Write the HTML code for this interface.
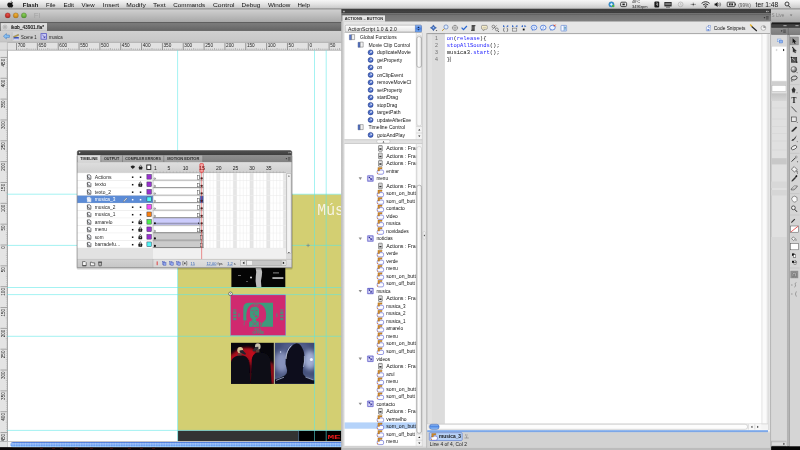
<!DOCTYPE html>
<html><head><meta charset="utf-8"><title>Flash - ikob_43901.fla</title>
<style>html,body{margin:0;padding:0;background:#000;overflow:hidden}svg{display:block;will-change:transform}text{white-space:pre}</style>
</head><body>
<svg width="800" height="450" viewBox="0 0 800 450">
<defs>
<linearGradient id="g1" x1="0" y1="0" x2="0" y2="1"><stop offset="0" stop-color="#d2d2d2"/><stop offset="0.5" stop-color="#bdbdbd"/><stop offset="1" stop-color="#a6a6a6"/></linearGradient>
<radialGradient id="g2" cx="0.5" cy="0.35" r="0.65"><stop offset="0" stop-color="#e8504a"/><stop offset="1" stop-color="#a8221c"/></radialGradient>
<radialGradient id="g3" cx="0.5" cy="0.35" r="0.65"><stop offset="0" stop-color="#f0b03a"/><stop offset="1" stop-color="#b97a12"/></radialGradient>
<radialGradient id="g4" cx="0.5" cy="0.35" r="0.65"><stop offset="0" stop-color="#8ccf5a"/><stop offset="1" stop-color="#4c9428"/></radialGradient>
<linearGradient id="g5" x1="0" y1="0" x2="0" y2="1"><stop offset="0" stop-color="#7e7e7e"/><stop offset="1" stop-color="#646464"/></linearGradient>
<linearGradient id="g6" x1="0" y1="0" x2="0" y2="1"><stop offset="0" stop-color="#e2e2e2"/><stop offset="1" stop-color="#cecece"/></linearGradient>
<linearGradient id="g7" x1="0" y1="0" x2="0" y2="1"><stop offset="0" stop-color="#d0d0d0"/><stop offset="1" stop-color="#c6c6c6"/></linearGradient>
<filter id="b0" x="-5%" y="-5%" width="110%" height="110%"><feGaussianBlur stdDeviation="0.35"/></filter>
<filter id="b1" x="-20%" y="-20%" width="140%" height="140%"><feGaussianBlur stdDeviation="0.7"/></filter>
<filter id="b2" x="-20%" y="-20%" width="140%" height="140%"><feGaussianBlur stdDeviation="1.4"/></filter>
<filter id="b3" x="-30%" y="-30%" width="160%" height="160%"><feGaussianBlur stdDeviation="2.6"/></filter>
<clipPath id="cA"><rect x="231.4" y="262" width="53.9" height="25.1"/></clipPath>
<clipPath id="cB"><rect x="231" y="342.8" width="42.9" height="41"/></clipPath>
<clipPath id="cC"><rect x="274.7" y="342.8" width="40" height="41"/></clipPath>
<linearGradient id="g8" x1="0" y1="0" x2="0" y2="1"><stop offset="0" stop-color="#2c4cb0"/><stop offset="0.12" stop-color="#5584e2"/><stop offset="0.38" stop-color="#a6ccfc"/><stop offset="0.58" stop-color="#5c92ee"/><stop offset="0.85" stop-color="#8cc2fc"/><stop offset="1" stop-color="#a8d6ff"/></linearGradient>
<linearGradient id="g9" x1="0" y1="0" x2="0" y2="1"><stop offset="0" stop-color="#505050"/><stop offset="1" stop-color="#3a3a3a"/></linearGradient>
<linearGradient id="g10" x1="0" y1="0" x2="0" y2="1"><stop offset="0" stop-color="#8e8e8e"/><stop offset="1" stop-color="#808080"/></linearGradient>
<linearGradient id="g11" x1="0" y1="0" x2="0" y2="1"><stop offset="0" stop-color="#e2e2e2"/><stop offset="1" stop-color="#d4d4d4"/></linearGradient>
<linearGradient id="g12" x1="0" y1="0" x2="0" y2="1"><stop offset="0" stop-color="#b2b2b2"/><stop offset="1" stop-color="#9e9e9e"/></linearGradient>
<linearGradient id="g13" x1="0" y1="0" x2="0" y2="1"><stop offset="0" stop-color="#b2b2b2"/><stop offset="1" stop-color="#9e9e9e"/></linearGradient>
<linearGradient id="g14" x1="0" y1="0" x2="0" y2="1"><stop offset="0" stop-color="#b2b2b2"/><stop offset="1" stop-color="#9e9e9e"/></linearGradient>
<linearGradient id="g15" x1="0" y1="0" x2="0" y2="1"><stop offset="0" stop-color="#dedede"/><stop offset="1" stop-color="#d0d0d0"/></linearGradient>
<linearGradient id="g16" x1="0" y1="0" x2="0" y2="1"><stop offset="0" stop-color="#d2d2d2"/><stop offset="1" stop-color="#c6c6c6"/></linearGradient>
<linearGradient id="g17" x1="0" y1="0" x2="0" y2="1"><stop offset="0" stop-color="#e0e0e0"/><stop offset="1" stop-color="#d4d4d4"/></linearGradient>
<linearGradient id="g18" x1="0" y1="0" x2="0" y2="1"><stop offset="0" stop-color="#2c2c2c"/><stop offset="0.5" stop-color="#424242"/><stop offset="1" stop-color="#3a3a3a"/></linearGradient>
<linearGradient id="g19" x1="0" y1="0" x2="0" y2="1"><stop offset="0" stop-color="#505050"/><stop offset="0.25" stop-color="#747474"/><stop offset="1" stop-color="#808080"/></linearGradient>
<linearGradient id="g20" x1="0" y1="0" x2="0" y2="1"><stop offset="0" stop-color="#e8e8e8"/><stop offset="1" stop-color="#dedede"/></linearGradient>
<linearGradient id="g21" x1="0" y1="0" x2="0" y2="1"><stop offset="0" stop-color="#ffffff"/><stop offset="0.5" stop-color="#f2f2f2"/><stop offset="1" stop-color="#e4e4e4"/></linearGradient>
<linearGradient id="g22" x1="0" y1="0" x2="0" y2="1"><stop offset="0" stop-color="#8db8f4"/><stop offset="0.5" stop-color="#4a82e0"/><stop offset="1" stop-color="#78b0f6"/></linearGradient>
<linearGradient id="g23" x1="0" y1="0" x2="1" y2="0"><stop offset="0" stop-color="#e2e2e2"/><stop offset="0.4" stop-color="#ffffff"/><stop offset="1" stop-color="#dadada"/></linearGradient>
<linearGradient id="g24" x1="0" y1="0" x2="1" y2="0"><stop offset="0" stop-color="#e6e6e6"/><stop offset="0.4" stop-color="#ffffff"/><stop offset="1" stop-color="#dedede"/></linearGradient>
<linearGradient id="g25" x1="0" y1="0" x2="1" y2="0"><stop offset="0" stop-color="#9c9c9c"/><stop offset="0.35" stop-color="#c8c8c8"/><stop offset="1" stop-color="#e2e2e2"/></linearGradient>
<linearGradient id="g26" x1="0" y1="0" x2="0" y2="1"><stop offset="0" stop-color="#9cc4f8"/><stop offset="0.45" stop-color="#4f88e4"/><stop offset="1" stop-color="#9ccafc"/></linearGradient>
<linearGradient id="g27" x1="0" y1="0" x2="0" y2="1"><stop offset="0" stop-color="#9cc0f2"/><stop offset="1" stop-color="#6a98e0"/></linearGradient>
<linearGradient id="g28" x1="0" y1="0" x2="1" y2="0"><stop offset="0" stop-color="#dcdcdc"/><stop offset="0.5" stop-color="#a2a2a2"/><stop offset="1" stop-color="#cfcfcf"/></linearGradient>
<linearGradient id="g29" x1="0" y1="0" x2="0" y2="1"><stop offset="0" stop-color="#2e2e2e"/><stop offset="0.5" stop-color="#444"/><stop offset="1" stop-color="#3a3a3a"/></linearGradient>
<linearGradient id="g30" x1="0" y1="0" x2="0" y2="1"><stop offset="0" stop-color="#8e8e8e"/><stop offset="1" stop-color="#7c7c7c"/></linearGradient>
<linearGradient id="g31" x1="0" y1="0" x2="0" y2="1"><stop offset="0" stop-color="#c2c2c2"/><stop offset="1" stop-color="#d6d6d6"/></linearGradient>
<linearGradient id="g32" x1="0" y1="0" x2="1" y2="0"><stop offset="0" stop-color="#d4d4d4"/><stop offset="0.45" stop-color="#a8a8a8"/><stop offset="1" stop-color="#c4c4c4"/></linearGradient>
<radialGradient id="g33" cx="0.35" cy="0.3" r="0.8"><stop offset="0" stop-color="#f4f4f4"/><stop offset="1" stop-color="#444"/></radialGradient>
<linearGradient id="g34" x1="0" y1="0" x2="0" y2="1"><stop offset="0" stop-color="#f6f6f6"/><stop offset="0.45" stop-color="#e4e4e4"/><stop offset="1" stop-color="#c6c6c6"/></linearGradient>
</defs>
<rect x="0" y="8.5" width="800" height="14" fill="url(#g1)" />
<line x1="0" y1="8.8" x2="800" y2="8.8" stroke="#8a8a8a" stroke-width="0.6" />
<circle cx="7.7" cy="15.4" r="2.65" fill="url(#g2)" stroke="#6a6a6a" stroke-opacity="0.5" stroke-width="0.4"/>
<circle cx="15.8" cy="15.4" r="2.65" fill="url(#g3)" stroke="#6a6a6a" stroke-opacity="0.5" stroke-width="0.4"/>
<circle cx="23.9" cy="15.4" r="2.65" fill="url(#g4)" stroke="#6a6a6a" stroke-opacity="0.5" stroke-width="0.4"/>
<text x="33.8" y="18.4" font-size="7.8" fill="#a4a4a4" font-family='"Liberation Sans","DejaVu Sans",sans-serif' >Fl</text>
<text x="771.6" y="17.3" font-size="5.4" fill="#828282" font-family='"Liberation Sans","DejaVu Sans",sans-serif' textLength="12.6" lengthAdjust="spacingAndGlyphs" >S Live</text>
<path d="M789.8 14.4 l2.6 0 l-1.3 1.9z" fill="#777"/>
<rect x="0" y="22.5" width="342" height="8.3" fill="url(#g5)" />
<line x1="0" y1="22.6" x2="342" y2="22.6" stroke="#555" stroke-width="0.5" />
<rect x="0.8" y="23.1" width="46.2" height="7.8" fill="url(#g6)" />
<circle cx="5" cy="27" r="1.9" fill="#e9e9e9" stroke="#8a8a8a" stroke-width="0.5"/>
<path d="M4.1 26.1l1.8 1.8M5.9 26.1l-1.8 1.8" stroke="#777" stroke-width="0.5"/>
<text x="11" y="28.9" font-size="4.6" fill="#111" font-family='"Liberation Sans","DejaVu Sans",sans-serif' textLength="33" lengthAdjust="spacingAndGlyphs" stroke="#111" stroke-width="0.12">ikob_43901.fla*</text>
<rect x="0" y="30.8" width="342" height="11.4" fill="url(#g7)" />
<line x1="0" y1="42.3" x2="342" y2="42.3" stroke="#9a9a9a" stroke-width="0.5" />
<path d="M3.4 36.2 l3-2.6 v1.5 h3 v2.3 h-3 v1.5z" fill="#86c0f4" stroke="#3a72b8" stroke-width="0.5"/>
<rect x="12.2" y="32.2" width="7.7" height="8.8" fill="#d6d6d6" />
<line x1="12.2" y1="32.2" x2="12.2" y2="41" stroke="#a8a8a8" stroke-width="0.4" />
<path d="M13.6 37 h5.2 v2.8 h-5.2z" fill="#3a50b8"/><path d="M13.4 36.4 l5-2.2 l0.5 1.1 l-5 2.2z" fill="#c8a63a" stroke="#554" stroke-width="0.3"/><rect x="13.6" y="38.6" width="5.2" height="1.2" fill="#e8e8ff"/>
<text x="21" y="38.6" font-size="4.6" fill="#222" font-family='"Liberation Sans","DejaVu Sans",sans-serif' textLength="15.5" lengthAdjust="spacingAndGlyphs" >Scene 1</text>
<rect x="40.6" y="33.2" width="6.2" height="6.4" fill="#5a5ac8" />
<rect x="41.4" y="34" width="4.6" height="4.8" fill="#c8c8f4" />
<path d="M42.4 35 l2.6 2.6 M45 37.6 v-1.4 M45 37.6 h-1.4" stroke="#2a2a90" stroke-width="0.6" fill="none"/>
<text x="49" y="38.6" font-size="4.6" fill="#222" font-family='"Liberation Sans","DejaVu Sans",sans-serif' textLength="13.6" lengthAdjust="spacingAndGlyphs" >musica</text>
<rect x="0" y="42.3" width="342" height="7.9" fill="#e2e2e2" />
<rect x="0" y="49" width="7.4" height="392.5" fill="#e4e4e4" />
<line x1="0" y1="50.1" x2="342" y2="50.1" stroke="#a8a8a8" stroke-width="0.4" />
<line x1="7.4" y1="49" x2="7.4" y2="441.5" stroke="#9a9a9a" stroke-width="0.4" />
<line x1="16.54" y1="43" x2="16.54" y2="50" stroke="#444" stroke-width="0.5" />
<text x="17.64" y="47.4" font-size="4.7" fill="#222" font-family='"Liberation Sans","DejaVu Sans",sans-serif' >700</text>
<line x1="18.62" y1="48.6" x2="18.62" y2="49.8" stroke="#555" stroke-width="0.35" />
<line x1="20.71" y1="48.6" x2="20.71" y2="49.8" stroke="#555" stroke-width="0.35" />
<line x1="22.79" y1="48.6" x2="22.79" y2="49.8" stroke="#555" stroke-width="0.35" />
<line x1="24.88" y1="48.6" x2="24.88" y2="49.8" stroke="#555" stroke-width="0.35" />
<line x1="26.96" y1="48" x2="26.96" y2="49.8" stroke="#555" stroke-width="0.35" />
<line x1="29.04" y1="48.6" x2="29.04" y2="49.8" stroke="#555" stroke-width="0.35" />
<line x1="31.13" y1="48.6" x2="31.13" y2="49.8" stroke="#555" stroke-width="0.35" />
<line x1="33.21" y1="48.6" x2="33.21" y2="49.8" stroke="#555" stroke-width="0.35" />
<line x1="35.3" y1="48.6" x2="35.3" y2="49.8" stroke="#555" stroke-width="0.35" />
<line x1="37.38" y1="43" x2="37.38" y2="50" stroke="#444" stroke-width="0.5" />
<text x="38.48" y="47.4" font-size="4.7" fill="#222" font-family='"Liberation Sans","DejaVu Sans",sans-serif' >650</text>
<line x1="39.46" y1="48.6" x2="39.46" y2="49.8" stroke="#555" stroke-width="0.35" />
<line x1="41.55" y1="48.6" x2="41.55" y2="49.8" stroke="#555" stroke-width="0.35" />
<line x1="43.63" y1="48.6" x2="43.63" y2="49.8" stroke="#555" stroke-width="0.35" />
<line x1="45.72" y1="48.6" x2="45.72" y2="49.8" stroke="#555" stroke-width="0.35" />
<line x1="47.8" y1="48" x2="47.8" y2="49.8" stroke="#555" stroke-width="0.35" />
<line x1="49.88" y1="48.6" x2="49.88" y2="49.8" stroke="#555" stroke-width="0.35" />
<line x1="51.97" y1="48.6" x2="51.97" y2="49.8" stroke="#555" stroke-width="0.35" />
<line x1="54.05" y1="48.6" x2="54.05" y2="49.8" stroke="#555" stroke-width="0.35" />
<line x1="56.14" y1="48.6" x2="56.14" y2="49.8" stroke="#555" stroke-width="0.35" />
<line x1="58.22" y1="43" x2="58.22" y2="50" stroke="#444" stroke-width="0.5" />
<text x="59.32" y="47.4" font-size="4.7" fill="#222" font-family='"Liberation Sans","DejaVu Sans",sans-serif' >600</text>
<line x1="60.3" y1="48.6" x2="60.3" y2="49.8" stroke="#555" stroke-width="0.35" />
<line x1="62.39" y1="48.6" x2="62.39" y2="49.8" stroke="#555" stroke-width="0.35" />
<line x1="64.47" y1="48.6" x2="64.47" y2="49.8" stroke="#555" stroke-width="0.35" />
<line x1="66.56" y1="48.6" x2="66.56" y2="49.8" stroke="#555" stroke-width="0.35" />
<line x1="68.64" y1="48" x2="68.64" y2="49.8" stroke="#555" stroke-width="0.35" />
<line x1="70.72" y1="48.6" x2="70.72" y2="49.8" stroke="#555" stroke-width="0.35" />
<line x1="72.81" y1="48.6" x2="72.81" y2="49.8" stroke="#555" stroke-width="0.35" />
<line x1="74.89" y1="48.6" x2="74.89" y2="49.8" stroke="#555" stroke-width="0.35" />
<line x1="76.98" y1="48.6" x2="76.98" y2="49.8" stroke="#555" stroke-width="0.35" />
<line x1="79.06" y1="43" x2="79.06" y2="50" stroke="#444" stroke-width="0.5" />
<text x="80.16" y="47.4" font-size="4.7" fill="#222" font-family='"Liberation Sans","DejaVu Sans",sans-serif' >550</text>
<line x1="81.14" y1="48.6" x2="81.14" y2="49.8" stroke="#555" stroke-width="0.35" />
<line x1="83.23" y1="48.6" x2="83.23" y2="49.8" stroke="#555" stroke-width="0.35" />
<line x1="85.31" y1="48.6" x2="85.31" y2="49.8" stroke="#555" stroke-width="0.35" />
<line x1="87.4" y1="48.6" x2="87.4" y2="49.8" stroke="#555" stroke-width="0.35" />
<line x1="89.48" y1="48" x2="89.48" y2="49.8" stroke="#555" stroke-width="0.35" />
<line x1="91.56" y1="48.6" x2="91.56" y2="49.8" stroke="#555" stroke-width="0.35" />
<line x1="93.65" y1="48.6" x2="93.65" y2="49.8" stroke="#555" stroke-width="0.35" />
<line x1="95.73" y1="48.6" x2="95.73" y2="49.8" stroke="#555" stroke-width="0.35" />
<line x1="97.82" y1="48.6" x2="97.82" y2="49.8" stroke="#555" stroke-width="0.35" />
<line x1="99.9" y1="43" x2="99.9" y2="50" stroke="#444" stroke-width="0.5" />
<text x="101" y="47.4" font-size="4.7" fill="#222" font-family='"Liberation Sans","DejaVu Sans",sans-serif' >500</text>
<line x1="101.98" y1="48.6" x2="101.98" y2="49.8" stroke="#555" stroke-width="0.35" />
<line x1="104.07" y1="48.6" x2="104.07" y2="49.8" stroke="#555" stroke-width="0.35" />
<line x1="106.15" y1="48.6" x2="106.15" y2="49.8" stroke="#555" stroke-width="0.35" />
<line x1="108.24" y1="48.6" x2="108.24" y2="49.8" stroke="#555" stroke-width="0.35" />
<line x1="110.32" y1="48" x2="110.32" y2="49.8" stroke="#555" stroke-width="0.35" />
<line x1="112.4" y1="48.6" x2="112.4" y2="49.8" stroke="#555" stroke-width="0.35" />
<line x1="114.49" y1="48.6" x2="114.49" y2="49.8" stroke="#555" stroke-width="0.35" />
<line x1="116.57" y1="48.6" x2="116.57" y2="49.8" stroke="#555" stroke-width="0.35" />
<line x1="118.66" y1="48.6" x2="118.66" y2="49.8" stroke="#555" stroke-width="0.35" />
<line x1="120.74" y1="43" x2="120.74" y2="50" stroke="#444" stroke-width="0.5" />
<text x="121.84" y="47.4" font-size="4.7" fill="#222" font-family='"Liberation Sans","DejaVu Sans",sans-serif' >450</text>
<line x1="122.82" y1="48.6" x2="122.82" y2="49.8" stroke="#555" stroke-width="0.35" />
<line x1="124.91" y1="48.6" x2="124.91" y2="49.8" stroke="#555" stroke-width="0.35" />
<line x1="126.99" y1="48.6" x2="126.99" y2="49.8" stroke="#555" stroke-width="0.35" />
<line x1="129.08" y1="48.6" x2="129.08" y2="49.8" stroke="#555" stroke-width="0.35" />
<line x1="131.16" y1="48" x2="131.16" y2="49.8" stroke="#555" stroke-width="0.35" />
<line x1="133.24" y1="48.6" x2="133.24" y2="49.8" stroke="#555" stroke-width="0.35" />
<line x1="135.33" y1="48.6" x2="135.33" y2="49.8" stroke="#555" stroke-width="0.35" />
<line x1="137.41" y1="48.6" x2="137.41" y2="49.8" stroke="#555" stroke-width="0.35" />
<line x1="139.5" y1="48.6" x2="139.5" y2="49.8" stroke="#555" stroke-width="0.35" />
<line x1="141.58" y1="43" x2="141.58" y2="50" stroke="#444" stroke-width="0.5" />
<text x="142.68" y="47.4" font-size="4.7" fill="#222" font-family='"Liberation Sans","DejaVu Sans",sans-serif' >400</text>
<line x1="143.66" y1="48.6" x2="143.66" y2="49.8" stroke="#555" stroke-width="0.35" />
<line x1="145.75" y1="48.6" x2="145.75" y2="49.8" stroke="#555" stroke-width="0.35" />
<line x1="147.83" y1="48.6" x2="147.83" y2="49.8" stroke="#555" stroke-width="0.35" />
<line x1="149.92" y1="48.6" x2="149.92" y2="49.8" stroke="#555" stroke-width="0.35" />
<line x1="152" y1="48" x2="152" y2="49.8" stroke="#555" stroke-width="0.35" />
<line x1="154.08" y1="48.6" x2="154.08" y2="49.8" stroke="#555" stroke-width="0.35" />
<line x1="156.17" y1="48.6" x2="156.17" y2="49.8" stroke="#555" stroke-width="0.35" />
<line x1="158.25" y1="48.6" x2="158.25" y2="49.8" stroke="#555" stroke-width="0.35" />
<line x1="160.34" y1="48.6" x2="160.34" y2="49.8" stroke="#555" stroke-width="0.35" />
<line x1="162.42" y1="43" x2="162.42" y2="50" stroke="#444" stroke-width="0.5" />
<text x="163.52" y="47.4" font-size="4.7" fill="#222" font-family='"Liberation Sans","DejaVu Sans",sans-serif' >350</text>
<line x1="164.5" y1="48.6" x2="164.5" y2="49.8" stroke="#555" stroke-width="0.35" />
<line x1="166.59" y1="48.6" x2="166.59" y2="49.8" stroke="#555" stroke-width="0.35" />
<line x1="168.67" y1="48.6" x2="168.67" y2="49.8" stroke="#555" stroke-width="0.35" />
<line x1="170.76" y1="48.6" x2="170.76" y2="49.8" stroke="#555" stroke-width="0.35" />
<line x1="172.84" y1="48" x2="172.84" y2="49.8" stroke="#555" stroke-width="0.35" />
<line x1="174.92" y1="48.6" x2="174.92" y2="49.8" stroke="#555" stroke-width="0.35" />
<line x1="177.01" y1="48.6" x2="177.01" y2="49.8" stroke="#555" stroke-width="0.35" />
<line x1="179.09" y1="48.6" x2="179.09" y2="49.8" stroke="#555" stroke-width="0.35" />
<line x1="181.18" y1="48.6" x2="181.18" y2="49.8" stroke="#555" stroke-width="0.35" />
<line x1="183.26" y1="43" x2="183.26" y2="50" stroke="#444" stroke-width="0.5" />
<text x="184.36" y="47.4" font-size="4.7" fill="#222" font-family='"Liberation Sans","DejaVu Sans",sans-serif' >300</text>
<line x1="185.34" y1="48.6" x2="185.34" y2="49.8" stroke="#555" stroke-width="0.35" />
<line x1="187.43" y1="48.6" x2="187.43" y2="49.8" stroke="#555" stroke-width="0.35" />
<line x1="189.51" y1="48.6" x2="189.51" y2="49.8" stroke="#555" stroke-width="0.35" />
<line x1="191.6" y1="48.6" x2="191.6" y2="49.8" stroke="#555" stroke-width="0.35" />
<line x1="193.68" y1="48" x2="193.68" y2="49.8" stroke="#555" stroke-width="0.35" />
<line x1="195.76" y1="48.6" x2="195.76" y2="49.8" stroke="#555" stroke-width="0.35" />
<line x1="197.85" y1="48.6" x2="197.85" y2="49.8" stroke="#555" stroke-width="0.35" />
<line x1="199.93" y1="48.6" x2="199.93" y2="49.8" stroke="#555" stroke-width="0.35" />
<line x1="202.02" y1="48.6" x2="202.02" y2="49.8" stroke="#555" stroke-width="0.35" />
<line x1="204.1" y1="43" x2="204.1" y2="50" stroke="#444" stroke-width="0.5" />
<text x="205.2" y="47.4" font-size="4.7" fill="#222" font-family='"Liberation Sans","DejaVu Sans",sans-serif' >250</text>
<line x1="206.18" y1="48.6" x2="206.18" y2="49.8" stroke="#555" stroke-width="0.35" />
<line x1="208.27" y1="48.6" x2="208.27" y2="49.8" stroke="#555" stroke-width="0.35" />
<line x1="210.35" y1="48.6" x2="210.35" y2="49.8" stroke="#555" stroke-width="0.35" />
<line x1="212.44" y1="48.6" x2="212.44" y2="49.8" stroke="#555" stroke-width="0.35" />
<line x1="214.52" y1="48" x2="214.52" y2="49.8" stroke="#555" stroke-width="0.35" />
<line x1="216.6" y1="48.6" x2="216.6" y2="49.8" stroke="#555" stroke-width="0.35" />
<line x1="218.69" y1="48.6" x2="218.69" y2="49.8" stroke="#555" stroke-width="0.35" />
<line x1="220.77" y1="48.6" x2="220.77" y2="49.8" stroke="#555" stroke-width="0.35" />
<line x1="222.86" y1="48.6" x2="222.86" y2="49.8" stroke="#555" stroke-width="0.35" />
<line x1="224.94" y1="43" x2="224.94" y2="50" stroke="#444" stroke-width="0.5" />
<text x="226.04" y="47.4" font-size="4.7" fill="#222" font-family='"Liberation Sans","DejaVu Sans",sans-serif' >200</text>
<line x1="227.02" y1="48.6" x2="227.02" y2="49.8" stroke="#555" stroke-width="0.35" />
<line x1="229.11" y1="48.6" x2="229.11" y2="49.8" stroke="#555" stroke-width="0.35" />
<line x1="231.19" y1="48.6" x2="231.19" y2="49.8" stroke="#555" stroke-width="0.35" />
<line x1="233.28" y1="48.6" x2="233.28" y2="49.8" stroke="#555" stroke-width="0.35" />
<line x1="235.36" y1="48" x2="235.36" y2="49.8" stroke="#555" stroke-width="0.35" />
<line x1="237.44" y1="48.6" x2="237.44" y2="49.8" stroke="#555" stroke-width="0.35" />
<line x1="239.53" y1="48.6" x2="239.53" y2="49.8" stroke="#555" stroke-width="0.35" />
<line x1="241.61" y1="48.6" x2="241.61" y2="49.8" stroke="#555" stroke-width="0.35" />
<line x1="243.7" y1="48.6" x2="243.7" y2="49.8" stroke="#555" stroke-width="0.35" />
<line x1="245.78" y1="43" x2="245.78" y2="50" stroke="#444" stroke-width="0.5" />
<text x="246.88" y="47.4" font-size="4.7" fill="#222" font-family='"Liberation Sans","DejaVu Sans",sans-serif' >150</text>
<line x1="247.86" y1="48.6" x2="247.86" y2="49.8" stroke="#555" stroke-width="0.35" />
<line x1="249.95" y1="48.6" x2="249.95" y2="49.8" stroke="#555" stroke-width="0.35" />
<line x1="252.03" y1="48.6" x2="252.03" y2="49.8" stroke="#555" stroke-width="0.35" />
<line x1="254.12" y1="48.6" x2="254.12" y2="49.8" stroke="#555" stroke-width="0.35" />
<line x1="256.2" y1="48" x2="256.2" y2="49.8" stroke="#555" stroke-width="0.35" />
<line x1="258.28" y1="48.6" x2="258.28" y2="49.8" stroke="#555" stroke-width="0.35" />
<line x1="260.37" y1="48.6" x2="260.37" y2="49.8" stroke="#555" stroke-width="0.35" />
<line x1="262.45" y1="48.6" x2="262.45" y2="49.8" stroke="#555" stroke-width="0.35" />
<line x1="264.54" y1="48.6" x2="264.54" y2="49.8" stroke="#555" stroke-width="0.35" />
<line x1="266.62" y1="43" x2="266.62" y2="50" stroke="#444" stroke-width="0.5" />
<text x="267.72" y="47.4" font-size="4.7" fill="#222" font-family='"Liberation Sans","DejaVu Sans",sans-serif' >100</text>
<line x1="268.7" y1="48.6" x2="268.7" y2="49.8" stroke="#555" stroke-width="0.35" />
<line x1="270.79" y1="48.6" x2="270.79" y2="49.8" stroke="#555" stroke-width="0.35" />
<line x1="272.87" y1="48.6" x2="272.87" y2="49.8" stroke="#555" stroke-width="0.35" />
<line x1="274.96" y1="48.6" x2="274.96" y2="49.8" stroke="#555" stroke-width="0.35" />
<line x1="277.04" y1="48" x2="277.04" y2="49.8" stroke="#555" stroke-width="0.35" />
<line x1="279.12" y1="48.6" x2="279.12" y2="49.8" stroke="#555" stroke-width="0.35" />
<line x1="281.21" y1="48.6" x2="281.21" y2="49.8" stroke="#555" stroke-width="0.35" />
<line x1="283.29" y1="48.6" x2="283.29" y2="49.8" stroke="#555" stroke-width="0.35" />
<line x1="285.38" y1="48.6" x2="285.38" y2="49.8" stroke="#555" stroke-width="0.35" />
<line x1="287.46" y1="43" x2="287.46" y2="50" stroke="#444" stroke-width="0.5" />
<text x="288.56" y="47.4" font-size="4.7" fill="#222" font-family='"Liberation Sans","DejaVu Sans",sans-serif' >50</text>
<line x1="289.54" y1="48.6" x2="289.54" y2="49.8" stroke="#555" stroke-width="0.35" />
<line x1="291.63" y1="48.6" x2="291.63" y2="49.8" stroke="#555" stroke-width="0.35" />
<line x1="293.71" y1="48.6" x2="293.71" y2="49.8" stroke="#555" stroke-width="0.35" />
<line x1="295.8" y1="48.6" x2="295.8" y2="49.8" stroke="#555" stroke-width="0.35" />
<line x1="297.88" y1="48" x2="297.88" y2="49.8" stroke="#555" stroke-width="0.35" />
<line x1="299.96" y1="48.6" x2="299.96" y2="49.8" stroke="#555" stroke-width="0.35" />
<line x1="302.05" y1="48.6" x2="302.05" y2="49.8" stroke="#555" stroke-width="0.35" />
<line x1="304.13" y1="48.6" x2="304.13" y2="49.8" stroke="#555" stroke-width="0.35" />
<line x1="306.22" y1="48.6" x2="306.22" y2="49.8" stroke="#555" stroke-width="0.35" />
<line x1="308.3" y1="43" x2="308.3" y2="50" stroke="#444" stroke-width="0.5" />
<text x="309.4" y="47.4" font-size="4.7" fill="#222" font-family='"Liberation Sans","DejaVu Sans",sans-serif' >0</text>
<line x1="310.38" y1="48.6" x2="310.38" y2="49.8" stroke="#555" stroke-width="0.35" />
<line x1="312.47" y1="48.6" x2="312.47" y2="49.8" stroke="#555" stroke-width="0.35" />
<line x1="314.55" y1="48.6" x2="314.55" y2="49.8" stroke="#555" stroke-width="0.35" />
<line x1="316.64" y1="48.6" x2="316.64" y2="49.8" stroke="#555" stroke-width="0.35" />
<line x1="318.72" y1="48" x2="318.72" y2="49.8" stroke="#555" stroke-width="0.35" />
<line x1="320.8" y1="48.6" x2="320.8" y2="49.8" stroke="#555" stroke-width="0.35" />
<line x1="322.89" y1="48.6" x2="322.89" y2="49.8" stroke="#555" stroke-width="0.35" />
<line x1="324.97" y1="48.6" x2="324.97" y2="49.8" stroke="#555" stroke-width="0.35" />
<line x1="327.06" y1="48.6" x2="327.06" y2="49.8" stroke="#555" stroke-width="0.35" />
<line x1="329.14" y1="43" x2="329.14" y2="50" stroke="#444" stroke-width="0.5" />
<text x="330.24" y="47.4" font-size="4.7" fill="#222" font-family='"Liberation Sans","DejaVu Sans",sans-serif' >50</text>
<line x1="331.22" y1="48.6" x2="331.22" y2="49.8" stroke="#555" stroke-width="0.35" />
<line x1="333.31" y1="48.6" x2="333.31" y2="49.8" stroke="#555" stroke-width="0.35" />
<line x1="335.39" y1="48.6" x2="335.39" y2="49.8" stroke="#555" stroke-width="0.35" />
<line x1="337.48" y1="48.6" x2="337.48" y2="49.8" stroke="#555" stroke-width="0.35" />
<line x1="339.56" y1="48" x2="339.56" y2="49.8" stroke="#555" stroke-width="0.35" />
<line x1="0.5" y1="57.44" x2="7.4" y2="57.44" stroke="#555" stroke-width="0.45" />
<text transform="translate(4.9 66.44) rotate(-90)" font-size="4.6" fill="#222" font-family='"Liberation Sans","DejaVu Sans",sans-serif'>450</text>
<line x1="6.4" y1="59.52" x2="7.4" y2="59.52" stroke="#666" stroke-width="0.3" />
<line x1="6.4" y1="61.61" x2="7.4" y2="61.61" stroke="#666" stroke-width="0.3" />
<line x1="6.4" y1="63.69" x2="7.4" y2="63.69" stroke="#666" stroke-width="0.3" />
<line x1="6.4" y1="65.78" x2="7.4" y2="65.78" stroke="#666" stroke-width="0.3" />
<line x1="5.8" y1="67.86" x2="7.4" y2="67.86" stroke="#666" stroke-width="0.3" />
<line x1="6.4" y1="69.94" x2="7.4" y2="69.94" stroke="#666" stroke-width="0.3" />
<line x1="6.4" y1="72.03" x2="7.4" y2="72.03" stroke="#666" stroke-width="0.3" />
<line x1="6.4" y1="74.11" x2="7.4" y2="74.11" stroke="#666" stroke-width="0.3" />
<line x1="6.4" y1="76.2" x2="7.4" y2="76.2" stroke="#666" stroke-width="0.3" />
<line x1="0.5" y1="78.28" x2="7.4" y2="78.28" stroke="#555" stroke-width="0.45" />
<text transform="translate(4.9 87.28) rotate(-90)" font-size="4.6" fill="#222" font-family='"Liberation Sans","DejaVu Sans",sans-serif'>400</text>
<line x1="6.4" y1="80.36" x2="7.4" y2="80.36" stroke="#666" stroke-width="0.3" />
<line x1="6.4" y1="82.45" x2="7.4" y2="82.45" stroke="#666" stroke-width="0.3" />
<line x1="6.4" y1="84.53" x2="7.4" y2="84.53" stroke="#666" stroke-width="0.3" />
<line x1="6.4" y1="86.62" x2="7.4" y2="86.62" stroke="#666" stroke-width="0.3" />
<line x1="5.8" y1="88.7" x2="7.4" y2="88.7" stroke="#666" stroke-width="0.3" />
<line x1="6.4" y1="90.78" x2="7.4" y2="90.78" stroke="#666" stroke-width="0.3" />
<line x1="6.4" y1="92.87" x2="7.4" y2="92.87" stroke="#666" stroke-width="0.3" />
<line x1="6.4" y1="94.95" x2="7.4" y2="94.95" stroke="#666" stroke-width="0.3" />
<line x1="6.4" y1="97.04" x2="7.4" y2="97.04" stroke="#666" stroke-width="0.3" />
<line x1="0.5" y1="99.12" x2="7.4" y2="99.12" stroke="#555" stroke-width="0.45" />
<text transform="translate(4.9 108.12) rotate(-90)" font-size="4.6" fill="#222" font-family='"Liberation Sans","DejaVu Sans",sans-serif'>350</text>
<line x1="6.4" y1="101.2" x2="7.4" y2="101.2" stroke="#666" stroke-width="0.3" />
<line x1="6.4" y1="103.29" x2="7.4" y2="103.29" stroke="#666" stroke-width="0.3" />
<line x1="6.4" y1="105.37" x2="7.4" y2="105.37" stroke="#666" stroke-width="0.3" />
<line x1="6.4" y1="107.46" x2="7.4" y2="107.46" stroke="#666" stroke-width="0.3" />
<line x1="5.8" y1="109.54" x2="7.4" y2="109.54" stroke="#666" stroke-width="0.3" />
<line x1="6.4" y1="111.62" x2="7.4" y2="111.62" stroke="#666" stroke-width="0.3" />
<line x1="6.4" y1="113.71" x2="7.4" y2="113.71" stroke="#666" stroke-width="0.3" />
<line x1="6.4" y1="115.79" x2="7.4" y2="115.79" stroke="#666" stroke-width="0.3" />
<line x1="6.4" y1="117.88" x2="7.4" y2="117.88" stroke="#666" stroke-width="0.3" />
<line x1="0.5" y1="119.96" x2="7.4" y2="119.96" stroke="#555" stroke-width="0.45" />
<text transform="translate(4.9 128.96) rotate(-90)" font-size="4.6" fill="#222" font-family='"Liberation Sans","DejaVu Sans",sans-serif'>300</text>
<line x1="6.4" y1="122.04" x2="7.4" y2="122.04" stroke="#666" stroke-width="0.3" />
<line x1="6.4" y1="124.13" x2="7.4" y2="124.13" stroke="#666" stroke-width="0.3" />
<line x1="6.4" y1="126.21" x2="7.4" y2="126.21" stroke="#666" stroke-width="0.3" />
<line x1="6.4" y1="128.3" x2="7.4" y2="128.3" stroke="#666" stroke-width="0.3" />
<line x1="5.8" y1="130.38" x2="7.4" y2="130.38" stroke="#666" stroke-width="0.3" />
<line x1="6.4" y1="132.46" x2="7.4" y2="132.46" stroke="#666" stroke-width="0.3" />
<line x1="6.4" y1="134.55" x2="7.4" y2="134.55" stroke="#666" stroke-width="0.3" />
<line x1="6.4" y1="136.63" x2="7.4" y2="136.63" stroke="#666" stroke-width="0.3" />
<line x1="6.4" y1="138.72" x2="7.4" y2="138.72" stroke="#666" stroke-width="0.3" />
<line x1="0.5" y1="140.8" x2="7.4" y2="140.8" stroke="#555" stroke-width="0.45" />
<text transform="translate(4.9 149.8) rotate(-90)" font-size="4.6" fill="#222" font-family='"Liberation Sans","DejaVu Sans",sans-serif'>250</text>
<line x1="6.4" y1="142.88" x2="7.4" y2="142.88" stroke="#666" stroke-width="0.3" />
<line x1="6.4" y1="144.97" x2="7.4" y2="144.97" stroke="#666" stroke-width="0.3" />
<line x1="6.4" y1="147.05" x2="7.4" y2="147.05" stroke="#666" stroke-width="0.3" />
<line x1="6.4" y1="149.14" x2="7.4" y2="149.14" stroke="#666" stroke-width="0.3" />
<line x1="5.8" y1="151.22" x2="7.4" y2="151.22" stroke="#666" stroke-width="0.3" />
<line x1="6.4" y1="153.3" x2="7.4" y2="153.3" stroke="#666" stroke-width="0.3" />
<line x1="6.4" y1="155.39" x2="7.4" y2="155.39" stroke="#666" stroke-width="0.3" />
<line x1="6.4" y1="157.47" x2="7.4" y2="157.47" stroke="#666" stroke-width="0.3" />
<line x1="6.4" y1="159.56" x2="7.4" y2="159.56" stroke="#666" stroke-width="0.3" />
<line x1="0.5" y1="161.64" x2="7.4" y2="161.64" stroke="#555" stroke-width="0.45" />
<text transform="translate(4.9 170.64) rotate(-90)" font-size="4.6" fill="#222" font-family='"Liberation Sans","DejaVu Sans",sans-serif'>200</text>
<line x1="6.4" y1="163.72" x2="7.4" y2="163.72" stroke="#666" stroke-width="0.3" />
<line x1="6.4" y1="165.81" x2="7.4" y2="165.81" stroke="#666" stroke-width="0.3" />
<line x1="6.4" y1="167.89" x2="7.4" y2="167.89" stroke="#666" stroke-width="0.3" />
<line x1="6.4" y1="169.98" x2="7.4" y2="169.98" stroke="#666" stroke-width="0.3" />
<line x1="5.8" y1="172.06" x2="7.4" y2="172.06" stroke="#666" stroke-width="0.3" />
<line x1="6.4" y1="174.14" x2="7.4" y2="174.14" stroke="#666" stroke-width="0.3" />
<line x1="6.4" y1="176.23" x2="7.4" y2="176.23" stroke="#666" stroke-width="0.3" />
<line x1="6.4" y1="178.31" x2="7.4" y2="178.31" stroke="#666" stroke-width="0.3" />
<line x1="6.4" y1="180.4" x2="7.4" y2="180.4" stroke="#666" stroke-width="0.3" />
<line x1="0.5" y1="182.48" x2="7.4" y2="182.48" stroke="#555" stroke-width="0.45" />
<text transform="translate(4.9 191.48) rotate(-90)" font-size="4.6" fill="#222" font-family='"Liberation Sans","DejaVu Sans",sans-serif'>150</text>
<line x1="6.4" y1="184.56" x2="7.4" y2="184.56" stroke="#666" stroke-width="0.3" />
<line x1="6.4" y1="186.65" x2="7.4" y2="186.65" stroke="#666" stroke-width="0.3" />
<line x1="6.4" y1="188.73" x2="7.4" y2="188.73" stroke="#666" stroke-width="0.3" />
<line x1="6.4" y1="190.82" x2="7.4" y2="190.82" stroke="#666" stroke-width="0.3" />
<line x1="5.8" y1="192.9" x2="7.4" y2="192.9" stroke="#666" stroke-width="0.3" />
<line x1="6.4" y1="194.98" x2="7.4" y2="194.98" stroke="#666" stroke-width="0.3" />
<line x1="6.4" y1="197.07" x2="7.4" y2="197.07" stroke="#666" stroke-width="0.3" />
<line x1="6.4" y1="199.15" x2="7.4" y2="199.15" stroke="#666" stroke-width="0.3" />
<line x1="6.4" y1="201.24" x2="7.4" y2="201.24" stroke="#666" stroke-width="0.3" />
<line x1="0.5" y1="203.32" x2="7.4" y2="203.32" stroke="#555" stroke-width="0.45" />
<text transform="translate(4.9 212.32) rotate(-90)" font-size="4.6" fill="#222" font-family='"Liberation Sans","DejaVu Sans",sans-serif'>100</text>
<line x1="6.4" y1="205.4" x2="7.4" y2="205.4" stroke="#666" stroke-width="0.3" />
<line x1="6.4" y1="207.49" x2="7.4" y2="207.49" stroke="#666" stroke-width="0.3" />
<line x1="6.4" y1="209.57" x2="7.4" y2="209.57" stroke="#666" stroke-width="0.3" />
<line x1="6.4" y1="211.66" x2="7.4" y2="211.66" stroke="#666" stroke-width="0.3" />
<line x1="5.8" y1="213.74" x2="7.4" y2="213.74" stroke="#666" stroke-width="0.3" />
<line x1="6.4" y1="215.82" x2="7.4" y2="215.82" stroke="#666" stroke-width="0.3" />
<line x1="6.4" y1="217.91" x2="7.4" y2="217.91" stroke="#666" stroke-width="0.3" />
<line x1="6.4" y1="219.99" x2="7.4" y2="219.99" stroke="#666" stroke-width="0.3" />
<line x1="6.4" y1="222.08" x2="7.4" y2="222.08" stroke="#666" stroke-width="0.3" />
<line x1="0.5" y1="224.16" x2="7.4" y2="224.16" stroke="#555" stroke-width="0.45" />
<text transform="translate(4.9 230.56) rotate(-90)" font-size="4.6" fill="#222" font-family='"Liberation Sans","DejaVu Sans",sans-serif'>50</text>
<line x1="6.4" y1="226.24" x2="7.4" y2="226.24" stroke="#666" stroke-width="0.3" />
<line x1="6.4" y1="228.33" x2="7.4" y2="228.33" stroke="#666" stroke-width="0.3" />
<line x1="6.4" y1="230.41" x2="7.4" y2="230.41" stroke="#666" stroke-width="0.3" />
<line x1="6.4" y1="232.5" x2="7.4" y2="232.5" stroke="#666" stroke-width="0.3" />
<line x1="5.8" y1="234.58" x2="7.4" y2="234.58" stroke="#666" stroke-width="0.3" />
<line x1="6.4" y1="236.66" x2="7.4" y2="236.66" stroke="#666" stroke-width="0.3" />
<line x1="6.4" y1="238.75" x2="7.4" y2="238.75" stroke="#666" stroke-width="0.3" />
<line x1="6.4" y1="240.83" x2="7.4" y2="240.83" stroke="#666" stroke-width="0.3" />
<line x1="6.4" y1="242.92" x2="7.4" y2="242.92" stroke="#666" stroke-width="0.3" />
<line x1="0.5" y1="245" x2="7.4" y2="245" stroke="#555" stroke-width="0.45" />
<text transform="translate(4.9 248.8) rotate(-90)" font-size="4.6" fill="#222" font-family='"Liberation Sans","DejaVu Sans",sans-serif'>0</text>
<line x1="6.4" y1="247.08" x2="7.4" y2="247.08" stroke="#666" stroke-width="0.3" />
<line x1="6.4" y1="249.17" x2="7.4" y2="249.17" stroke="#666" stroke-width="0.3" />
<line x1="6.4" y1="251.25" x2="7.4" y2="251.25" stroke="#666" stroke-width="0.3" />
<line x1="6.4" y1="253.34" x2="7.4" y2="253.34" stroke="#666" stroke-width="0.3" />
<line x1="5.8" y1="255.42" x2="7.4" y2="255.42" stroke="#666" stroke-width="0.3" />
<line x1="6.4" y1="257.5" x2="7.4" y2="257.5" stroke="#666" stroke-width="0.3" />
<line x1="6.4" y1="259.59" x2="7.4" y2="259.59" stroke="#666" stroke-width="0.3" />
<line x1="6.4" y1="261.67" x2="7.4" y2="261.67" stroke="#666" stroke-width="0.3" />
<line x1="6.4" y1="263.76" x2="7.4" y2="263.76" stroke="#666" stroke-width="0.3" />
<line x1="0.5" y1="265.84" x2="7.4" y2="265.84" stroke="#555" stroke-width="0.45" />
<text transform="translate(4.9 272.24) rotate(-90)" font-size="4.6" fill="#222" font-family='"Liberation Sans","DejaVu Sans",sans-serif'>50</text>
<line x1="6.4" y1="267.92" x2="7.4" y2="267.92" stroke="#666" stroke-width="0.3" />
<line x1="6.4" y1="270.01" x2="7.4" y2="270.01" stroke="#666" stroke-width="0.3" />
<line x1="6.4" y1="272.09" x2="7.4" y2="272.09" stroke="#666" stroke-width="0.3" />
<line x1="6.4" y1="274.18" x2="7.4" y2="274.18" stroke="#666" stroke-width="0.3" />
<line x1="5.8" y1="276.26" x2="7.4" y2="276.26" stroke="#666" stroke-width="0.3" />
<line x1="6.4" y1="278.34" x2="7.4" y2="278.34" stroke="#666" stroke-width="0.3" />
<line x1="6.4" y1="280.43" x2="7.4" y2="280.43" stroke="#666" stroke-width="0.3" />
<line x1="6.4" y1="282.51" x2="7.4" y2="282.51" stroke="#666" stroke-width="0.3" />
<line x1="6.4" y1="284.6" x2="7.4" y2="284.6" stroke="#666" stroke-width="0.3" />
<line x1="0.5" y1="286.68" x2="7.4" y2="286.68" stroke="#555" stroke-width="0.45" />
<text transform="translate(4.9 295.68) rotate(-90)" font-size="4.6" fill="#222" font-family='"Liberation Sans","DejaVu Sans",sans-serif'>100</text>
<line x1="6.4" y1="288.76" x2="7.4" y2="288.76" stroke="#666" stroke-width="0.3" />
<line x1="6.4" y1="290.85" x2="7.4" y2="290.85" stroke="#666" stroke-width="0.3" />
<line x1="6.4" y1="292.93" x2="7.4" y2="292.93" stroke="#666" stroke-width="0.3" />
<line x1="6.4" y1="295.02" x2="7.4" y2="295.02" stroke="#666" stroke-width="0.3" />
<line x1="5.8" y1="297.1" x2="7.4" y2="297.1" stroke="#666" stroke-width="0.3" />
<line x1="6.4" y1="299.18" x2="7.4" y2="299.18" stroke="#666" stroke-width="0.3" />
<line x1="6.4" y1="301.27" x2="7.4" y2="301.27" stroke="#666" stroke-width="0.3" />
<line x1="6.4" y1="303.35" x2="7.4" y2="303.35" stroke="#666" stroke-width="0.3" />
<line x1="6.4" y1="305.44" x2="7.4" y2="305.44" stroke="#666" stroke-width="0.3" />
<line x1="0.5" y1="307.52" x2="7.4" y2="307.52" stroke="#555" stroke-width="0.45" />
<text transform="translate(4.9 316.52) rotate(-90)" font-size="4.6" fill="#222" font-family='"Liberation Sans","DejaVu Sans",sans-serif'>150</text>
<line x1="6.4" y1="309.6" x2="7.4" y2="309.6" stroke="#666" stroke-width="0.3" />
<line x1="6.4" y1="311.69" x2="7.4" y2="311.69" stroke="#666" stroke-width="0.3" />
<line x1="6.4" y1="313.77" x2="7.4" y2="313.77" stroke="#666" stroke-width="0.3" />
<line x1="6.4" y1="315.86" x2="7.4" y2="315.86" stroke="#666" stroke-width="0.3" />
<line x1="5.8" y1="317.94" x2="7.4" y2="317.94" stroke="#666" stroke-width="0.3" />
<line x1="6.4" y1="320.02" x2="7.4" y2="320.02" stroke="#666" stroke-width="0.3" />
<line x1="6.4" y1="322.11" x2="7.4" y2="322.11" stroke="#666" stroke-width="0.3" />
<line x1="6.4" y1="324.19" x2="7.4" y2="324.19" stroke="#666" stroke-width="0.3" />
<line x1="6.4" y1="326.28" x2="7.4" y2="326.28" stroke="#666" stroke-width="0.3" />
<line x1="0.5" y1="328.36" x2="7.4" y2="328.36" stroke="#555" stroke-width="0.45" />
<text transform="translate(4.9 337.36) rotate(-90)" font-size="4.6" fill="#222" font-family='"Liberation Sans","DejaVu Sans",sans-serif'>200</text>
<line x1="6.4" y1="330.44" x2="7.4" y2="330.44" stroke="#666" stroke-width="0.3" />
<line x1="6.4" y1="332.53" x2="7.4" y2="332.53" stroke="#666" stroke-width="0.3" />
<line x1="6.4" y1="334.61" x2="7.4" y2="334.61" stroke="#666" stroke-width="0.3" />
<line x1="6.4" y1="336.7" x2="7.4" y2="336.7" stroke="#666" stroke-width="0.3" />
<line x1="5.8" y1="338.78" x2="7.4" y2="338.78" stroke="#666" stroke-width="0.3" />
<line x1="6.4" y1="340.86" x2="7.4" y2="340.86" stroke="#666" stroke-width="0.3" />
<line x1="6.4" y1="342.95" x2="7.4" y2="342.95" stroke="#666" stroke-width="0.3" />
<line x1="6.4" y1="345.03" x2="7.4" y2="345.03" stroke="#666" stroke-width="0.3" />
<line x1="6.4" y1="347.12" x2="7.4" y2="347.12" stroke="#666" stroke-width="0.3" />
<line x1="0.5" y1="349.2" x2="7.4" y2="349.2" stroke="#555" stroke-width="0.45" />
<text transform="translate(4.9 358.2) rotate(-90)" font-size="4.6" fill="#222" font-family='"Liberation Sans","DejaVu Sans",sans-serif'>250</text>
<line x1="6.4" y1="351.28" x2="7.4" y2="351.28" stroke="#666" stroke-width="0.3" />
<line x1="6.4" y1="353.37" x2="7.4" y2="353.37" stroke="#666" stroke-width="0.3" />
<line x1="6.4" y1="355.45" x2="7.4" y2="355.45" stroke="#666" stroke-width="0.3" />
<line x1="6.4" y1="357.54" x2="7.4" y2="357.54" stroke="#666" stroke-width="0.3" />
<line x1="5.8" y1="359.62" x2="7.4" y2="359.62" stroke="#666" stroke-width="0.3" />
<line x1="6.4" y1="361.7" x2="7.4" y2="361.7" stroke="#666" stroke-width="0.3" />
<line x1="6.4" y1="363.79" x2="7.4" y2="363.79" stroke="#666" stroke-width="0.3" />
<line x1="6.4" y1="365.87" x2="7.4" y2="365.87" stroke="#666" stroke-width="0.3" />
<line x1="6.4" y1="367.96" x2="7.4" y2="367.96" stroke="#666" stroke-width="0.3" />
<line x1="0.5" y1="370.04" x2="7.4" y2="370.04" stroke="#555" stroke-width="0.45" />
<text transform="translate(4.9 379.04) rotate(-90)" font-size="4.6" fill="#222" font-family='"Liberation Sans","DejaVu Sans",sans-serif'>300</text>
<line x1="6.4" y1="372.12" x2="7.4" y2="372.12" stroke="#666" stroke-width="0.3" />
<line x1="6.4" y1="374.21" x2="7.4" y2="374.21" stroke="#666" stroke-width="0.3" />
<line x1="6.4" y1="376.29" x2="7.4" y2="376.29" stroke="#666" stroke-width="0.3" />
<line x1="6.4" y1="378.38" x2="7.4" y2="378.38" stroke="#666" stroke-width="0.3" />
<line x1="5.8" y1="380.46" x2="7.4" y2="380.46" stroke="#666" stroke-width="0.3" />
<line x1="6.4" y1="382.54" x2="7.4" y2="382.54" stroke="#666" stroke-width="0.3" />
<line x1="6.4" y1="384.63" x2="7.4" y2="384.63" stroke="#666" stroke-width="0.3" />
<line x1="6.4" y1="386.71" x2="7.4" y2="386.71" stroke="#666" stroke-width="0.3" />
<line x1="6.4" y1="388.8" x2="7.4" y2="388.8" stroke="#666" stroke-width="0.3" />
<line x1="0.5" y1="390.88" x2="7.4" y2="390.88" stroke="#555" stroke-width="0.45" />
<text transform="translate(4.9 399.88) rotate(-90)" font-size="4.6" fill="#222" font-family='"Liberation Sans","DejaVu Sans",sans-serif'>350</text>
<line x1="6.4" y1="392.96" x2="7.4" y2="392.96" stroke="#666" stroke-width="0.3" />
<line x1="6.4" y1="395.05" x2="7.4" y2="395.05" stroke="#666" stroke-width="0.3" />
<line x1="6.4" y1="397.13" x2="7.4" y2="397.13" stroke="#666" stroke-width="0.3" />
<line x1="6.4" y1="399.22" x2="7.4" y2="399.22" stroke="#666" stroke-width="0.3" />
<line x1="5.8" y1="401.3" x2="7.4" y2="401.3" stroke="#666" stroke-width="0.3" />
<line x1="6.4" y1="403.38" x2="7.4" y2="403.38" stroke="#666" stroke-width="0.3" />
<line x1="6.4" y1="405.47" x2="7.4" y2="405.47" stroke="#666" stroke-width="0.3" />
<line x1="6.4" y1="407.55" x2="7.4" y2="407.55" stroke="#666" stroke-width="0.3" />
<line x1="6.4" y1="409.64" x2="7.4" y2="409.64" stroke="#666" stroke-width="0.3" />
<line x1="0.5" y1="411.72" x2="7.4" y2="411.72" stroke="#555" stroke-width="0.45" />
<text transform="translate(4.9 420.72) rotate(-90)" font-size="4.6" fill="#222" font-family='"Liberation Sans","DejaVu Sans",sans-serif'>400</text>
<line x1="6.4" y1="413.8" x2="7.4" y2="413.8" stroke="#666" stroke-width="0.3" />
<line x1="6.4" y1="415.89" x2="7.4" y2="415.89" stroke="#666" stroke-width="0.3" />
<line x1="6.4" y1="417.97" x2="7.4" y2="417.97" stroke="#666" stroke-width="0.3" />
<line x1="6.4" y1="420.06" x2="7.4" y2="420.06" stroke="#666" stroke-width="0.3" />
<line x1="5.8" y1="422.14" x2="7.4" y2="422.14" stroke="#666" stroke-width="0.3" />
<line x1="6.4" y1="424.22" x2="7.4" y2="424.22" stroke="#666" stroke-width="0.3" />
<line x1="6.4" y1="426.31" x2="7.4" y2="426.31" stroke="#666" stroke-width="0.3" />
<line x1="6.4" y1="428.39" x2="7.4" y2="428.39" stroke="#666" stroke-width="0.3" />
<line x1="6.4" y1="430.48" x2="7.4" y2="430.48" stroke="#666" stroke-width="0.3" />
<line x1="0.5" y1="432.56" x2="7.4" y2="432.56" stroke="#555" stroke-width="0.45" />
<text transform="translate(4.9 441.56) rotate(-90)" font-size="4.6" fill="#222" font-family='"Liberation Sans","DejaVu Sans",sans-serif'>450</text>
<line x1="6.4" y1="434.64" x2="7.4" y2="434.64" stroke="#666" stroke-width="0.3" />
<line x1="6.4" y1="436.73" x2="7.4" y2="436.73" stroke="#666" stroke-width="0.3" />
<line x1="6.4" y1="438.81" x2="7.4" y2="438.81" stroke="#666" stroke-width="0.3" />
<line x1="6.4" y1="440.9" x2="7.4" y2="440.9" stroke="#666" stroke-width="0.3" />
<rect x="0" y="42.3" width="7.4" height="7.9" fill="#dcdcdc" />
<line x1="0" y1="50.1" x2="7.4" y2="50.1" stroke="#a8a8a8" stroke-width="0.4" />
<line x1="7.4" y1="42.5" x2="7.4" y2="50.2" stroke="#9a9a9a" stroke-width="0.4" />
<rect x="7.6" y="50.3" width="334.4" height="391.2" fill="#ffffff" />
<rect x="177.8" y="194.4" width="163.7" height="235.9" fill="#d3cf72" />
<rect x="177.8" y="430.6" width="120.7" height="10.9" fill="#333333" />
<rect x="298.5" y="430.6" width="43" height="10.9" fill="#000000" />
<text x="327.4" y="438.6" font-size="5.6" fill="#e01818" font-family='"Liberation Mono","DejaVu Sans Mono",monospace' font-weight="bold" textLength="13.4" lengthAdjust="spacingAndGlyphs" >ME</text>
<line x1="298.6" y1="430.6" x2="298.6" y2="441.5" stroke="#2a6fb0" stroke-width="0.4" />
<text x="317.3" y="214.5" font-size="15.6" fill="#f6f3e4" font-family='"Liberation Mono","DejaVu Sans Mono",monospace' textLength="26.6" lengthAdjust="spacingAndGlyphs" >Mús</text>
<rect x="231.4" y="262" width="53.9" height="25.1" fill="#050505" />
<g clip-path="url(#cA)" filter="url(#b1)"><path d="M255.6 268 q1.2 4 0.2 8 q-0.8 5 0.6 11 h5 q-1.2-6 0.4-11 q1-4 -0.6-8z" fill="#bdbdbd"/><rect x="272.4" y="277.3" width="11" height="1.5" fill="#d8d8d8"/><rect x="273" y="272.4" width="6" height="1" fill="#8a8a8a"/><circle cx="251" cy="277.4" r="1" fill="#e0e0e0"/><rect x="238" y="275" width="3" height="0.9" fill="#777"/><rect x="246" y="281" width="2" height="0.8" fill="#666"/></g>
<rect x="230.7" y="294.8" width="55" height="40.5" fill="#d0296f" />
<g filter="url(#b0)"><path d="M243.3 320.400 V308.200 q0-5.400 6-5.400 H273 V326.700 H249.600 V320.400z" fill="#3d9a7c"/><path d="M246.800 322.600 q-1.200-8.400 0.600-13.400 q2.400-5.800 8.600-5.800 q7 0 9.200 5.800 q1.600 5 0.400 10.200 l-2.800 3.200 h-2.600 v4.200 h-9.600 v-4.200z" fill="#d0296f"/><path d="M250.200 309.400 q0.400-2.400 3.200-2.400 h2.800 q2.600 0 2.800 2.600 v5.800 q-0.400 3-3 3.600 v1.800 l2.800 1 v5 h-9.600 v-4.800 l2.600-1.200 v-2 q-1.800-0.800-1.800-3.400z" fill="#3d9a7c"/><ellipse cx="255.800" cy="305.300" rx="2.800" ry="0.900" fill="none" stroke="#3d9a7c" stroke-width="0.600"/><path d="M251.400 310.600h2.200M255.400 310.600h2.400M254.400 311.600l-0.800 3h1.600M252 321.600l5.600 4.600M257.600 321.600l-5.600 4.600M251.600 318.600l1.400 1" stroke="#d0296f" stroke-width="0.550" fill="none"/><ellipse cx="256.200" cy="316.400" rx="1.300" ry="0.800" fill="#d0296f"/><path d="M262.800 320.200l-2 6.200" stroke="#d0296f" stroke-width="0.800"/><path d="M244.600 321.400l-0.600 4" stroke="#3d9a7c" stroke-width="0.600"/></g>
<text x="258.2" y="330.9" font-size="2.6" fill="#3d9a7c" font-family='"Liberation Sans","DejaVu Sans",sans-serif' font-weight="bold" textLength="7.4" lengthAdjust="spacingAndGlyphs" text-anchor="middle" >FULL</text>
<text x="258.2" y="334.1" font-size="2.6" fill="#3d9a7c" font-family='"Liberation Sans","DejaVu Sans",sans-serif' font-weight="bold" textLength="11.6" lengthAdjust="spacingAndGlyphs" text-anchor="middle" >OF FIRE</text>
<g fill="#3d9a7c" fill-opacity="0.800"><rect x="233.2" y="309.4" width="3.200" height="1.200"/><rect x="233.2" y="311.400" width="3.200" height="2.600"/><rect x="233.2" y="314.800" width="3.200" height="2.400"/><rect x="233.2" y="318" width="3.200" height="2.200"/><rect x="238.400" y="313.400" width="1.200" height="3.600"/><rect x="280.200" y="309.400" width="3.200" height="1.200"/><rect x="280.200" y="311.400" width="3.200" height="2.600"/><rect x="280.200" y="314.800" width="3.200" height="2.400"/><rect x="280.200" y="318" width="3.200" height="2.200"/><rect x="276.200" y="313.400" width="1.200" height="3.600"/></g>
<rect x="230.7" y="294.8" width="55" height="40.5" fill="none" stroke="#6a92dc" stroke-width="0.5"/>
<rect x="231" y="342.8" width="42.9" height="41" fill="#07060c" />
<g clip-path="url(#cB)"><g filter="url(#b2)"><path d="M229 364 q4-18 22-16 q10 2 8 30 l-8 4 q2-22-6-24 q-8-1-16 6z" fill="#c20f1e"/><path d="M229 356 q10-8 20-6 l2 8 l-22 6z" fill="#b00d1a"/><path d="M266 362 q6-2 10 6 v16 h-8z" fill="#8a0a16"/></g><g filter="url(#b1)"><path d="M231 384 v-22 q1-4.6 5.6-6 l3-0.8 l4.4 0.6 q4.6 1.8 5 7 l1.4 21.2z" fill="#0a0a16"/><path d="M250.8 384 l1-25 q1-5 5-6.2 l2.8-0.8 l4.2 0.8 q5.6 1.8 6.4 7.4 l1.4 23.8z" fill="#090914"/><ellipse cx="240.2" cy="350.2" rx="2.9" ry="3.1" fill="#d8c494"/><path d="M239.6 350.6 l3.2-0.6 l3.4 4 l-1.2 0.8 l-5.2-2.4z" fill="#24242e"/><ellipse cx="257.8" cy="346.4" rx="2.8" ry="3.2" fill="#c8c0ae"/><path d="M258.4 346.8 l-3.2 0.2 l-2.6 3.8 l1 0.8 l4.8-2.6z" fill="#30303a"/><path d="M237.6 355.6h4v-2h-4z M255.8 352.4h3.6v-2.4h-3.6z" fill="#5a4038"/></g></g>
<rect x="274.7" y="342.8" width="40" height="41" fill="#3e4a76" />
<g clip-path="url(#cC)"><g filter="url(#b3)"><ellipse cx="282" cy="362" rx="8" ry="11" fill="#8792bc"/><ellipse cx="310" cy="360" rx="7" ry="10" fill="#a3afd4"/><ellipse cx="295" cy="346" rx="14" ry="4" fill="#56628e"/><ellipse cx="295" cy="380" rx="22" ry="5" fill="#5c688e"/></g><g filter="url(#b1)"><circle cx="311.4" cy="359.6" r="1.5" fill="#f0f4ff"/><circle cx="280.6" cy="352" r="0.7" fill="#dfe6ff"/><path d="M274.7 384 v-4.4 q6-1.8 10.4-4.4 q2.4-1.6 2-5 q-2.4-5.6-1.4-11.6 q1-7.4 5-11.4 q2.6-3.4 6-4 q3.6 0.4 5.4 4.6 q3 5.4 2.2 12 q-0.8 6.6-1.4 9.800 q-0.4 4 0.800 5.4 q3 2.8 11 5.4 v4.600z" fill="#0e111c"/><path d="M286 359 q0.400-8.600 5.400-13.400" stroke="#e8ecff" stroke-width="0.7" fill="none"/><path d="M304.400 356 q0.600 6-1 11" stroke="#c8d0f0" stroke-width="0.6" fill="none"/><path d="M276 380.400 l8-3.200 M305.400 377 l8 3" stroke="#a4b0d4" stroke-width="0.8" fill="none"/></g></g>
<line x1="274.3" y1="342.8" x2="274.3" y2="383.8" stroke="#c8c8c8" stroke-width="0.5" />
<line x1="177.6" y1="50.3" x2="177.6" y2="441.5" stroke="#58e8e8" stroke-width="0.55" />
<line x1="314.5" y1="50.3" x2="314.5" y2="441.5" stroke="#58e8e8" stroke-width="0.55" />
<line x1="326.2" y1="50.3" x2="326.2" y2="441.5" stroke="#58e8e8" stroke-width="0.55" />
<line x1="7.2" y1="194.2" x2="341.5" y2="194.2" stroke="#58e8e8" stroke-width="0.55" />
<line x1="7.2" y1="245.4" x2="341.5" y2="245.4" stroke="#58e8e8" stroke-width="0.55" />
<line x1="7.2" y1="287.5" x2="341.5" y2="287.5" stroke="#58e8e8" stroke-width="0.55" />
<line x1="7.2" y1="294.6" x2="341.5" y2="294.6" stroke="#58e8e8" stroke-width="0.55" />
<line x1="7.2" y1="336.3" x2="341.5" y2="336.3" stroke="#58e8e8" stroke-width="0.55" />
<line x1="7.2" y1="430.4" x2="341.5" y2="430.4" stroke="#58e8e8" stroke-width="0.55" />
<path d="M306.400 245.400h3.400M308.100 243.700v3.400" stroke="#6a7a8a" stroke-width="0.600"/>
<circle cx="230.5" cy="293.8" r="1.8" fill="#fff" stroke="#222" stroke-width="0.55"/><circle cx="230.5" cy="293.8" r="0.5" fill="#444"/>
<rect x="7.2" y="441.4" width="334.8" height="6" fill="#f4f4f4" />
<line x1="7.2" y1="441.5" x2="342" y2="441.5" stroke="#c4c4c4" stroke-width="0.4" />
<rect x="10.4" y="441.9" width="336" height="5.4" rx="2.7" fill="url(#g8)"/>
<line x1="13" y1="442.8" x2="13" y2="446.9" stroke="#e4f0ff" stroke-width="0.9" stroke-opacity="0.28"/>
<line x1="15.5" y1="442.8" x2="15.5" y2="446.9" stroke="#e4f0ff" stroke-width="0.9" stroke-opacity="0.28"/>
<line x1="18" y1="442.8" x2="18" y2="446.9" stroke="#e4f0ff" stroke-width="0.9" stroke-opacity="0.28"/>
<line x1="20.5" y1="442.8" x2="20.5" y2="446.9" stroke="#e4f0ff" stroke-width="0.9" stroke-opacity="0.28"/>
<line x1="23" y1="442.8" x2="23" y2="446.9" stroke="#e4f0ff" stroke-width="0.9" stroke-opacity="0.28"/>
<line x1="25.5" y1="442.8" x2="25.5" y2="446.9" stroke="#e4f0ff" stroke-width="0.9" stroke-opacity="0.28"/>
<line x1="28" y1="442.8" x2="28" y2="446.9" stroke="#e4f0ff" stroke-width="0.9" stroke-opacity="0.28"/>
<line x1="30.5" y1="442.8" x2="30.5" y2="446.9" stroke="#e4f0ff" stroke-width="0.9" stroke-opacity="0.28"/>
<line x1="33" y1="442.8" x2="33" y2="446.9" stroke="#e4f0ff" stroke-width="0.9" stroke-opacity="0.28"/>
<line x1="35.5" y1="442.8" x2="35.5" y2="446.9" stroke="#e4f0ff" stroke-width="0.9" stroke-opacity="0.28"/>
<line x1="38" y1="442.8" x2="38" y2="446.9" stroke="#e4f0ff" stroke-width="0.9" stroke-opacity="0.28"/>
<line x1="40.5" y1="442.8" x2="40.5" y2="446.9" stroke="#e4f0ff" stroke-width="0.9" stroke-opacity="0.28"/>
<line x1="43" y1="442.8" x2="43" y2="446.9" stroke="#e4f0ff" stroke-width="0.9" stroke-opacity="0.28"/>
<line x1="45.5" y1="442.8" x2="45.5" y2="446.9" stroke="#e4f0ff" stroke-width="0.9" stroke-opacity="0.28"/>
<line x1="48" y1="442.8" x2="48" y2="446.9" stroke="#e4f0ff" stroke-width="0.9" stroke-opacity="0.28"/>
<line x1="50.5" y1="442.8" x2="50.5" y2="446.9" stroke="#e4f0ff" stroke-width="0.9" stroke-opacity="0.28"/>
<line x1="53" y1="442.8" x2="53" y2="446.9" stroke="#e4f0ff" stroke-width="0.9" stroke-opacity="0.28"/>
<line x1="55.5" y1="442.8" x2="55.5" y2="446.9" stroke="#e4f0ff" stroke-width="0.9" stroke-opacity="0.28"/>
<line x1="58" y1="442.8" x2="58" y2="446.9" stroke="#e4f0ff" stroke-width="0.9" stroke-opacity="0.28"/>
<line x1="60.5" y1="442.8" x2="60.5" y2="446.9" stroke="#e4f0ff" stroke-width="0.9" stroke-opacity="0.28"/>
<line x1="63" y1="442.8" x2="63" y2="446.9" stroke="#e4f0ff" stroke-width="0.9" stroke-opacity="0.28"/>
<line x1="65.5" y1="442.8" x2="65.5" y2="446.9" stroke="#e4f0ff" stroke-width="0.9" stroke-opacity="0.28"/>
<line x1="68" y1="442.8" x2="68" y2="446.9" stroke="#e4f0ff" stroke-width="0.9" stroke-opacity="0.28"/>
<line x1="70.5" y1="442.8" x2="70.5" y2="446.9" stroke="#e4f0ff" stroke-width="0.9" stroke-opacity="0.28"/>
<line x1="73" y1="442.8" x2="73" y2="446.9" stroke="#e4f0ff" stroke-width="0.9" stroke-opacity="0.28"/>
<line x1="75.5" y1="442.8" x2="75.5" y2="446.9" stroke="#e4f0ff" stroke-width="0.9" stroke-opacity="0.28"/>
<line x1="78" y1="442.8" x2="78" y2="446.9" stroke="#e4f0ff" stroke-width="0.9" stroke-opacity="0.28"/>
<line x1="80.5" y1="442.8" x2="80.5" y2="446.9" stroke="#e4f0ff" stroke-width="0.9" stroke-opacity="0.28"/>
<line x1="83" y1="442.8" x2="83" y2="446.9" stroke="#e4f0ff" stroke-width="0.9" stroke-opacity="0.28"/>
<line x1="85.5" y1="442.8" x2="85.5" y2="446.9" stroke="#e4f0ff" stroke-width="0.9" stroke-opacity="0.28"/>
<line x1="88" y1="442.8" x2="88" y2="446.9" stroke="#e4f0ff" stroke-width="0.9" stroke-opacity="0.28"/>
<line x1="90.5" y1="442.8" x2="90.5" y2="446.9" stroke="#e4f0ff" stroke-width="0.9" stroke-opacity="0.28"/>
<line x1="93" y1="442.8" x2="93" y2="446.9" stroke="#e4f0ff" stroke-width="0.9" stroke-opacity="0.28"/>
<line x1="95.5" y1="442.8" x2="95.5" y2="446.9" stroke="#e4f0ff" stroke-width="0.9" stroke-opacity="0.28"/>
<line x1="98" y1="442.8" x2="98" y2="446.9" stroke="#e4f0ff" stroke-width="0.9" stroke-opacity="0.28"/>
<line x1="100.5" y1="442.8" x2="100.5" y2="446.9" stroke="#e4f0ff" stroke-width="0.9" stroke-opacity="0.28"/>
<line x1="103" y1="442.8" x2="103" y2="446.9" stroke="#e4f0ff" stroke-width="0.9" stroke-opacity="0.28"/>
<line x1="105.5" y1="442.8" x2="105.5" y2="446.9" stroke="#e4f0ff" stroke-width="0.9" stroke-opacity="0.28"/>
<line x1="108" y1="442.8" x2="108" y2="446.9" stroke="#e4f0ff" stroke-width="0.9" stroke-opacity="0.28"/>
<line x1="110.5" y1="442.8" x2="110.5" y2="446.9" stroke="#e4f0ff" stroke-width="0.9" stroke-opacity="0.28"/>
<line x1="113" y1="442.8" x2="113" y2="446.9" stroke="#e4f0ff" stroke-width="0.9" stroke-opacity="0.28"/>
<line x1="115.5" y1="442.8" x2="115.5" y2="446.9" stroke="#e4f0ff" stroke-width="0.9" stroke-opacity="0.28"/>
<line x1="118" y1="442.8" x2="118" y2="446.9" stroke="#e4f0ff" stroke-width="0.9" stroke-opacity="0.28"/>
<line x1="120.5" y1="442.8" x2="120.5" y2="446.9" stroke="#e4f0ff" stroke-width="0.9" stroke-opacity="0.28"/>
<line x1="123" y1="442.8" x2="123" y2="446.9" stroke="#e4f0ff" stroke-width="0.9" stroke-opacity="0.28"/>
<line x1="125.5" y1="442.8" x2="125.5" y2="446.9" stroke="#e4f0ff" stroke-width="0.9" stroke-opacity="0.28"/>
<line x1="128" y1="442.8" x2="128" y2="446.9" stroke="#e4f0ff" stroke-width="0.9" stroke-opacity="0.28"/>
<line x1="130.5" y1="442.8" x2="130.5" y2="446.9" stroke="#e4f0ff" stroke-width="0.9" stroke-opacity="0.28"/>
<line x1="133" y1="442.8" x2="133" y2="446.9" stroke="#e4f0ff" stroke-width="0.9" stroke-opacity="0.28"/>
<line x1="135.5" y1="442.8" x2="135.5" y2="446.9" stroke="#e4f0ff" stroke-width="0.9" stroke-opacity="0.28"/>
<line x1="138" y1="442.8" x2="138" y2="446.9" stroke="#e4f0ff" stroke-width="0.9" stroke-opacity="0.28"/>
<line x1="140.5" y1="442.8" x2="140.5" y2="446.9" stroke="#e4f0ff" stroke-width="0.9" stroke-opacity="0.28"/>
<line x1="143" y1="442.8" x2="143" y2="446.9" stroke="#e4f0ff" stroke-width="0.9" stroke-opacity="0.28"/>
<line x1="145.5" y1="442.8" x2="145.5" y2="446.9" stroke="#e4f0ff" stroke-width="0.9" stroke-opacity="0.28"/>
<line x1="148" y1="442.8" x2="148" y2="446.9" stroke="#e4f0ff" stroke-width="0.9" stroke-opacity="0.28"/>
<line x1="150.5" y1="442.8" x2="150.5" y2="446.9" stroke="#e4f0ff" stroke-width="0.9" stroke-opacity="0.28"/>
<line x1="153" y1="442.8" x2="153" y2="446.9" stroke="#e4f0ff" stroke-width="0.9" stroke-opacity="0.28"/>
<line x1="155.5" y1="442.8" x2="155.5" y2="446.9" stroke="#e4f0ff" stroke-width="0.9" stroke-opacity="0.28"/>
<line x1="158" y1="442.8" x2="158" y2="446.9" stroke="#e4f0ff" stroke-width="0.9" stroke-opacity="0.28"/>
<line x1="160.5" y1="442.8" x2="160.5" y2="446.9" stroke="#e4f0ff" stroke-width="0.9" stroke-opacity="0.28"/>
<line x1="163" y1="442.8" x2="163" y2="446.9" stroke="#e4f0ff" stroke-width="0.9" stroke-opacity="0.28"/>
<line x1="165.5" y1="442.8" x2="165.5" y2="446.9" stroke="#e4f0ff" stroke-width="0.9" stroke-opacity="0.28"/>
<line x1="168" y1="442.8" x2="168" y2="446.9" stroke="#e4f0ff" stroke-width="0.9" stroke-opacity="0.28"/>
<line x1="170.5" y1="442.8" x2="170.5" y2="446.9" stroke="#e4f0ff" stroke-width="0.9" stroke-opacity="0.28"/>
<line x1="173" y1="442.8" x2="173" y2="446.9" stroke="#e4f0ff" stroke-width="0.9" stroke-opacity="0.28"/>
<line x1="175.5" y1="442.8" x2="175.5" y2="446.9" stroke="#e4f0ff" stroke-width="0.9" stroke-opacity="0.28"/>
<line x1="178" y1="442.8" x2="178" y2="446.9" stroke="#e4f0ff" stroke-width="0.9" stroke-opacity="0.28"/>
<line x1="180.5" y1="442.8" x2="180.5" y2="446.9" stroke="#e4f0ff" stroke-width="0.9" stroke-opacity="0.28"/>
<line x1="183" y1="442.8" x2="183" y2="446.9" stroke="#e4f0ff" stroke-width="0.9" stroke-opacity="0.28"/>
<line x1="185.5" y1="442.8" x2="185.5" y2="446.9" stroke="#e4f0ff" stroke-width="0.9" stroke-opacity="0.28"/>
<line x1="188" y1="442.8" x2="188" y2="446.9" stroke="#e4f0ff" stroke-width="0.9" stroke-opacity="0.28"/>
<line x1="190.5" y1="442.8" x2="190.5" y2="446.9" stroke="#e4f0ff" stroke-width="0.9" stroke-opacity="0.28"/>
<line x1="193" y1="442.8" x2="193" y2="446.9" stroke="#e4f0ff" stroke-width="0.9" stroke-opacity="0.28"/>
<line x1="195.5" y1="442.8" x2="195.5" y2="446.9" stroke="#e4f0ff" stroke-width="0.9" stroke-opacity="0.28"/>
<line x1="198" y1="442.8" x2="198" y2="446.9" stroke="#e4f0ff" stroke-width="0.9" stroke-opacity="0.28"/>
<line x1="200.5" y1="442.8" x2="200.5" y2="446.9" stroke="#e4f0ff" stroke-width="0.9" stroke-opacity="0.28"/>
<line x1="203" y1="442.8" x2="203" y2="446.9" stroke="#e4f0ff" stroke-width="0.9" stroke-opacity="0.28"/>
<line x1="205.5" y1="442.8" x2="205.5" y2="446.9" stroke="#e4f0ff" stroke-width="0.9" stroke-opacity="0.28"/>
<line x1="208" y1="442.8" x2="208" y2="446.9" stroke="#e4f0ff" stroke-width="0.9" stroke-opacity="0.28"/>
<line x1="210.5" y1="442.8" x2="210.5" y2="446.9" stroke="#e4f0ff" stroke-width="0.9" stroke-opacity="0.28"/>
<line x1="213" y1="442.8" x2="213" y2="446.9" stroke="#e4f0ff" stroke-width="0.9" stroke-opacity="0.28"/>
<line x1="215.5" y1="442.8" x2="215.5" y2="446.9" stroke="#e4f0ff" stroke-width="0.9" stroke-opacity="0.28"/>
<line x1="218" y1="442.8" x2="218" y2="446.9" stroke="#e4f0ff" stroke-width="0.9" stroke-opacity="0.28"/>
<line x1="220.5" y1="442.8" x2="220.5" y2="446.9" stroke="#e4f0ff" stroke-width="0.9" stroke-opacity="0.28"/>
<line x1="223" y1="442.8" x2="223" y2="446.9" stroke="#e4f0ff" stroke-width="0.9" stroke-opacity="0.28"/>
<line x1="225.5" y1="442.8" x2="225.5" y2="446.9" stroke="#e4f0ff" stroke-width="0.9" stroke-opacity="0.28"/>
<line x1="228" y1="442.8" x2="228" y2="446.9" stroke="#e4f0ff" stroke-width="0.9" stroke-opacity="0.28"/>
<line x1="230.5" y1="442.8" x2="230.5" y2="446.9" stroke="#e4f0ff" stroke-width="0.9" stroke-opacity="0.28"/>
<line x1="233" y1="442.8" x2="233" y2="446.9" stroke="#e4f0ff" stroke-width="0.9" stroke-opacity="0.28"/>
<line x1="235.5" y1="442.8" x2="235.5" y2="446.9" stroke="#e4f0ff" stroke-width="0.9" stroke-opacity="0.28"/>
<line x1="238" y1="442.8" x2="238" y2="446.9" stroke="#e4f0ff" stroke-width="0.9" stroke-opacity="0.28"/>
<line x1="240.5" y1="442.8" x2="240.5" y2="446.9" stroke="#e4f0ff" stroke-width="0.9" stroke-opacity="0.28"/>
<line x1="243" y1="442.8" x2="243" y2="446.9" stroke="#e4f0ff" stroke-width="0.9" stroke-opacity="0.28"/>
<line x1="245.5" y1="442.8" x2="245.5" y2="446.9" stroke="#e4f0ff" stroke-width="0.9" stroke-opacity="0.28"/>
<line x1="248" y1="442.8" x2="248" y2="446.9" stroke="#e4f0ff" stroke-width="0.9" stroke-opacity="0.28"/>
<line x1="250.5" y1="442.8" x2="250.5" y2="446.9" stroke="#e4f0ff" stroke-width="0.9" stroke-opacity="0.28"/>
<line x1="253" y1="442.8" x2="253" y2="446.9" stroke="#e4f0ff" stroke-width="0.9" stroke-opacity="0.28"/>
<line x1="255.5" y1="442.8" x2="255.5" y2="446.9" stroke="#e4f0ff" stroke-width="0.9" stroke-opacity="0.28"/>
<line x1="258" y1="442.8" x2="258" y2="446.9" stroke="#e4f0ff" stroke-width="0.9" stroke-opacity="0.28"/>
<line x1="260.5" y1="442.8" x2="260.5" y2="446.9" stroke="#e4f0ff" stroke-width="0.9" stroke-opacity="0.28"/>
<line x1="263" y1="442.8" x2="263" y2="446.9" stroke="#e4f0ff" stroke-width="0.9" stroke-opacity="0.28"/>
<line x1="265.5" y1="442.8" x2="265.5" y2="446.9" stroke="#e4f0ff" stroke-width="0.9" stroke-opacity="0.28"/>
<line x1="268" y1="442.8" x2="268" y2="446.9" stroke="#e4f0ff" stroke-width="0.9" stroke-opacity="0.28"/>
<line x1="270.5" y1="442.8" x2="270.5" y2="446.9" stroke="#e4f0ff" stroke-width="0.9" stroke-opacity="0.28"/>
<line x1="273" y1="442.8" x2="273" y2="446.9" stroke="#e4f0ff" stroke-width="0.9" stroke-opacity="0.28"/>
<line x1="275.5" y1="442.8" x2="275.5" y2="446.9" stroke="#e4f0ff" stroke-width="0.9" stroke-opacity="0.28"/>
<line x1="278" y1="442.8" x2="278" y2="446.9" stroke="#e4f0ff" stroke-width="0.9" stroke-opacity="0.28"/>
<line x1="280.5" y1="442.8" x2="280.5" y2="446.9" stroke="#e4f0ff" stroke-width="0.9" stroke-opacity="0.28"/>
<line x1="283" y1="442.8" x2="283" y2="446.9" stroke="#e4f0ff" stroke-width="0.9" stroke-opacity="0.28"/>
<line x1="285.5" y1="442.8" x2="285.5" y2="446.9" stroke="#e4f0ff" stroke-width="0.9" stroke-opacity="0.28"/>
<line x1="288" y1="442.8" x2="288" y2="446.9" stroke="#e4f0ff" stroke-width="0.9" stroke-opacity="0.28"/>
<line x1="290.5" y1="442.8" x2="290.5" y2="446.9" stroke="#e4f0ff" stroke-width="0.9" stroke-opacity="0.28"/>
<line x1="293" y1="442.8" x2="293" y2="446.9" stroke="#e4f0ff" stroke-width="0.9" stroke-opacity="0.28"/>
<line x1="295.5" y1="442.8" x2="295.5" y2="446.9" stroke="#e4f0ff" stroke-width="0.9" stroke-opacity="0.28"/>
<line x1="298" y1="442.8" x2="298" y2="446.9" stroke="#e4f0ff" stroke-width="0.9" stroke-opacity="0.28"/>
<line x1="300.5" y1="442.8" x2="300.5" y2="446.9" stroke="#e4f0ff" stroke-width="0.9" stroke-opacity="0.28"/>
<line x1="303" y1="442.8" x2="303" y2="446.9" stroke="#e4f0ff" stroke-width="0.9" stroke-opacity="0.28"/>
<line x1="305.5" y1="442.8" x2="305.5" y2="446.9" stroke="#e4f0ff" stroke-width="0.9" stroke-opacity="0.28"/>
<line x1="308" y1="442.8" x2="308" y2="446.9" stroke="#e4f0ff" stroke-width="0.9" stroke-opacity="0.28"/>
<line x1="310.5" y1="442.8" x2="310.5" y2="446.9" stroke="#e4f0ff" stroke-width="0.9" stroke-opacity="0.28"/>
<line x1="313" y1="442.8" x2="313" y2="446.9" stroke="#e4f0ff" stroke-width="0.9" stroke-opacity="0.28"/>
<line x1="315.5" y1="442.8" x2="315.5" y2="446.9" stroke="#e4f0ff" stroke-width="0.9" stroke-opacity="0.28"/>
<line x1="318" y1="442.8" x2="318" y2="446.9" stroke="#e4f0ff" stroke-width="0.9" stroke-opacity="0.28"/>
<line x1="320.5" y1="442.8" x2="320.5" y2="446.9" stroke="#e4f0ff" stroke-width="0.9" stroke-opacity="0.28"/>
<line x1="323" y1="442.8" x2="323" y2="446.9" stroke="#e4f0ff" stroke-width="0.9" stroke-opacity="0.28"/>
<line x1="325.5" y1="442.8" x2="325.5" y2="446.9" stroke="#e4f0ff" stroke-width="0.9" stroke-opacity="0.28"/>
<line x1="328" y1="442.8" x2="328" y2="446.9" stroke="#e4f0ff" stroke-width="0.9" stroke-opacity="0.28"/>
<line x1="330.5" y1="442.8" x2="330.5" y2="446.9" stroke="#e4f0ff" stroke-width="0.9" stroke-opacity="0.28"/>
<line x1="333" y1="442.8" x2="333" y2="446.9" stroke="#e4f0ff" stroke-width="0.9" stroke-opacity="0.28"/>
<line x1="335.5" y1="442.8" x2="335.5" y2="446.9" stroke="#e4f0ff" stroke-width="0.9" stroke-opacity="0.28"/>
<line x1="338" y1="442.8" x2="338" y2="446.9" stroke="#e4f0ff" stroke-width="0.9" stroke-opacity="0.28"/>
<line x1="340.5" y1="442.8" x2="340.5" y2="446.9" stroke="#e4f0ff" stroke-width="0.9" stroke-opacity="0.28"/>
<rect x="0" y="441.4" width="7.2" height="6" fill="#e2e2e2" />
<rect x="0" y="447.4" width="342" height="2.6" fill="#0a0505" />
<rect x="40" y="447.8" width="3" height="0.8" fill="#5a1410" />
<rect x="52" y="447.8" width="3" height="0.8" fill="#5a1410" />
<rect x="60" y="447.8" width="3" height="0.8" fill="#5a1410" />
<rect x="75" y="447.8" width="3" height="0.8" fill="#5a1410" />
<rect x="90" y="447.8" width="3" height="0.8" fill="#5a1410" />
<rect x="110" y="447.8" width="3" height="0.8" fill="#5a1410" />
<rect x="128" y="447.8" width="3" height="0.8" fill="#5a1410" />
<rect x="140" y="447.8" width="3" height="0.8" fill="#5a1410" />
<rect x="152" y="447.8" width="3" height="0.8" fill="#5a1410" />
<rect x="76.6" y="150.8" width="216" height="118.6" rx="1.5" fill="#000" fill-opacity="0.18"/>
<path d="M77.2 156 v-4.2 q0-1.6 1.6-1.6 h211.4 q1.6 0 1.6 1.6 v4.2z" fill="url(#g9)"/>
<circle cx="79.6" cy="152.6" r="0.8" fill="#c8c8c8"/>
<path d="M288.6 151.8l1 0.8l-1 0.8zM289.9 151.8l1 0.8l-1 0.8z" fill="#d0d0d0"/>
<rect x="77.2" y="155" width="214.6" height="7.3" fill="url(#g10)" />
<rect x="77.4" y="155.3" width="23.2" height="7.1" fill="url(#g11)" />
<text x="89" y="160.3" font-size="3.5" fill="#222" font-family='"Liberation Sans","DejaVu Sans",sans-serif' font-weight="bold" textLength="17.4" lengthAdjust="spacingAndGlyphs" text-anchor="middle" >TIMELINE</text>
<rect x="100.9" y="155.6" width="21.3" height="6.6" fill="url(#g12)" />
<line x1="100.9" y1="155.6" x2="100.9" y2="162.2" stroke="#6a6a6a" stroke-width="0.4" />
<text x="111.55" y="160.3" font-size="3.5" fill="#2c2c2c" font-family='"Liberation Sans","DejaVu Sans",sans-serif' font-weight="bold" textLength="15.2" lengthAdjust="spacingAndGlyphs" text-anchor="middle" >OUTPUT</text>
<rect x="122.5" y="155.6" width="41.1" height="6.6" fill="url(#g13)" />
<line x1="122.5" y1="155.6" x2="122.5" y2="162.2" stroke="#6a6a6a" stroke-width="0.4" />
<text x="143.05" y="160.3" font-size="3.5" fill="#2c2c2c" font-family='"Liberation Sans","DejaVu Sans",sans-serif' font-weight="bold" textLength="35.6" lengthAdjust="spacingAndGlyphs" text-anchor="middle" >COMPILER ERRORS</text>
<rect x="163.9" y="155.6" width="38.8" height="6.6" fill="url(#g14)" />
<line x1="163.9" y1="155.6" x2="163.9" y2="162.2" stroke="#6a6a6a" stroke-width="0.4" />
<text x="183.3" y="160.3" font-size="3.5" fill="#2c2c2c" font-family='"Liberation Sans","DejaVu Sans",sans-serif' font-weight="bold" textLength="32" lengthAdjust="spacingAndGlyphs" text-anchor="middle" >MOTION EDITOR</text>
<line x1="202.7" y1="155.6" x2="202.7" y2="162.2" stroke="#6a6a6a" stroke-width="0.4" />
<path d="M285.6 158.2h1.6l-0.8 1.2z" fill="#222"/><path d="M288 157.6h2.4M288 158.8h2.4M288 160h2.4" stroke="#333" stroke-width="0.5"/>
<rect x="77.2" y="162.3" width="214.6" height="10.4" fill="url(#g15)" />
<rect x="77.2" y="172.7" width="214.6" height="86.7" fill="#e4e4e4" />
<path d="M130.6 166.6 q2.2-2.2 4.4 0 q-0.6 1.6-1.6 1.6 l-0.6 1 l-0.6-1 q-1 0-1.6-1.6z" fill="#222"/>
<rect x="138.9" y="166.8" width="3.4" height="2.6" rx="0.4" fill="#222"/><path d="M139.6 166.9 v-0.9 q1-1.4 2 0 v0.9" stroke="#222" stroke-width="0.6" fill="none"/>
<rect x="146.8" y="165" width="4" height="4.4" fill="#fff" stroke="#111" stroke-width="0.9"/>
<text x="155.47" y="169.5" font-size="5" fill="#1a1a1a" font-family='"Liberation Sans","DejaVu Sans",sans-serif' text-anchor="middle" >1</text>
<text x="168.8" y="169.5" font-size="5" fill="#1a1a1a" font-family='"Liberation Sans","DejaVu Sans",sans-serif' text-anchor="middle" >5</text>
<text x="185.46" y="169.5" font-size="5" fill="#1a1a1a" font-family='"Liberation Sans","DejaVu Sans",sans-serif' text-anchor="middle" >10</text>
<text x="202.13" y="169.5" font-size="5" fill="#1a1a1a" font-family='"Liberation Sans","DejaVu Sans",sans-serif' text-anchor="middle" >15</text>
<text x="218.79" y="169.5" font-size="5" fill="#1a1a1a" font-family='"Liberation Sans","DejaVu Sans",sans-serif' text-anchor="middle" >20</text>
<text x="235.46" y="169.5" font-size="5" fill="#1a1a1a" font-family='"Liberation Sans","DejaVu Sans",sans-serif' text-anchor="middle" >25</text>
<text x="252.12" y="169.5" font-size="5" fill="#1a1a1a" font-family='"Liberation Sans","DejaVu Sans",sans-serif' text-anchor="middle" >30</text>
<text x="268.79" y="169.5" font-size="5" fill="#1a1a1a" font-family='"Liberation Sans","DejaVu Sans",sans-serif' text-anchor="middle" >35</text>
<line x1="153.3" y1="171.4" x2="153.3" y2="172.7" stroke="#777" stroke-width="0.3" />
<line x1="156.63" y1="171.4" x2="156.63" y2="172.7" stroke="#777" stroke-width="0.3" />
<line x1="159.97" y1="171.4" x2="159.97" y2="172.7" stroke="#777" stroke-width="0.3" />
<line x1="163.3" y1="171.4" x2="163.3" y2="172.7" stroke="#777" stroke-width="0.3" />
<line x1="166.63" y1="171.4" x2="166.63" y2="172.7" stroke="#777" stroke-width="0.3" />
<line x1="169.97" y1="171.4" x2="169.97" y2="172.7" stroke="#777" stroke-width="0.3" />
<line x1="173.3" y1="171.4" x2="173.3" y2="172.7" stroke="#777" stroke-width="0.3" />
<line x1="176.63" y1="171.4" x2="176.63" y2="172.7" stroke="#777" stroke-width="0.3" />
<line x1="179.96" y1="171.4" x2="179.96" y2="172.7" stroke="#777" stroke-width="0.3" />
<line x1="183.3" y1="171.4" x2="183.3" y2="172.7" stroke="#777" stroke-width="0.3" />
<line x1="186.63" y1="171.4" x2="186.63" y2="172.7" stroke="#777" stroke-width="0.3" />
<line x1="189.96" y1="171.4" x2="189.96" y2="172.7" stroke="#777" stroke-width="0.3" />
<line x1="193.3" y1="171.4" x2="193.3" y2="172.7" stroke="#777" stroke-width="0.3" />
<line x1="196.63" y1="171.4" x2="196.63" y2="172.7" stroke="#777" stroke-width="0.3" />
<line x1="199.96" y1="171.4" x2="199.96" y2="172.7" stroke="#777" stroke-width="0.3" />
<line x1="203.3" y1="171.4" x2="203.3" y2="172.7" stroke="#777" stroke-width="0.3" />
<line x1="206.63" y1="171.4" x2="206.63" y2="172.7" stroke="#777" stroke-width="0.3" />
<line x1="209.96" y1="171.4" x2="209.96" y2="172.7" stroke="#777" stroke-width="0.3" />
<line x1="213.29" y1="171.4" x2="213.29" y2="172.7" stroke="#777" stroke-width="0.3" />
<line x1="216.63" y1="171.4" x2="216.63" y2="172.7" stroke="#777" stroke-width="0.3" />
<line x1="219.96" y1="171.4" x2="219.96" y2="172.7" stroke="#777" stroke-width="0.3" />
<line x1="223.29" y1="171.4" x2="223.29" y2="172.7" stroke="#777" stroke-width="0.3" />
<line x1="226.63" y1="171.4" x2="226.63" y2="172.7" stroke="#777" stroke-width="0.3" />
<line x1="229.96" y1="171.4" x2="229.96" y2="172.7" stroke="#777" stroke-width="0.3" />
<line x1="233.29" y1="171.4" x2="233.29" y2="172.7" stroke="#777" stroke-width="0.3" />
<line x1="236.62" y1="171.4" x2="236.62" y2="172.7" stroke="#777" stroke-width="0.3" />
<line x1="239.96" y1="171.4" x2="239.96" y2="172.7" stroke="#777" stroke-width="0.3" />
<line x1="243.29" y1="171.4" x2="243.29" y2="172.7" stroke="#777" stroke-width="0.3" />
<line x1="246.62" y1="171.4" x2="246.62" y2="172.7" stroke="#777" stroke-width="0.3" />
<line x1="249.96" y1="171.4" x2="249.96" y2="172.7" stroke="#777" stroke-width="0.3" />
<line x1="253.29" y1="171.4" x2="253.29" y2="172.7" stroke="#777" stroke-width="0.3" />
<line x1="256.62" y1="171.4" x2="256.62" y2="172.7" stroke="#777" stroke-width="0.3" />
<line x1="259.96" y1="171.4" x2="259.96" y2="172.7" stroke="#777" stroke-width="0.3" />
<line x1="263.29" y1="171.4" x2="263.29" y2="172.7" stroke="#777" stroke-width="0.3" />
<line x1="266.62" y1="171.4" x2="266.62" y2="172.7" stroke="#777" stroke-width="0.3" />
<line x1="269.96" y1="171.4" x2="269.96" y2="172.7" stroke="#777" stroke-width="0.3" />
<line x1="273.29" y1="171.4" x2="273.29" y2="172.7" stroke="#777" stroke-width="0.3" />
<line x1="276.62" y1="171.4" x2="276.62" y2="172.7" stroke="#777" stroke-width="0.3" />
<line x1="279.95" y1="171.4" x2="279.95" y2="172.7" stroke="#777" stroke-width="0.3" />
<line x1="283.29" y1="171.4" x2="283.29" y2="172.7" stroke="#777" stroke-width="0.3" />
<line x1="153" y1="172.5" x2="286" y2="172.5" stroke="#9a9a9a" stroke-width="0.4" />
<rect x="77.2" y="173.15" width="75.8" height="7.5" fill="#ffffff" />
<line x1="77.2" y1="180.65" x2="153" y2="180.65" stroke="#c4c4c4" stroke-width="0.35" />
<path d="M87.4 174.85 h2.4 l1.1 1.1 v3.3 h-3.5z" fill="#f2f4fa" stroke="#2a2a2a" stroke-width="0.6"/>
<path d="M87.2 175.75 q0.6 2.4 3 2.8" stroke="#333" stroke-width="0.7" fill="none"/>
<text x="94.8" y="178.9" font-size="4.85" fill="#2a2a2a" font-family='"Liberation Sans","DejaVu Sans",sans-serif' textLength="16.79" lengthAdjust="spacingAndGlyphs" >Actions</text>
<rect x="131.9" y="176.45" width="1.5" height="1.5" fill="#111"/>
<rect x="139.8" y="176.45" width="1.5" height="1.5" fill="#111"/>
<rect x="146.9" y="174.45" width="4.5" height="4.7" fill="#9b30d0" stroke="#3a3a55" stroke-width="0.5"/>
<rect x="153" y="173.15" width="133" height="7.5" fill="#ffffff" />
<line x1="203.3" y1="173.15" x2="203.3" y2="180.65" stroke="#dadada" stroke-width="0.3" />
<line x1="206.63" y1="173.15" x2="206.63" y2="180.65" stroke="#dadada" stroke-width="0.3" />
<line x1="209.96" y1="173.15" x2="209.96" y2="180.65" stroke="#dadada" stroke-width="0.3" />
<line x1="213.29" y1="173.15" x2="213.29" y2="180.65" stroke="#dadada" stroke-width="0.3" />
<rect x="216.63" y="173.15" width="3.33" height="7.5" fill="#e6e6e6" />
<line x1="216.63" y1="173.15" x2="216.63" y2="180.65" stroke="#dadada" stroke-width="0.3" />
<line x1="219.96" y1="173.15" x2="219.96" y2="180.65" stroke="#dadada" stroke-width="0.3" />
<line x1="223.29" y1="173.15" x2="223.29" y2="180.65" stroke="#dadada" stroke-width="0.3" />
<line x1="226.63" y1="173.15" x2="226.63" y2="180.65" stroke="#dadada" stroke-width="0.3" />
<line x1="229.96" y1="173.15" x2="229.96" y2="180.65" stroke="#dadada" stroke-width="0.3" />
<rect x="233.29" y="173.15" width="3.33" height="7.5" fill="#e6e6e6" />
<line x1="233.29" y1="173.15" x2="233.29" y2="180.65" stroke="#dadada" stroke-width="0.3" />
<line x1="236.62" y1="173.15" x2="236.62" y2="180.65" stroke="#dadada" stroke-width="0.3" />
<line x1="239.96" y1="173.15" x2="239.96" y2="180.65" stroke="#dadada" stroke-width="0.3" />
<line x1="243.29" y1="173.15" x2="243.29" y2="180.65" stroke="#dadada" stroke-width="0.3" />
<line x1="246.62" y1="173.15" x2="246.62" y2="180.65" stroke="#dadada" stroke-width="0.3" />
<rect x="249.96" y="173.15" width="3.33" height="7.5" fill="#e6e6e6" />
<line x1="249.96" y1="173.15" x2="249.96" y2="180.65" stroke="#dadada" stroke-width="0.3" />
<line x1="253.29" y1="173.15" x2="253.29" y2="180.65" stroke="#dadada" stroke-width="0.3" />
<line x1="256.62" y1="173.15" x2="256.62" y2="180.65" stroke="#dadada" stroke-width="0.3" />
<line x1="259.96" y1="173.15" x2="259.96" y2="180.65" stroke="#dadada" stroke-width="0.3" />
<line x1="263.29" y1="173.15" x2="263.29" y2="180.65" stroke="#dadada" stroke-width="0.3" />
<rect x="266.62" y="173.15" width="3.33" height="7.5" fill="#e6e6e6" />
<line x1="266.62" y1="173.15" x2="266.62" y2="180.65" stroke="#dadada" stroke-width="0.3" />
<line x1="269.96" y1="173.15" x2="269.96" y2="180.65" stroke="#dadada" stroke-width="0.3" />
<line x1="273.29" y1="173.15" x2="273.29" y2="180.65" stroke="#dadada" stroke-width="0.3" />
<line x1="276.62" y1="173.15" x2="276.62" y2="180.65" stroke="#dadada" stroke-width="0.3" />
<line x1="279.95" y1="173.15" x2="279.95" y2="180.65" stroke="#dadada" stroke-width="0.3" />
<rect x="283.29" y="173.15" width="2.71" height="7.5" fill="#e6e6e6" />
<line x1="283.29" y1="173.15" x2="283.29" y2="180.65" stroke="#dadada" stroke-width="0.3" />
<line x1="203.3" y1="180.65" x2="286" y2="180.65" stroke="#dadada" stroke-width="0.3" />
<rect x="153.3" y="173.15" width="50" height="7.5" fill="#ffffff" />
<line x1="153.3" y1="180.3" x2="203.3" y2="180.3" stroke="#5c5c5c" stroke-width="0.85" />
<line x1="153.3" y1="173.25" x2="203.3" y2="173.25" stroke="#aaa" stroke-width="0.3" />
<circle cx="154.8" cy="178.55" r="0.75" fill="#fff" stroke="#222" stroke-width="0.4"/>
<rect x="197.36" y="175.75" width="2" height="3.6" fill="#fff" stroke="#333" stroke-width="0.4"/>
<line x1="199.96" y1="173.15" x2="199.96" y2="180.65" stroke="#444" stroke-width="0.4" />
<circle cx="201.63" cy="178.35" r="1.15" fill="#111"/>
<line x1="203.3" y1="173.15" x2="203.3" y2="180.65" stroke="#555" stroke-width="0.4" />
<rect x="77.2" y="180.65" width="75.8" height="7.5" fill="#ffffff" />
<line x1="77.2" y1="188.15" x2="153" y2="188.15" stroke="#c4c4c4" stroke-width="0.35" />
<path d="M87.4 182.35 h2.4 l1.1 1.1 v3.3 h-3.5z" fill="#f2f4fa" stroke="#2a2a2a" stroke-width="0.6"/>
<path d="M87.2 183.25 q0.6 2.4 3 2.8" stroke="#333" stroke-width="0.7" fill="none"/>
<text x="94.8" y="186.4" font-size="4.85" fill="#2a2a2a" font-family='"Liberation Sans","DejaVu Sans",sans-serif' textLength="11.54" lengthAdjust="spacingAndGlyphs" >texto</text>
<rect x="131.9" y="183.95" width="1.5" height="1.5" fill="#111"/>
<rect x="138.4" y="183.75" width="3.8" height="2.9" rx="0.4" fill="#1c1c1c"/><path d="M139.3 183.85 v-1 q1-1.7 2 0 v1" stroke="#1c1c1c" stroke-width="0.7" fill="none"/><rect x="139.9" y="184.55" width="0.8" height="1" fill="#ddd"/>
<rect x="146.9" y="181.95" width="4.5" height="4.7" fill="#9b30d0" stroke="#3a3a55" stroke-width="0.5"/>
<rect x="153" y="180.65" width="133" height="7.5" fill="#ffffff" />
<line x1="203.3" y1="180.65" x2="203.3" y2="188.15" stroke="#dadada" stroke-width="0.3" />
<line x1="206.63" y1="180.65" x2="206.63" y2="188.15" stroke="#dadada" stroke-width="0.3" />
<line x1="209.96" y1="180.65" x2="209.96" y2="188.15" stroke="#dadada" stroke-width="0.3" />
<line x1="213.29" y1="180.65" x2="213.29" y2="188.15" stroke="#dadada" stroke-width="0.3" />
<rect x="216.63" y="180.65" width="3.33" height="7.5" fill="#e6e6e6" />
<line x1="216.63" y1="180.65" x2="216.63" y2="188.15" stroke="#dadada" stroke-width="0.3" />
<line x1="219.96" y1="180.65" x2="219.96" y2="188.15" stroke="#dadada" stroke-width="0.3" />
<line x1="223.29" y1="180.65" x2="223.29" y2="188.15" stroke="#dadada" stroke-width="0.3" />
<line x1="226.63" y1="180.65" x2="226.63" y2="188.15" stroke="#dadada" stroke-width="0.3" />
<line x1="229.96" y1="180.65" x2="229.96" y2="188.15" stroke="#dadada" stroke-width="0.3" />
<rect x="233.29" y="180.65" width="3.33" height="7.5" fill="#e6e6e6" />
<line x1="233.29" y1="180.65" x2="233.29" y2="188.15" stroke="#dadada" stroke-width="0.3" />
<line x1="236.62" y1="180.65" x2="236.62" y2="188.15" stroke="#dadada" stroke-width="0.3" />
<line x1="239.96" y1="180.65" x2="239.96" y2="188.15" stroke="#dadada" stroke-width="0.3" />
<line x1="243.29" y1="180.65" x2="243.29" y2="188.15" stroke="#dadada" stroke-width="0.3" />
<line x1="246.62" y1="180.65" x2="246.62" y2="188.15" stroke="#dadada" stroke-width="0.3" />
<rect x="249.96" y="180.65" width="3.33" height="7.5" fill="#e6e6e6" />
<line x1="249.96" y1="180.65" x2="249.96" y2="188.15" stroke="#dadada" stroke-width="0.3" />
<line x1="253.29" y1="180.65" x2="253.29" y2="188.15" stroke="#dadada" stroke-width="0.3" />
<line x1="256.62" y1="180.65" x2="256.62" y2="188.15" stroke="#dadada" stroke-width="0.3" />
<line x1="259.96" y1="180.65" x2="259.96" y2="188.15" stroke="#dadada" stroke-width="0.3" />
<line x1="263.29" y1="180.65" x2="263.29" y2="188.15" stroke="#dadada" stroke-width="0.3" />
<rect x="266.62" y="180.65" width="3.33" height="7.5" fill="#e6e6e6" />
<line x1="266.62" y1="180.65" x2="266.62" y2="188.15" stroke="#dadada" stroke-width="0.3" />
<line x1="269.96" y1="180.65" x2="269.96" y2="188.15" stroke="#dadada" stroke-width="0.3" />
<line x1="273.29" y1="180.65" x2="273.29" y2="188.15" stroke="#dadada" stroke-width="0.3" />
<line x1="276.62" y1="180.65" x2="276.62" y2="188.15" stroke="#dadada" stroke-width="0.3" />
<line x1="279.95" y1="180.65" x2="279.95" y2="188.15" stroke="#dadada" stroke-width="0.3" />
<rect x="283.29" y="180.65" width="2.71" height="7.5" fill="#e6e6e6" />
<line x1="283.29" y1="180.65" x2="283.29" y2="188.15" stroke="#dadada" stroke-width="0.3" />
<line x1="203.3" y1="188.15" x2="286" y2="188.15" stroke="#dadada" stroke-width="0.3" />
<rect x="153.3" y="180.65" width="50" height="7.5" fill="#ffffff" />
<line x1="153.3" y1="187.8" x2="203.3" y2="187.8" stroke="#5c5c5c" stroke-width="0.85" />
<line x1="153.3" y1="180.75" x2="203.3" y2="180.75" stroke="#aaa" stroke-width="0.3" />
<circle cx="154.8" cy="186.05" r="0.75" fill="#fff" stroke="#222" stroke-width="0.4"/>
<rect x="197.36" y="183.25" width="2" height="3.6" fill="#fff" stroke="#333" stroke-width="0.4"/>
<line x1="199.96" y1="180.65" x2="199.96" y2="188.15" stroke="#444" stroke-width="0.4" />
<circle cx="201.63" cy="185.85" r="1.15" fill="#111"/>
<line x1="203.3" y1="180.65" x2="203.3" y2="188.15" stroke="#555" stroke-width="0.4" />
<rect x="77.2" y="188.15" width="75.8" height="7.5" fill="#ffffff" />
<line x1="77.2" y1="195.65" x2="153" y2="195.65" stroke="#c4c4c4" stroke-width="0.35" />
<path d="M87.4 189.85 h2.4 l1.1 1.1 v3.3 h-3.5z" fill="#f2f4fa" stroke="#2a2a2a" stroke-width="0.6"/>
<path d="M87.2 190.75 q0.6 2.4 3 2.8" stroke="#333" stroke-width="0.7" fill="none"/>
<text x="94.8" y="193.9" font-size="4.85" fill="#2a2a2a" font-family='"Liberation Sans","DejaVu Sans",sans-serif' textLength="16.07" lengthAdjust="spacingAndGlyphs" >texto_2</text>
<rect x="131.9" y="191.45" width="1.5" height="1.5" fill="#111"/>
<rect x="139.8" y="191.45" width="1.5" height="1.5" fill="#111"/>
<rect x="146.9" y="189.45" width="4.5" height="4.7" fill="#9b30d0" stroke="#3a3a55" stroke-width="0.5"/>
<rect x="153" y="188.15" width="133" height="7.5" fill="#ffffff" />
<line x1="203.3" y1="188.15" x2="203.3" y2="195.65" stroke="#dadada" stroke-width="0.3" />
<line x1="206.63" y1="188.15" x2="206.63" y2="195.65" stroke="#dadada" stroke-width="0.3" />
<line x1="209.96" y1="188.15" x2="209.96" y2="195.65" stroke="#dadada" stroke-width="0.3" />
<line x1="213.29" y1="188.15" x2="213.29" y2="195.65" stroke="#dadada" stroke-width="0.3" />
<rect x="216.63" y="188.15" width="3.33" height="7.5" fill="#e6e6e6" />
<line x1="216.63" y1="188.15" x2="216.63" y2="195.65" stroke="#dadada" stroke-width="0.3" />
<line x1="219.96" y1="188.15" x2="219.96" y2="195.65" stroke="#dadada" stroke-width="0.3" />
<line x1="223.29" y1="188.15" x2="223.29" y2="195.65" stroke="#dadada" stroke-width="0.3" />
<line x1="226.63" y1="188.15" x2="226.63" y2="195.65" stroke="#dadada" stroke-width="0.3" />
<line x1="229.96" y1="188.15" x2="229.96" y2="195.65" stroke="#dadada" stroke-width="0.3" />
<rect x="233.29" y="188.15" width="3.33" height="7.5" fill="#e6e6e6" />
<line x1="233.29" y1="188.15" x2="233.29" y2="195.65" stroke="#dadada" stroke-width="0.3" />
<line x1="236.62" y1="188.15" x2="236.62" y2="195.65" stroke="#dadada" stroke-width="0.3" />
<line x1="239.96" y1="188.15" x2="239.96" y2="195.65" stroke="#dadada" stroke-width="0.3" />
<line x1="243.29" y1="188.15" x2="243.29" y2="195.65" stroke="#dadada" stroke-width="0.3" />
<line x1="246.62" y1="188.15" x2="246.62" y2="195.65" stroke="#dadada" stroke-width="0.3" />
<rect x="249.96" y="188.15" width="3.33" height="7.5" fill="#e6e6e6" />
<line x1="249.96" y1="188.15" x2="249.96" y2="195.65" stroke="#dadada" stroke-width="0.3" />
<line x1="253.29" y1="188.15" x2="253.29" y2="195.65" stroke="#dadada" stroke-width="0.3" />
<line x1="256.62" y1="188.15" x2="256.62" y2="195.65" stroke="#dadada" stroke-width="0.3" />
<line x1="259.96" y1="188.15" x2="259.96" y2="195.65" stroke="#dadada" stroke-width="0.3" />
<line x1="263.29" y1="188.15" x2="263.29" y2="195.65" stroke="#dadada" stroke-width="0.3" />
<rect x="266.62" y="188.15" width="3.33" height="7.5" fill="#e6e6e6" />
<line x1="266.62" y1="188.15" x2="266.62" y2="195.65" stroke="#dadada" stroke-width="0.3" />
<line x1="269.96" y1="188.15" x2="269.96" y2="195.65" stroke="#dadada" stroke-width="0.3" />
<line x1="273.29" y1="188.15" x2="273.29" y2="195.65" stroke="#dadada" stroke-width="0.3" />
<line x1="276.62" y1="188.15" x2="276.62" y2="195.65" stroke="#dadada" stroke-width="0.3" />
<line x1="279.95" y1="188.15" x2="279.95" y2="195.65" stroke="#dadada" stroke-width="0.3" />
<rect x="283.29" y="188.15" width="2.71" height="7.5" fill="#e6e6e6" />
<line x1="283.29" y1="188.15" x2="283.29" y2="195.65" stroke="#dadada" stroke-width="0.3" />
<line x1="203.3" y1="195.65" x2="286" y2="195.65" stroke="#dadada" stroke-width="0.3" />
<rect x="153.3" y="188.15" width="50" height="7.5" fill="#ffffff" />
<line x1="153.3" y1="195.3" x2="203.3" y2="195.3" stroke="#5c5c5c" stroke-width="0.85" />
<line x1="153.3" y1="188.25" x2="203.3" y2="188.25" stroke="#aaa" stroke-width="0.3" />
<circle cx="154.8" cy="193.55" r="0.75" fill="#fff" stroke="#222" stroke-width="0.4"/>
<rect x="197.36" y="190.75" width="2" height="3.6" fill="#fff" stroke="#333" stroke-width="0.4"/>
<line x1="199.96" y1="188.15" x2="199.96" y2="195.65" stroke="#444" stroke-width="0.4" />
<circle cx="201.63" cy="193.35" r="1.15" fill="#111"/>
<line x1="203.3" y1="188.15" x2="203.3" y2="195.65" stroke="#555" stroke-width="0.4" />
<rect x="77.2" y="195.65" width="75.8" height="7.5" fill="#5b8bd6" />
<line x1="77.2" y1="203.15" x2="153" y2="203.15" stroke="#c4c4c4" stroke-width="0.35" />
<path d="M87.4 197.35 h2.4 l1.1 1.1 v3.3 h-3.5z" fill="#dfe8fa" stroke="#f4f4f4" stroke-width="0.6"/>
<path d="M87.2 198.25 q0.6 2.4 3 2.8" stroke="#fff" stroke-width="0.7" fill="none"/>
<text x="94.8" y="201.4" font-size="4.85" fill="#ffffff" font-family='"Liberation Sans","DejaVu Sans",sans-serif' textLength="20.6" lengthAdjust="spacingAndGlyphs" >musica_3</text>
<path d="M123.6 200.85 l2.8-3 l0.8 0.7 l-2.8 3 l-1.2 0.4z" fill="#f2f2f2" stroke="#333" stroke-width="0.3"/>
<rect x="131.9" y="198.95" width="1.5" height="1.5" fill="#fff"/>
<rect x="139.8" y="198.95" width="1.5" height="1.5" fill="#fff"/>
<rect x="146.9" y="196.95" width="4.5" height="4.7" fill="#4ff6f6" stroke="#3a3a55" stroke-width="0.5"/>
<rect x="153" y="195.65" width="133" height="7.5" fill="#ffffff" />
<line x1="203.3" y1="195.65" x2="203.3" y2="203.15" stroke="#dadada" stroke-width="0.3" />
<line x1="206.63" y1="195.65" x2="206.63" y2="203.15" stroke="#dadada" stroke-width="0.3" />
<line x1="209.96" y1="195.65" x2="209.96" y2="203.15" stroke="#dadada" stroke-width="0.3" />
<line x1="213.29" y1="195.65" x2="213.29" y2="203.15" stroke="#dadada" stroke-width="0.3" />
<rect x="216.63" y="195.65" width="3.33" height="7.5" fill="#e6e6e6" />
<line x1="216.63" y1="195.65" x2="216.63" y2="203.15" stroke="#dadada" stroke-width="0.3" />
<line x1="219.96" y1="195.65" x2="219.96" y2="203.15" stroke="#dadada" stroke-width="0.3" />
<line x1="223.29" y1="195.65" x2="223.29" y2="203.15" stroke="#dadada" stroke-width="0.3" />
<line x1="226.63" y1="195.65" x2="226.63" y2="203.15" stroke="#dadada" stroke-width="0.3" />
<line x1="229.96" y1="195.65" x2="229.96" y2="203.15" stroke="#dadada" stroke-width="0.3" />
<rect x="233.29" y="195.65" width="3.33" height="7.5" fill="#e6e6e6" />
<line x1="233.29" y1="195.65" x2="233.29" y2="203.15" stroke="#dadada" stroke-width="0.3" />
<line x1="236.62" y1="195.65" x2="236.62" y2="203.15" stroke="#dadada" stroke-width="0.3" />
<line x1="239.96" y1="195.65" x2="239.96" y2="203.15" stroke="#dadada" stroke-width="0.3" />
<line x1="243.29" y1="195.65" x2="243.29" y2="203.15" stroke="#dadada" stroke-width="0.3" />
<line x1="246.62" y1="195.65" x2="246.62" y2="203.15" stroke="#dadada" stroke-width="0.3" />
<rect x="249.96" y="195.65" width="3.33" height="7.5" fill="#e6e6e6" />
<line x1="249.96" y1="195.65" x2="249.96" y2="203.15" stroke="#dadada" stroke-width="0.3" />
<line x1="253.29" y1="195.65" x2="253.29" y2="203.15" stroke="#dadada" stroke-width="0.3" />
<line x1="256.62" y1="195.65" x2="256.62" y2="203.15" stroke="#dadada" stroke-width="0.3" />
<line x1="259.96" y1="195.65" x2="259.96" y2="203.15" stroke="#dadada" stroke-width="0.3" />
<line x1="263.29" y1="195.65" x2="263.29" y2="203.15" stroke="#dadada" stroke-width="0.3" />
<rect x="266.62" y="195.65" width="3.33" height="7.5" fill="#e6e6e6" />
<line x1="266.62" y1="195.65" x2="266.62" y2="203.15" stroke="#dadada" stroke-width="0.3" />
<line x1="269.96" y1="195.65" x2="269.96" y2="203.15" stroke="#dadada" stroke-width="0.3" />
<line x1="273.29" y1="195.65" x2="273.29" y2="203.15" stroke="#dadada" stroke-width="0.3" />
<line x1="276.62" y1="195.65" x2="276.62" y2="203.15" stroke="#dadada" stroke-width="0.3" />
<line x1="279.95" y1="195.65" x2="279.95" y2="203.15" stroke="#dadada" stroke-width="0.3" />
<rect x="283.29" y="195.65" width="2.71" height="7.5" fill="#e6e6e6" />
<line x1="283.29" y1="195.65" x2="283.29" y2="203.15" stroke="#dadada" stroke-width="0.3" />
<line x1="203.3" y1="203.15" x2="286" y2="203.15" stroke="#dadada" stroke-width="0.3" />
<rect x="153.3" y="195.65" width="50" height="7.5" fill="#ffffff" />
<line x1="153.3" y1="202.8" x2="203.3" y2="202.8" stroke="#5c5c5c" stroke-width="0.85" />
<line x1="153.3" y1="195.75" x2="203.3" y2="195.75" stroke="#aaa" stroke-width="0.3" />
<circle cx="154.8" cy="201.05" r="0.75" fill="#fff" stroke="#222" stroke-width="0.4"/>
<rect x="197.36" y="198.25" width="2" height="3.6" fill="#fff" stroke="#333" stroke-width="0.4"/>
<line x1="199.96" y1="195.65" x2="199.96" y2="203.15" stroke="#444" stroke-width="0.4" />
<rect x="200.16" y="196.05" width="3.13" height="6.7" fill="#3a5cc0" />
<circle cx="201.63" cy="200.85" r="1.15" fill="#111"/>
<line x1="203.3" y1="195.65" x2="203.3" y2="203.15" stroke="#555" stroke-width="0.4" />
<rect x="77.2" y="203.15" width="75.8" height="7.5" fill="#ffffff" />
<line x1="77.2" y1="210.65" x2="153" y2="210.65" stroke="#c4c4c4" stroke-width="0.35" />
<path d="M87.4 204.85 h2.4 l1.1 1.1 v3.3 h-3.5z" fill="#f2f4fa" stroke="#2a2a2a" stroke-width="0.6"/>
<path d="M87.2 205.75 q0.6 2.4 3 2.8" stroke="#333" stroke-width="0.7" fill="none"/>
<text x="94.8" y="208.9" font-size="4.85" fill="#2a2a2a" font-family='"Liberation Sans","DejaVu Sans",sans-serif' textLength="20.6" lengthAdjust="spacingAndGlyphs" >musica_2</text>
<rect x="131.9" y="206.45" width="1.5" height="1.5" fill="#111"/>
<rect x="139.8" y="206.45" width="1.5" height="1.5" fill="#111"/>
<rect x="146.9" y="204.45" width="4.5" height="4.7" fill="#f84cf8" stroke="#3a3a55" stroke-width="0.5"/>
<rect x="153" y="203.15" width="133" height="7.5" fill="#ffffff" />
<line x1="203.3" y1="203.15" x2="203.3" y2="210.65" stroke="#dadada" stroke-width="0.3" />
<line x1="206.63" y1="203.15" x2="206.63" y2="210.65" stroke="#dadada" stroke-width="0.3" />
<line x1="209.96" y1="203.15" x2="209.96" y2="210.65" stroke="#dadada" stroke-width="0.3" />
<line x1="213.29" y1="203.15" x2="213.29" y2="210.65" stroke="#dadada" stroke-width="0.3" />
<rect x="216.63" y="203.15" width="3.33" height="7.5" fill="#e6e6e6" />
<line x1="216.63" y1="203.15" x2="216.63" y2="210.65" stroke="#dadada" stroke-width="0.3" />
<line x1="219.96" y1="203.15" x2="219.96" y2="210.65" stroke="#dadada" stroke-width="0.3" />
<line x1="223.29" y1="203.15" x2="223.29" y2="210.65" stroke="#dadada" stroke-width="0.3" />
<line x1="226.63" y1="203.15" x2="226.63" y2="210.65" stroke="#dadada" stroke-width="0.3" />
<line x1="229.96" y1="203.15" x2="229.96" y2="210.65" stroke="#dadada" stroke-width="0.3" />
<rect x="233.29" y="203.15" width="3.33" height="7.5" fill="#e6e6e6" />
<line x1="233.29" y1="203.15" x2="233.29" y2="210.65" stroke="#dadada" stroke-width="0.3" />
<line x1="236.62" y1="203.15" x2="236.62" y2="210.65" stroke="#dadada" stroke-width="0.3" />
<line x1="239.96" y1="203.15" x2="239.96" y2="210.65" stroke="#dadada" stroke-width="0.3" />
<line x1="243.29" y1="203.15" x2="243.29" y2="210.65" stroke="#dadada" stroke-width="0.3" />
<line x1="246.62" y1="203.15" x2="246.62" y2="210.65" stroke="#dadada" stroke-width="0.3" />
<rect x="249.96" y="203.15" width="3.33" height="7.5" fill="#e6e6e6" />
<line x1="249.96" y1="203.15" x2="249.96" y2="210.65" stroke="#dadada" stroke-width="0.3" />
<line x1="253.29" y1="203.15" x2="253.29" y2="210.65" stroke="#dadada" stroke-width="0.3" />
<line x1="256.62" y1="203.15" x2="256.62" y2="210.65" stroke="#dadada" stroke-width="0.3" />
<line x1="259.96" y1="203.15" x2="259.96" y2="210.65" stroke="#dadada" stroke-width="0.3" />
<line x1="263.29" y1="203.15" x2="263.29" y2="210.65" stroke="#dadada" stroke-width="0.3" />
<rect x="266.62" y="203.15" width="3.33" height="7.5" fill="#e6e6e6" />
<line x1="266.62" y1="203.15" x2="266.62" y2="210.65" stroke="#dadada" stroke-width="0.3" />
<line x1="269.96" y1="203.15" x2="269.96" y2="210.65" stroke="#dadada" stroke-width="0.3" />
<line x1="273.29" y1="203.15" x2="273.29" y2="210.65" stroke="#dadada" stroke-width="0.3" />
<line x1="276.62" y1="203.15" x2="276.62" y2="210.65" stroke="#dadada" stroke-width="0.3" />
<line x1="279.95" y1="203.15" x2="279.95" y2="210.65" stroke="#dadada" stroke-width="0.3" />
<rect x="283.29" y="203.15" width="2.71" height="7.5" fill="#e6e6e6" />
<line x1="283.29" y1="203.15" x2="283.29" y2="210.65" stroke="#dadada" stroke-width="0.3" />
<line x1="203.3" y1="210.65" x2="286" y2="210.65" stroke="#dadada" stroke-width="0.3" />
<rect x="153.3" y="203.15" width="50" height="7.5" fill="#ffffff" />
<line x1="153.3" y1="210.3" x2="203.3" y2="210.3" stroke="#5c5c5c" stroke-width="0.85" />
<line x1="153.3" y1="203.25" x2="203.3" y2="203.25" stroke="#aaa" stroke-width="0.3" />
<circle cx="154.8" cy="208.55" r="0.75" fill="#fff" stroke="#222" stroke-width="0.4"/>
<rect x="197.36" y="205.75" width="2" height="3.6" fill="#fff" stroke="#333" stroke-width="0.4"/>
<line x1="199.96" y1="203.15" x2="199.96" y2="210.65" stroke="#444" stroke-width="0.4" />
<circle cx="201.63" cy="208.35" r="1.15" fill="#111"/>
<line x1="203.3" y1="203.15" x2="203.3" y2="210.65" stroke="#555" stroke-width="0.4" />
<rect x="77.2" y="210.65" width="75.8" height="7.5" fill="#ffffff" />
<line x1="77.2" y1="218.15" x2="153" y2="218.15" stroke="#c4c4c4" stroke-width="0.35" />
<path d="M87.4 212.35 h2.4 l1.1 1.1 v3.3 h-3.5z" fill="#f2f4fa" stroke="#2a2a2a" stroke-width="0.6"/>
<path d="M87.2 213.25 q0.6 2.4 3 2.8" stroke="#333" stroke-width="0.7" fill="none"/>
<text x="94.8" y="216.4" font-size="4.85" fill="#2a2a2a" font-family='"Liberation Sans","DejaVu Sans",sans-serif' textLength="20.6" lengthAdjust="spacingAndGlyphs" >musica_1</text>
<rect x="131.9" y="213.95" width="1.5" height="1.5" fill="#111"/>
<rect x="139.8" y="213.95" width="1.5" height="1.5" fill="#111"/>
<rect x="146.9" y="211.95" width="4.5" height="4.7" fill="#f8800c" stroke="#3a3a55" stroke-width="0.5"/>
<rect x="153" y="210.65" width="133" height="7.5" fill="#ffffff" />
<line x1="203.3" y1="210.65" x2="203.3" y2="218.15" stroke="#dadada" stroke-width="0.3" />
<line x1="206.63" y1="210.65" x2="206.63" y2="218.15" stroke="#dadada" stroke-width="0.3" />
<line x1="209.96" y1="210.65" x2="209.96" y2="218.15" stroke="#dadada" stroke-width="0.3" />
<line x1="213.29" y1="210.65" x2="213.29" y2="218.15" stroke="#dadada" stroke-width="0.3" />
<rect x="216.63" y="210.65" width="3.33" height="7.5" fill="#e6e6e6" />
<line x1="216.63" y1="210.65" x2="216.63" y2="218.15" stroke="#dadada" stroke-width="0.3" />
<line x1="219.96" y1="210.65" x2="219.96" y2="218.15" stroke="#dadada" stroke-width="0.3" />
<line x1="223.29" y1="210.65" x2="223.29" y2="218.15" stroke="#dadada" stroke-width="0.3" />
<line x1="226.63" y1="210.65" x2="226.63" y2="218.15" stroke="#dadada" stroke-width="0.3" />
<line x1="229.96" y1="210.65" x2="229.96" y2="218.15" stroke="#dadada" stroke-width="0.3" />
<rect x="233.29" y="210.65" width="3.33" height="7.5" fill="#e6e6e6" />
<line x1="233.29" y1="210.65" x2="233.29" y2="218.15" stroke="#dadada" stroke-width="0.3" />
<line x1="236.62" y1="210.65" x2="236.62" y2="218.15" stroke="#dadada" stroke-width="0.3" />
<line x1="239.96" y1="210.65" x2="239.96" y2="218.15" stroke="#dadada" stroke-width="0.3" />
<line x1="243.29" y1="210.65" x2="243.29" y2="218.15" stroke="#dadada" stroke-width="0.3" />
<line x1="246.62" y1="210.65" x2="246.62" y2="218.15" stroke="#dadada" stroke-width="0.3" />
<rect x="249.96" y="210.65" width="3.33" height="7.5" fill="#e6e6e6" />
<line x1="249.96" y1="210.65" x2="249.96" y2="218.15" stroke="#dadada" stroke-width="0.3" />
<line x1="253.29" y1="210.65" x2="253.29" y2="218.15" stroke="#dadada" stroke-width="0.3" />
<line x1="256.62" y1="210.65" x2="256.62" y2="218.15" stroke="#dadada" stroke-width="0.3" />
<line x1="259.96" y1="210.65" x2="259.96" y2="218.15" stroke="#dadada" stroke-width="0.3" />
<line x1="263.29" y1="210.65" x2="263.29" y2="218.15" stroke="#dadada" stroke-width="0.3" />
<rect x="266.62" y="210.65" width="3.33" height="7.5" fill="#e6e6e6" />
<line x1="266.62" y1="210.65" x2="266.62" y2="218.15" stroke="#dadada" stroke-width="0.3" />
<line x1="269.96" y1="210.65" x2="269.96" y2="218.15" stroke="#dadada" stroke-width="0.3" />
<line x1="273.29" y1="210.65" x2="273.29" y2="218.15" stroke="#dadada" stroke-width="0.3" />
<line x1="276.62" y1="210.65" x2="276.62" y2="218.15" stroke="#dadada" stroke-width="0.3" />
<line x1="279.95" y1="210.65" x2="279.95" y2="218.15" stroke="#dadada" stroke-width="0.3" />
<rect x="283.29" y="210.65" width="2.71" height="7.5" fill="#e6e6e6" />
<line x1="283.29" y1="210.65" x2="283.29" y2="218.15" stroke="#dadada" stroke-width="0.3" />
<line x1="203.3" y1="218.15" x2="286" y2="218.15" stroke="#dadada" stroke-width="0.3" />
<rect x="153.3" y="210.65" width="50" height="7.5" fill="#ffffff" />
<line x1="153.3" y1="217.8" x2="203.3" y2="217.8" stroke="#5c5c5c" stroke-width="0.85" />
<line x1="153.3" y1="210.75" x2="203.3" y2="210.75" stroke="#aaa" stroke-width="0.3" />
<circle cx="154.8" cy="216.05" r="0.75" fill="#fff" stroke="#222" stroke-width="0.4"/>
<rect x="197.36" y="213.25" width="2" height="3.6" fill="#fff" stroke="#333" stroke-width="0.4"/>
<line x1="199.96" y1="210.65" x2="199.96" y2="218.15" stroke="#444" stroke-width="0.4" />
<circle cx="201.63" cy="215.85" r="1.15" fill="#111"/>
<line x1="203.3" y1="210.65" x2="203.3" y2="218.15" stroke="#555" stroke-width="0.4" />
<rect x="77.2" y="218.15" width="75.8" height="7.5" fill="#ffffff" />
<line x1="77.2" y1="225.65" x2="153" y2="225.65" stroke="#c4c4c4" stroke-width="0.35" />
<path d="M87.4 219.85 h2.4 l1.1 1.1 v3.3 h-3.5z" fill="#f2f4fa" stroke="#2a2a2a" stroke-width="0.6"/>
<path d="M87.2 220.75 q0.6 2.4 3 2.8" stroke="#333" stroke-width="0.7" fill="none"/>
<text x="94.8" y="223.9" font-size="4.85" fill="#2a2a2a" font-family='"Liberation Sans","DejaVu Sans",sans-serif' textLength="17.72" lengthAdjust="spacingAndGlyphs" >amarelo</text>
<rect x="131.9" y="221.45" width="1.5" height="1.5" fill="#111"/>
<rect x="138.4" y="221.25" width="3.8" height="2.9" rx="0.4" fill="#1c1c1c"/><path d="M139.3 221.35 v-1 q1-1.7 2 0 v1" stroke="#1c1c1c" stroke-width="0.7" fill="none"/><rect x="139.9" y="222.05" width="0.8" height="1" fill="#ddd"/>
<rect x="146.9" y="219.45" width="4.5" height="4.7" fill="#4cf04c" stroke="#3a3a55" stroke-width="0.5"/>
<rect x="153" y="218.15" width="133" height="7.5" fill="#ffffff" />
<line x1="203.3" y1="218.15" x2="203.3" y2="225.65" stroke="#dadada" stroke-width="0.3" />
<line x1="206.63" y1="218.15" x2="206.63" y2="225.65" stroke="#dadada" stroke-width="0.3" />
<line x1="209.96" y1="218.15" x2="209.96" y2="225.65" stroke="#dadada" stroke-width="0.3" />
<line x1="213.29" y1="218.15" x2="213.29" y2="225.65" stroke="#dadada" stroke-width="0.3" />
<rect x="216.63" y="218.15" width="3.33" height="7.5" fill="#e6e6e6" />
<line x1="216.63" y1="218.15" x2="216.63" y2="225.65" stroke="#dadada" stroke-width="0.3" />
<line x1="219.96" y1="218.15" x2="219.96" y2="225.65" stroke="#dadada" stroke-width="0.3" />
<line x1="223.29" y1="218.15" x2="223.29" y2="225.65" stroke="#dadada" stroke-width="0.3" />
<line x1="226.63" y1="218.15" x2="226.63" y2="225.65" stroke="#dadada" stroke-width="0.3" />
<line x1="229.96" y1="218.15" x2="229.96" y2="225.65" stroke="#dadada" stroke-width="0.3" />
<rect x="233.29" y="218.15" width="3.33" height="7.5" fill="#e6e6e6" />
<line x1="233.29" y1="218.15" x2="233.29" y2="225.65" stroke="#dadada" stroke-width="0.3" />
<line x1="236.62" y1="218.15" x2="236.62" y2="225.65" stroke="#dadada" stroke-width="0.3" />
<line x1="239.96" y1="218.15" x2="239.96" y2="225.65" stroke="#dadada" stroke-width="0.3" />
<line x1="243.29" y1="218.15" x2="243.29" y2="225.65" stroke="#dadada" stroke-width="0.3" />
<line x1="246.62" y1="218.15" x2="246.62" y2="225.65" stroke="#dadada" stroke-width="0.3" />
<rect x="249.96" y="218.15" width="3.33" height="7.5" fill="#e6e6e6" />
<line x1="249.96" y1="218.15" x2="249.96" y2="225.65" stroke="#dadada" stroke-width="0.3" />
<line x1="253.29" y1="218.15" x2="253.29" y2="225.65" stroke="#dadada" stroke-width="0.3" />
<line x1="256.62" y1="218.15" x2="256.62" y2="225.65" stroke="#dadada" stroke-width="0.3" />
<line x1="259.96" y1="218.15" x2="259.96" y2="225.65" stroke="#dadada" stroke-width="0.3" />
<line x1="263.29" y1="218.15" x2="263.29" y2="225.65" stroke="#dadada" stroke-width="0.3" />
<rect x="266.62" y="218.15" width="3.33" height="7.5" fill="#e6e6e6" />
<line x1="266.62" y1="218.15" x2="266.62" y2="225.65" stroke="#dadada" stroke-width="0.3" />
<line x1="269.96" y1="218.15" x2="269.96" y2="225.65" stroke="#dadada" stroke-width="0.3" />
<line x1="273.29" y1="218.15" x2="273.29" y2="225.65" stroke="#dadada" stroke-width="0.3" />
<line x1="276.62" y1="218.15" x2="276.62" y2="225.65" stroke="#dadada" stroke-width="0.3" />
<line x1="279.95" y1="218.15" x2="279.95" y2="225.65" stroke="#dadada" stroke-width="0.3" />
<rect x="283.29" y="218.15" width="2.71" height="7.5" fill="#e6e6e6" />
<line x1="283.29" y1="218.15" x2="283.29" y2="225.65" stroke="#dadada" stroke-width="0.3" />
<line x1="203.3" y1="225.65" x2="286" y2="225.65" stroke="#dadada" stroke-width="0.3" />
<rect x="153.3" y="218.15" width="46.66" height="7.5" fill="#ccccfc" />
<line x1="153.3" y1="225.3" x2="203.3" y2="225.3" stroke="#5c5c5c" stroke-width="0.85" />
<line x1="153.3" y1="218.3" x2="199.96" y2="218.3" stroke="#8888aa" stroke-width="0.4" />
<circle cx="154.9" cy="223.25" r="1.1" fill="#111"/>
<line x1="155.9" y1="223.25" x2="198.76" y2="223.25" stroke="#222" stroke-width="0.4" />
<path d="M199.66 223.25 l-1.6-1 v2z" fill="#222"/>
<line x1="199.96" y1="218.15" x2="199.96" y2="225.65" stroke="#444" stroke-width="0.4" />
<circle cx="201.63" cy="223.35" r="1.15" fill="#111"/>
<line x1="203.3" y1="218.15" x2="203.3" y2="225.65" stroke="#555" stroke-width="0.4" />
<rect x="77.2" y="225.65" width="75.8" height="7.5" fill="#ffffff" />
<line x1="77.2" y1="233.15" x2="153" y2="233.15" stroke="#c4c4c4" stroke-width="0.35" />
<path d="M87.4 227.35 h2.4 l1.1 1.1 v3.3 h-3.5z" fill="#f2f4fa" stroke="#2a2a2a" stroke-width="0.6"/>
<path d="M87.2 228.25 q0.6 2.4 3 2.8" stroke="#333" stroke-width="0.7" fill="none"/>
<text x="94.8" y="231.4" font-size="4.85" fill="#2a2a2a" font-family='"Liberation Sans","DejaVu Sans",sans-serif' textLength="12.15" lengthAdjust="spacingAndGlyphs" >menu</text>
<rect x="131.9" y="228.95" width="1.5" height="1.5" fill="#111"/>
<rect x="138.4" y="228.75" width="3.8" height="2.9" rx="0.4" fill="#1c1c1c"/><path d="M139.3 228.85 v-1 q1-1.7 2 0 v1" stroke="#1c1c1c" stroke-width="0.7" fill="none"/><rect x="139.9" y="229.55" width="0.8" height="1" fill="#ddd"/>
<rect x="146.9" y="226.95" width="4.5" height="4.7" fill="#9b30d0" stroke="#3a3a55" stroke-width="0.5"/>
<rect x="153" y="225.65" width="133" height="7.5" fill="#ffffff" />
<line x1="203.3" y1="225.65" x2="203.3" y2="233.15" stroke="#dadada" stroke-width="0.3" />
<line x1="206.63" y1="225.65" x2="206.63" y2="233.15" stroke="#dadada" stroke-width="0.3" />
<line x1="209.96" y1="225.65" x2="209.96" y2="233.15" stroke="#dadada" stroke-width="0.3" />
<line x1="213.29" y1="225.65" x2="213.29" y2="233.15" stroke="#dadada" stroke-width="0.3" />
<rect x="216.63" y="225.65" width="3.33" height="7.5" fill="#e6e6e6" />
<line x1="216.63" y1="225.65" x2="216.63" y2="233.15" stroke="#dadada" stroke-width="0.3" />
<line x1="219.96" y1="225.65" x2="219.96" y2="233.15" stroke="#dadada" stroke-width="0.3" />
<line x1="223.29" y1="225.65" x2="223.29" y2="233.15" stroke="#dadada" stroke-width="0.3" />
<line x1="226.63" y1="225.65" x2="226.63" y2="233.15" stroke="#dadada" stroke-width="0.3" />
<line x1="229.96" y1="225.65" x2="229.96" y2="233.15" stroke="#dadada" stroke-width="0.3" />
<rect x="233.29" y="225.65" width="3.33" height="7.5" fill="#e6e6e6" />
<line x1="233.29" y1="225.65" x2="233.29" y2="233.15" stroke="#dadada" stroke-width="0.3" />
<line x1="236.62" y1="225.65" x2="236.62" y2="233.15" stroke="#dadada" stroke-width="0.3" />
<line x1="239.96" y1="225.65" x2="239.96" y2="233.15" stroke="#dadada" stroke-width="0.3" />
<line x1="243.29" y1="225.65" x2="243.29" y2="233.15" stroke="#dadada" stroke-width="0.3" />
<line x1="246.62" y1="225.65" x2="246.62" y2="233.15" stroke="#dadada" stroke-width="0.3" />
<rect x="249.96" y="225.65" width="3.33" height="7.5" fill="#e6e6e6" />
<line x1="249.96" y1="225.65" x2="249.96" y2="233.15" stroke="#dadada" stroke-width="0.3" />
<line x1="253.29" y1="225.65" x2="253.29" y2="233.15" stroke="#dadada" stroke-width="0.3" />
<line x1="256.62" y1="225.65" x2="256.62" y2="233.15" stroke="#dadada" stroke-width="0.3" />
<line x1="259.96" y1="225.65" x2="259.96" y2="233.15" stroke="#dadada" stroke-width="0.3" />
<line x1="263.29" y1="225.65" x2="263.29" y2="233.15" stroke="#dadada" stroke-width="0.3" />
<rect x="266.62" y="225.65" width="3.33" height="7.5" fill="#e6e6e6" />
<line x1="266.62" y1="225.65" x2="266.62" y2="233.15" stroke="#dadada" stroke-width="0.3" />
<line x1="269.96" y1="225.65" x2="269.96" y2="233.15" stroke="#dadada" stroke-width="0.3" />
<line x1="273.29" y1="225.65" x2="273.29" y2="233.15" stroke="#dadada" stroke-width="0.3" />
<line x1="276.62" y1="225.65" x2="276.62" y2="233.15" stroke="#dadada" stroke-width="0.3" />
<line x1="279.95" y1="225.65" x2="279.95" y2="233.15" stroke="#dadada" stroke-width="0.3" />
<rect x="283.29" y="225.65" width="2.71" height="7.5" fill="#e6e6e6" />
<line x1="283.29" y1="225.65" x2="283.29" y2="233.15" stroke="#dadada" stroke-width="0.3" />
<line x1="203.3" y1="233.15" x2="286" y2="233.15" stroke="#dadada" stroke-width="0.3" />
<rect x="153.3" y="225.65" width="50" height="7.5" fill="#ffffff" />
<line x1="153.3" y1="232.8" x2="203.3" y2="232.8" stroke="#5c5c5c" stroke-width="0.85" />
<line x1="153.3" y1="225.75" x2="203.3" y2="225.75" stroke="#aaa" stroke-width="0.3" />
<circle cx="154.8" cy="231.05" r="0.75" fill="#fff" stroke="#222" stroke-width="0.4"/>
<rect x="197.36" y="228.25" width="2" height="3.6" fill="#fff" stroke="#333" stroke-width="0.4"/>
<line x1="199.96" y1="225.65" x2="199.96" y2="233.15" stroke="#444" stroke-width="0.4" />
<circle cx="201.63" cy="230.85" r="1.15" fill="#111"/>
<line x1="203.3" y1="225.65" x2="203.3" y2="233.15" stroke="#555" stroke-width="0.4" />
<rect x="77.2" y="233.15" width="75.8" height="7.5" fill="#ffffff" />
<line x1="77.2" y1="240.65" x2="153" y2="240.65" stroke="#c4c4c4" stroke-width="0.35" />
<path d="M87.4 234.85 h2.4 l1.1 1.1 v3.3 h-3.5z" fill="#f2f4fa" stroke="#2a2a2a" stroke-width="0.6"/>
<path d="M87.2 235.75 q0.6 2.4 3 2.8" stroke="#333" stroke-width="0.7" fill="none"/>
<text x="94.8" y="238.9" font-size="4.85" fill="#2a2a2a" font-family='"Liberation Sans","DejaVu Sans",sans-serif' textLength="8.65" lengthAdjust="spacingAndGlyphs" >som</text>
<rect x="131.9" y="236.45" width="1.5" height="1.5" fill="#111"/>
<rect x="138.4" y="236.25" width="3.8" height="2.9" rx="0.4" fill="#1c1c1c"/><path d="M139.3 236.35 v-1 q1-1.7 2 0 v1" stroke="#1c1c1c" stroke-width="0.7" fill="none"/><rect x="139.9" y="237.05" width="0.8" height="1" fill="#ddd"/>
<rect x="146.9" y="234.45" width="4.5" height="4.7" fill="#9b30d0" stroke="#3a3a55" stroke-width="0.5"/>
<rect x="153" y="233.15" width="133" height="7.5" fill="#ffffff" />
<line x1="203.3" y1="233.15" x2="203.3" y2="240.65" stroke="#dadada" stroke-width="0.3" />
<line x1="206.63" y1="233.15" x2="206.63" y2="240.65" stroke="#dadada" stroke-width="0.3" />
<line x1="209.96" y1="233.15" x2="209.96" y2="240.65" stroke="#dadada" stroke-width="0.3" />
<line x1="213.29" y1="233.15" x2="213.29" y2="240.65" stroke="#dadada" stroke-width="0.3" />
<rect x="216.63" y="233.15" width="3.33" height="7.5" fill="#e6e6e6" />
<line x1="216.63" y1="233.15" x2="216.63" y2="240.65" stroke="#dadada" stroke-width="0.3" />
<line x1="219.96" y1="233.15" x2="219.96" y2="240.65" stroke="#dadada" stroke-width="0.3" />
<line x1="223.29" y1="233.15" x2="223.29" y2="240.65" stroke="#dadada" stroke-width="0.3" />
<line x1="226.63" y1="233.15" x2="226.63" y2="240.65" stroke="#dadada" stroke-width="0.3" />
<line x1="229.96" y1="233.15" x2="229.96" y2="240.65" stroke="#dadada" stroke-width="0.3" />
<rect x="233.29" y="233.15" width="3.33" height="7.5" fill="#e6e6e6" />
<line x1="233.29" y1="233.15" x2="233.29" y2="240.65" stroke="#dadada" stroke-width="0.3" />
<line x1="236.62" y1="233.15" x2="236.62" y2="240.65" stroke="#dadada" stroke-width="0.3" />
<line x1="239.96" y1="233.15" x2="239.96" y2="240.65" stroke="#dadada" stroke-width="0.3" />
<line x1="243.29" y1="233.15" x2="243.29" y2="240.65" stroke="#dadada" stroke-width="0.3" />
<line x1="246.62" y1="233.15" x2="246.62" y2="240.65" stroke="#dadada" stroke-width="0.3" />
<rect x="249.96" y="233.15" width="3.33" height="7.5" fill="#e6e6e6" />
<line x1="249.96" y1="233.15" x2="249.96" y2="240.65" stroke="#dadada" stroke-width="0.3" />
<line x1="253.29" y1="233.15" x2="253.29" y2="240.65" stroke="#dadada" stroke-width="0.3" />
<line x1="256.62" y1="233.15" x2="256.62" y2="240.65" stroke="#dadada" stroke-width="0.3" />
<line x1="259.96" y1="233.15" x2="259.96" y2="240.65" stroke="#dadada" stroke-width="0.3" />
<line x1="263.29" y1="233.15" x2="263.29" y2="240.65" stroke="#dadada" stroke-width="0.3" />
<rect x="266.62" y="233.15" width="3.33" height="7.5" fill="#e6e6e6" />
<line x1="266.62" y1="233.15" x2="266.62" y2="240.65" stroke="#dadada" stroke-width="0.3" />
<line x1="269.96" y1="233.15" x2="269.96" y2="240.65" stroke="#dadada" stroke-width="0.3" />
<line x1="273.29" y1="233.15" x2="273.29" y2="240.65" stroke="#dadada" stroke-width="0.3" />
<line x1="276.62" y1="233.15" x2="276.62" y2="240.65" stroke="#dadada" stroke-width="0.3" />
<line x1="279.95" y1="233.15" x2="279.95" y2="240.65" stroke="#dadada" stroke-width="0.3" />
<rect x="283.29" y="233.15" width="2.71" height="7.5" fill="#e6e6e6" />
<line x1="283.29" y1="233.15" x2="283.29" y2="240.65" stroke="#dadada" stroke-width="0.3" />
<line x1="203.3" y1="240.65" x2="286" y2="240.65" stroke="#dadada" stroke-width="0.3" />
<rect x="153.3" y="233.15" width="50" height="7.5" fill="#cbcbcb" />
<line x1="153.3" y1="240.3" x2="203.3" y2="240.3" stroke="#5c5c5c" stroke-width="0.85" />
<line x1="153.3" y1="233.3" x2="203.3" y2="233.3" stroke="#888" stroke-width="0.4" />
<circle cx="154.9" cy="238.45" r="1.1" fill="#111"/>
<rect x="200.6" y="235.75" width="2" height="3.6" fill="#fff" stroke="#333" stroke-width="0.4"/>
<line x1="203.3" y1="233.15" x2="203.3" y2="240.65" stroke="#555" stroke-width="0.4" />
<rect x="77.2" y="240.65" width="75.8" height="7.5" fill="#ffffff" />
<line x1="77.2" y1="248.15" x2="153" y2="248.15" stroke="#c4c4c4" stroke-width="0.35" />
<path d="M87.4 242.35 h2.4 l1.1 1.1 v3.3 h-3.5z" fill="#f2f4fa" stroke="#2a2a2a" stroke-width="0.6"/>
<path d="M87.2 243.25 q0.6 2.4 3 2.8" stroke="#333" stroke-width="0.7" fill="none"/>
<text x="94.8" y="246.4" font-size="4.85" fill="#2a2a2a" font-family='"Liberation Sans","DejaVu Sans",sans-serif' textLength="25.34" lengthAdjust="spacingAndGlyphs" >barradefu...</text>
<rect x="131.9" y="243.95" width="1.5" height="1.5" fill="#111"/>
<rect x="138.4" y="243.75" width="3.8" height="2.9" rx="0.4" fill="#1c1c1c"/><path d="M139.3 243.85 v-1 q1-1.7 2 0 v1" stroke="#1c1c1c" stroke-width="0.7" fill="none"/><rect x="139.9" y="244.55" width="0.8" height="1" fill="#ddd"/>
<rect x="146.9" y="241.95" width="4.5" height="4.7" fill="#4ff6f6" stroke="#3a3a55" stroke-width="0.5"/>
<rect x="153" y="240.65" width="133" height="7.5" fill="#ffffff" />
<line x1="203.3" y1="240.65" x2="203.3" y2="248.15" stroke="#dadada" stroke-width="0.3" />
<line x1="206.63" y1="240.65" x2="206.63" y2="248.15" stroke="#dadada" stroke-width="0.3" />
<line x1="209.96" y1="240.65" x2="209.96" y2="248.15" stroke="#dadada" stroke-width="0.3" />
<line x1="213.29" y1="240.65" x2="213.29" y2="248.15" stroke="#dadada" stroke-width="0.3" />
<rect x="216.63" y="240.65" width="3.33" height="7.5" fill="#e6e6e6" />
<line x1="216.63" y1="240.65" x2="216.63" y2="248.15" stroke="#dadada" stroke-width="0.3" />
<line x1="219.96" y1="240.65" x2="219.96" y2="248.15" stroke="#dadada" stroke-width="0.3" />
<line x1="223.29" y1="240.65" x2="223.29" y2="248.15" stroke="#dadada" stroke-width="0.3" />
<line x1="226.63" y1="240.65" x2="226.63" y2="248.15" stroke="#dadada" stroke-width="0.3" />
<line x1="229.96" y1="240.65" x2="229.96" y2="248.15" stroke="#dadada" stroke-width="0.3" />
<rect x="233.29" y="240.65" width="3.33" height="7.5" fill="#e6e6e6" />
<line x1="233.29" y1="240.65" x2="233.29" y2="248.15" stroke="#dadada" stroke-width="0.3" />
<line x1="236.62" y1="240.65" x2="236.62" y2="248.15" stroke="#dadada" stroke-width="0.3" />
<line x1="239.96" y1="240.65" x2="239.96" y2="248.15" stroke="#dadada" stroke-width="0.3" />
<line x1="243.29" y1="240.65" x2="243.29" y2="248.15" stroke="#dadada" stroke-width="0.3" />
<line x1="246.62" y1="240.65" x2="246.62" y2="248.15" stroke="#dadada" stroke-width="0.3" />
<rect x="249.96" y="240.65" width="3.33" height="7.5" fill="#e6e6e6" />
<line x1="249.96" y1="240.65" x2="249.96" y2="248.15" stroke="#dadada" stroke-width="0.3" />
<line x1="253.29" y1="240.65" x2="253.29" y2="248.15" stroke="#dadada" stroke-width="0.3" />
<line x1="256.62" y1="240.65" x2="256.62" y2="248.15" stroke="#dadada" stroke-width="0.3" />
<line x1="259.96" y1="240.65" x2="259.96" y2="248.15" stroke="#dadada" stroke-width="0.3" />
<line x1="263.29" y1="240.65" x2="263.29" y2="248.15" stroke="#dadada" stroke-width="0.3" />
<rect x="266.62" y="240.65" width="3.33" height="7.5" fill="#e6e6e6" />
<line x1="266.62" y1="240.65" x2="266.62" y2="248.15" stroke="#dadada" stroke-width="0.3" />
<line x1="269.96" y1="240.65" x2="269.96" y2="248.15" stroke="#dadada" stroke-width="0.3" />
<line x1="273.29" y1="240.65" x2="273.29" y2="248.15" stroke="#dadada" stroke-width="0.3" />
<line x1="276.62" y1="240.65" x2="276.62" y2="248.15" stroke="#dadada" stroke-width="0.3" />
<line x1="279.95" y1="240.65" x2="279.95" y2="248.15" stroke="#dadada" stroke-width="0.3" />
<rect x="283.29" y="240.65" width="2.71" height="7.5" fill="#e6e6e6" />
<line x1="283.29" y1="240.65" x2="283.29" y2="248.15" stroke="#dadada" stroke-width="0.3" />
<line x1="203.3" y1="248.15" x2="286" y2="248.15" stroke="#dadada" stroke-width="0.3" />
<rect x="153.3" y="240.65" width="50" height="7.5" fill="#cbcbcb" />
<line x1="153.3" y1="247.8" x2="203.3" y2="247.8" stroke="#5c5c5c" stroke-width="0.85" />
<line x1="153.3" y1="240.8" x2="203.3" y2="240.8" stroke="#888" stroke-width="0.4" />
<circle cx="154.9" cy="245.95" r="1.1" fill="#111"/>
<rect x="200.6" y="243.25" width="2" height="3.6" fill="#fff" stroke="#333" stroke-width="0.4"/>
<line x1="203.3" y1="240.65" x2="203.3" y2="248.15" stroke="#555" stroke-width="0.4" />
<line x1="153" y1="172.7" x2="153" y2="259.4" stroke="#8a8a8a" stroke-width="0.5" />
<rect x="77.2" y="248.15" width="75.8" height="11.25" fill="#e2e2e2" />
<rect x="153" y="248.15" width="133" height="11.25" fill="#f0f0f0" />
<rect x="286" y="172.7" width="5.8" height="86.7" fill="#dcdcdc" />
<rect x="286.6" y="173.4" width="4.6" height="80" rx="0.6" fill="#f4f4f4" stroke="#8a8a8a" stroke-width="0.4"/>
<path d="M288 176.6l0.9-1.3l0.9 1.3z" fill="#333"/><path d="M288 252l0.9 1.3l0.9-1.3z" fill="#333"/>
<rect x="199.9" y="163.6" width="3.5" height="8.6" rx="0.6" fill="#ff9a9a" fill-opacity="0.75" stroke="#e02020" stroke-width="0.6"/>
<text x="202.1" y="169.5" font-size="5" fill="#8a2a2a" font-family='"Liberation Sans","DejaVu Sans",sans-serif' text-anchor="middle" >15</text>
<line x1="201.65" y1="172" x2="201.65" y2="260" stroke="#e02828" stroke-width="0.5" />
<rect x="77.2" y="259.4" width="214.6" height="8.2" fill="url(#g16)" />
<rect x="153" y="259.4" width="138.8" height="8.2" fill="url(#g17)" />
<line x1="77.2" y1="259.4" x2="291.8" y2="259.4" stroke="#b0b0b0" stroke-width="0.4" />
<path d="M82.6 261.6h2.6l1 1v3h-3.6z" fill="#f8f8f8" stroke="#222" stroke-width="0.55"/><path d="M82.4 265.8h3.8" stroke="#222" stroke-width="0.6"/>
<path d="M90.4 262.2h1.5l0.5 0.7h2.3v2.8h-4.3z" fill="#f4f4f4" stroke="#222" stroke-width="0.55"/>
<path d="M98.6 262.4h3l-0.3 3.4h-2.4z" fill="#bbb" stroke="#222" stroke-width="0.55"/><path d="M98.2 262h3.800" stroke="#222" stroke-width="0.6"/>
<line x1="153" y1="259.4" x2="153" y2="267.6" stroke="#9e9e9e" stroke-width="0.4" />
<rect x="156.7" y="261.4" width="0.9" height="3.8" fill="#e03030"/>
<rect x="162.4" y="261.6" width="2.4" height="2.6" fill="#b9c8f4" stroke="#3a4cb0" stroke-width="0.4"/><rect x="163.6" y="262.6" width="2.4" height="2.6" fill="#8ea4ec" stroke="#3a4cb0" stroke-width="0.4"/>
<rect x="169.6" y="261.6" width="2.4" height="2.6" fill="#b9c8f4" stroke="#3a4cb0" stroke-width="0.4"/><rect x="170.8" y="262.6" width="2.4" height="2.6" fill="#8ea4ec" stroke="#3a4cb0" stroke-width="0.4"/>
<rect x="176.6" y="261.6" width="2.4" height="2.6" fill="#b9c8f4" stroke="#3a4cb0" stroke-width="0.4"/><rect x="177.8" y="262.6" width="2.4" height="2.6" fill="#8ea4ec" stroke="#3a4cb0" stroke-width="0.4"/>
<path d="M183.6 261.4h-0.8v3.8h0.8M186 261.4h0.8v3.8h-0.8" stroke="#333" stroke-width="0.45" fill="none"/><rect x="184" y="262.4" width="1.6" height="1.8" fill="#555"/>
<text x="190.6" y="265" font-size="3.9" fill="#2a5fb8" font-family='"Liberation Sans","DejaVu Sans",sans-serif' textLength="4.2" lengthAdjust="spacingAndGlyphs" >15</text>
<line x1="190.6" y1="265.6" x2="194.8" y2="265.6" stroke="#2a5fb8" stroke-width="0.3" />
<text x="206.4" y="265" font-size="3.9" fill="#2a5fb8" font-family='"Liberation Sans","DejaVu Sans",sans-serif' textLength="10" lengthAdjust="spacingAndGlyphs" >12,00</text>
<line x1="206.4" y1="265.6" x2="216.4" y2="265.6" stroke="#2a5fb8" stroke-width="0.3" />
<text x="217.6" y="265" font-size="3.9" fill="#333" font-family='"Liberation Sans","DejaVu Sans",sans-serif' textLength="5" lengthAdjust="spacingAndGlyphs" >fps</text>
<text x="227.2" y="265" font-size="3.9" fill="#2a5fb8" font-family='"Liberation Sans","DejaVu Sans",sans-serif' textLength="5.6" lengthAdjust="spacingAndGlyphs" >1,2</text>
<line x1="227.2" y1="265.6" x2="232.8" y2="265.6" stroke="#2a5fb8" stroke-width="0.3" />
<text x="233.8" y="265" font-size="3.9" fill="#333" font-family='"Liberation Sans","DejaVu Sans",sans-serif' >s</text>
<rect x="240.6" y="260.5" width="45.4" height="4.8" fill="#c6c6c6" stroke="#8a8a8a" stroke-width="0.4"/>
<rect x="240.8" y="260.7" width="5.6" height="4.4" fill="#e6e6e6" />
<rect x="281.4" y="260.7" width="4.4" height="4.4" fill="#e6e6e6" />
<rect x="246.6" y="260.7" width="6" height="4.4" fill="#efefef" stroke="#9a9a9a" stroke-width="0.35"/>
<line x1="246.5" y1="260.5" x2="246.5" y2="265.3" stroke="#8a8a8a" stroke-width="0.35" />
<line x1="281.3" y1="260.5" x2="281.3" y2="265.3" stroke="#8a8a8a" stroke-width="0.35" />
<path d="M244.4 261.6v2.6l-1.800-1.300z" fill="#111"/><path d="M282.800 261.600v2.600l1.800-1.300z" fill="#111"/>
<path d="M77.2 156 V267.6 H291.8 V156" fill="none" stroke="#6e6e6e" stroke-width="0.5"/>
<rect x="341.3" y="8.8" width="429.7" height="441.2" fill="#e6e6e6" />
<rect x="341.3" y="8.8" width="429.7" height="4.6" fill="url(#g18)" />
<rect x="343.2" y="10.8" width="1.5" height="1.5" rx="0.3" fill="#bdbdbd"/>
<path d="M766.2 10.6l1.1 0.9l-1.1 0.9zM767.7 10.6l1.1 0.9l-1.1 0.9z" fill="#d0d0d0"/>
<rect x="341.3" y="13.4" width="429.7" height="8.2" fill="url(#g19)" />
<rect x="342.4" y="15.4" width="42.6" height="6.4" fill="url(#g20)" />
<text x="344.7" y="20.2" font-size="3.6" fill="#2a2a2a" font-family='"Liberation Sans","DejaVu Sans",sans-serif' font-weight="bold" textLength="38.4" lengthAdjust="spacingAndGlyphs" >ACTIONS – BUTTON</text>
<path d="M763.6 17.2h1.7l-0.85 1.2z" fill="#1a1a1a"/><path d="M766 16.6h2.6M766 17.8h2.6M766 19h2.6" stroke="#2a2a2a" stroke-width="0.5"/>
<rect x="342" y="21.8" width="428.6" height="11.2" fill="#e6e6e6" />
<rect x="345.2" y="25.2" width="76.4" height="6.8" rx="1.2" fill="url(#g21)" stroke="#8e8e8e" stroke-width="0.45"/>
<path d="M415.4 25.2h5q1.2 0 1.2 1.2v4.4q0 1.2-1.2 1.2h-5z" fill="url(#g22)" stroke="#3a5ca8" stroke-width="0.4"/>
<path d="M417.4 27.9l1.1-1.3l1.1 1.3zM417.4 29.3l1.1 1.3l1.1-1.3z" fill="#10204a"/>
<text x="348" y="30.5" font-size="4.8" fill="#1a1a1a" font-family='"Liberation Sans","DejaVu Sans",sans-serif' textLength="48.8" lengthAdjust="spacingAndGlyphs" >ActionScript 1.0 &amp; 2.0</text>
<rect x="344.4" y="32.8" width="71.8" height="106.8" fill="#ffffff" />
<path d="M349.4 34.8 h2.2 v5 h-2.2z" fill="#5a78c8" stroke="#2a3a70" stroke-width="0.35"/><path d="M351.6 34.6 h3 v5 h-3z" fill="#f2f2f2" stroke="#444" stroke-width="0.4"/>
<text x="360" y="39.05" font-size="4.5" fill="#151515" font-family='"Liberation Sans","DejaVu Sans",sans-serif' textLength="36.6" lengthAdjust="spacingAndGlyphs" >Global Functions</text>
<path d="M358 42.3 h2.2 v5 h-2.2z" fill="#5a78c8" stroke="#2a3a70" stroke-width="0.35"/><path d="M360.2 42.1 h3 v5 h-3z" fill="#f2f2f2" stroke="#444" stroke-width="0.4"/>
<text x="368.6" y="46.55" font-size="4.5" fill="#151515" font-family='"Liberation Sans","DejaVu Sans",sans-serif' textLength="41.6" lengthAdjust="spacingAndGlyphs" >Movie Clip Control</text>
<circle cx="370.6" cy="52.4" r="2.5" fill="#4468c8" stroke="#1a2f78" stroke-width="0.5"/><path d="M369.6 53.4 l2-2 m0 1.4 v-1.4 h-1.4" stroke="#fff" stroke-width="0.6" fill="none"/>
<text x="376.9" y="54.05" font-size="4.5" fill="#151515" font-family='"Liberation Sans","DejaVu Sans",sans-serif' textLength="34" lengthAdjust="spacingAndGlyphs" >duplicateMovie</text>
<circle cx="370.6" cy="59.9" r="2.5" fill="#4468c8" stroke="#1a2f78" stroke-width="0.5"/><path d="M369.6 60.9 l2-2 m0 1.4 v-1.4 h-1.4" stroke="#fff" stroke-width="0.6" fill="none"/>
<text x="376.9" y="61.55" font-size="4.5" fill="#151515" font-family='"Liberation Sans","DejaVu Sans",sans-serif' textLength="25.2" lengthAdjust="spacingAndGlyphs" >getProperty</text>
<circle cx="370.6" cy="67.4" r="2.5" fill="#4468c8" stroke="#1a2f78" stroke-width="0.5"/><path d="M369.6 68.4 l2-2 m0 1.4 v-1.4 h-1.4" stroke="#fff" stroke-width="0.6" fill="none"/>
<text x="376.9" y="69.05" font-size="4.5" fill="#151515" font-family='"Liberation Sans","DejaVu Sans",sans-serif' textLength="5.4" lengthAdjust="spacingAndGlyphs" >on</text>
<circle cx="370.6" cy="74.9" r="2.5" fill="#4468c8" stroke="#1a2f78" stroke-width="0.5"/><path d="M369.6 75.9 l2-2 m0 1.4 v-1.4 h-1.4" stroke="#fff" stroke-width="0.6" fill="none"/>
<text x="376.9" y="76.55" font-size="4.5" fill="#151515" font-family='"Liberation Sans","DejaVu Sans",sans-serif' textLength="26.2" lengthAdjust="spacingAndGlyphs" >onClipEvent</text>
<circle cx="370.6" cy="82.4" r="2.5" fill="#4468c8" stroke="#1a2f78" stroke-width="0.5"/><path d="M369.6 83.4 l2-2 m0 1.4 v-1.4 h-1.4" stroke="#fff" stroke-width="0.6" fill="none"/>
<text x="376.9" y="84.05" font-size="4.5" fill="#151515" font-family='"Liberation Sans","DejaVu Sans",sans-serif' textLength="34.4" lengthAdjust="spacingAndGlyphs" >removeMovieCl</text>
<circle cx="370.6" cy="89.9" r="2.5" fill="#4468c8" stroke="#1a2f78" stroke-width="0.5"/><path d="M369.6 90.9 l2-2 m0 1.4 v-1.4 h-1.4" stroke="#fff" stroke-width="0.6" fill="none"/>
<text x="376.9" y="91.55" font-size="4.5" fill="#151515" font-family='"Liberation Sans","DejaVu Sans",sans-serif' textLength="25.4" lengthAdjust="spacingAndGlyphs" >setProperty</text>
<circle cx="370.6" cy="97.4" r="2.5" fill="#4468c8" stroke="#1a2f78" stroke-width="0.5"/><path d="M369.6 98.4 l2-2 m0 1.4 v-1.4 h-1.4" stroke="#fff" stroke-width="0.6" fill="none"/>
<text x="376.9" y="99.05" font-size="4.5" fill="#151515" font-family='"Liberation Sans","DejaVu Sans",sans-serif' textLength="21.2" lengthAdjust="spacingAndGlyphs" >startDrag</text>
<circle cx="370.6" cy="104.9" r="2.5" fill="#4468c8" stroke="#1a2f78" stroke-width="0.5"/><path d="M369.6 105.9 l2-2 m0 1.4 v-1.4 h-1.4" stroke="#fff" stroke-width="0.6" fill="none"/>
<text x="376.9" y="106.55" font-size="4.5" fill="#151515" font-family='"Liberation Sans","DejaVu Sans",sans-serif' textLength="20.4" lengthAdjust="spacingAndGlyphs" >stopDrag</text>
<circle cx="370.6" cy="112.4" r="2.5" fill="#4468c8" stroke="#1a2f78" stroke-width="0.5"/><path d="M369.6 113.4 l2-2 m0 1.4 v-1.4 h-1.4" stroke="#fff" stroke-width="0.6" fill="none"/>
<text x="376.9" y="114.05" font-size="4.5" fill="#151515" font-family='"Liberation Sans","DejaVu Sans",sans-serif' textLength="23.6" lengthAdjust="spacingAndGlyphs" >targetPath</text>
<circle cx="370.6" cy="119.9" r="2.5" fill="#4468c8" stroke="#1a2f78" stroke-width="0.5"/><path d="M369.6 120.9 l2-2 m0 1.4 v-1.4 h-1.4" stroke="#fff" stroke-width="0.6" fill="none"/>
<text x="376.9" y="121.55" font-size="4.5" fill="#151515" font-family='"Liberation Sans","DejaVu Sans",sans-serif' textLength="34.2" lengthAdjust="spacingAndGlyphs" >updateAfterEve</text>
<path d="M358 124.8 h2.2 v5 h-2.2z" fill="#5a78c8" stroke="#2a3a70" stroke-width="0.35"/><path d="M360.2 124.6 h3 v5 h-3z" fill="#f2f2f2" stroke="#444" stroke-width="0.4"/>
<text x="368.6" y="129.05" font-size="4.5" fill="#151515" font-family='"Liberation Sans","DejaVu Sans",sans-serif' textLength="36.6" lengthAdjust="spacingAndGlyphs" >Timeline Control</text>
<circle cx="370.6" cy="134.9" r="2.5" fill="#4468c8" stroke="#1a2f78" stroke-width="0.5"/><path d="M369.6 135.9 l2-2 m0 1.4 v-1.4 h-1.4" stroke="#fff" stroke-width="0.6" fill="none"/>
<text x="376.9" y="136.55" font-size="4.5" fill="#151515" font-family='"Liberation Sans","DejaVu Sans",sans-serif' textLength="28" lengthAdjust="spacingAndGlyphs" >gotoAndPlay</text>
<rect x="416.2" y="32.8" width="6.2" height="106.8" fill="#f2f2f2" />
<line x1="416.2" y1="32.8" x2="416.2" y2="139.6" stroke="#b8b8b8" stroke-width="0.35" />
<rect x="416.9" y="35" width="4.6" height="91" rx="2.2" fill="#f7f7f7" stroke="#b4b4b4" stroke-width="0.4"/>
<rect x="416.8" y="36.6" width="4.8" height="30.8" rx="2.2" fill="url(#g23)" stroke="#858585" stroke-width="0.5"/>
<rect x="416.4" y="126.4" width="5.9" height="13" fill="#f4f4f4" />
<line x1="416.4" y1="126.4" x2="422.3" y2="126.4" stroke="#a8a8a8" stroke-width="0.35" />
<line x1="416.4" y1="133" x2="422.3" y2="133" stroke="#a8a8a8" stroke-width="0.35" />
<path d="M418.2 130.6l1.1-1.6l1.1 1.6zM418.2 135.4l1.1 1.6l1.1-1.6z" fill="#222"/>
<rect x="343.4" y="32.6" width="79" height="0.4" fill="#9a9a9a" />
<rect x="343" y="139.6" width="79.6" height="4.2" fill="#e0e0e0" />
<line x1="343" y1="139.7" x2="422.6" y2="139.7" stroke="#aaaaaa" stroke-width="0.4" />
<line x1="343" y1="143.8" x2="422.6" y2="143.8" stroke="#a0a0a0" stroke-width="0.4" />
<rect x="376.8" y="139.9" width="13.2" height="3.2" rx="1.4" fill="#fafafa" stroke="#9a9a9a" stroke-width="0.35"/><path d="M382.6 142.4l0.9-1.4l0.9 1.4z" fill="#333"/>
<rect x="344.4" y="144" width="71.8" height="302.2" fill="#ffffff" />
<rect x="378.6" y="145.6" width="3.6" height="5.6" rx="0.3" fill="#fcfcfc" stroke="#222" stroke-width="0.5"/><rect x="379.3" y="148.2" width="2.2" height="1.6" fill="#333"/><path d="M379.3 146.8h2.2" stroke="#777" stroke-width="0.4"/>
<text x="386.2" y="150.2" font-size="4.55" fill="#151515" font-family='"Liberation Sans","DejaVu Sans",sans-serif' textLength="32.5" lengthAdjust="spacingAndGlyphs" >Actions : Fran</text>
<rect x="378.6" y="153.11" width="3.6" height="5.6" rx="0.3" fill="#fcfcfc" stroke="#222" stroke-width="0.5"/><rect x="379.3" y="155.71" width="2.2" height="1.6" fill="#333"/><path d="M379.3 154.31h2.2" stroke="#777" stroke-width="0.4"/>
<text x="386.2" y="157.71" font-size="4.55" fill="#151515" font-family='"Liberation Sans","DejaVu Sans",sans-serif' textLength="32.5" lengthAdjust="spacingAndGlyphs" >Actions : Fran</text>
<rect x="378.6" y="160.62" width="3.6" height="5.6" rx="0.3" fill="#fcfcfc" stroke="#222" stroke-width="0.5"/><rect x="379.3" y="163.22" width="2.2" height="1.6" fill="#333"/><path d="M379.3 161.82h2.2" stroke="#777" stroke-width="0.4"/>
<text x="386.2" y="165.22" font-size="4.55" fill="#151515" font-family='"Liberation Sans","DejaVu Sans",sans-serif' textLength="32.5" lengthAdjust="spacingAndGlyphs" >Actions : Fran</text>
<rect x="377.2" y="170.03" width="6.4" height="4.2" rx="1.5" fill="#fdfdff" stroke="#5459cc" stroke-width="0.6"/>
<path d="M377.9 167.53 h4.3 l-0.3 1.5 h-2.2 l-0.2 2 h-1.6z" fill="#d48c2a" stroke="#7a4a10" stroke-width="0.25"/>
<circle cx="377.7" cy="173.23" r="0.55" fill="#f0821a"/>
<text x="386.2" y="172.73" font-size="4.55" fill="#151515" font-family='"Liberation Sans","DejaVu Sans",sans-serif' textLength="12.8" lengthAdjust="spacingAndGlyphs" >entrar</text>
<path d="M358.6 177.34 h3.4 l-1.7 2.6z" fill="#8e8e8e"/>
<rect x="367.4" y="175.44" width="6" height="6" rx="0.5" fill="#5a58c4" stroke="#8a88e0" stroke-width="0.4"/><rect x="368.2" y="176.24" width="4.4" height="4.4" fill="#d9d9f6"/>
<path d="M369 177.04 l2.6 2.6 m0-1.6 v1.6 h-1.6" stroke="#2c2a98" stroke-width="0.7" fill="none"/><circle cx="369.4" cy="177.44" r="0.8" fill="#2c2a98"/>
<text x="376.4" y="180.24" font-size="4.55" fill="#151515" font-family='"Liberation Sans","DejaVu Sans",sans-serif' textLength="11.6" lengthAdjust="spacingAndGlyphs" >menu</text>
<rect x="378.6" y="183.15" width="3.6" height="5.6" rx="0.3" fill="#fcfcfc" stroke="#222" stroke-width="0.5"/><rect x="379.3" y="185.75" width="2.2" height="1.6" fill="#333"/><path d="M379.3 184.35h2.2" stroke="#777" stroke-width="0.4"/>
<text x="386.2" y="187.75" font-size="4.55" fill="#151515" font-family='"Liberation Sans","DejaVu Sans",sans-serif' textLength="32.5" lengthAdjust="spacingAndGlyphs" >Actions : Fran</text>
<rect x="377.2" y="192.57" width="6.4" height="4.2" rx="1.5" fill="#fdfdff" stroke="#5459cc" stroke-width="0.6"/>
<path d="M377.9 190.07 h4.3 l-0.3 1.5 h-2.2 l-0.2 2 h-1.6z" fill="#d48c2a" stroke="#7a4a10" stroke-width="0.25"/>
<circle cx="377.7" cy="195.77" r="0.55" fill="#f0821a"/>
<text x="386.2" y="195.27" font-size="4.55" fill="#151515" font-family='"Liberation Sans","DejaVu Sans",sans-serif' textLength="29.8" lengthAdjust="spacingAndGlyphs" >som_on_butt</text>
<rect x="377.2" y="200.08" width="6.4" height="4.2" rx="1.5" fill="#fdfdff" stroke="#5459cc" stroke-width="0.6"/>
<path d="M377.9 197.58 h4.3 l-0.3 1.5 h-2.2 l-0.2 2 h-1.6z" fill="#d48c2a" stroke="#7a4a10" stroke-width="0.25"/>
<circle cx="377.7" cy="203.28" r="0.55" fill="#f0821a"/>
<text x="386.2" y="202.78" font-size="4.55" fill="#151515" font-family='"Liberation Sans","DejaVu Sans",sans-serif' textLength="28.8" lengthAdjust="spacingAndGlyphs" >som_off_butt</text>
<rect x="377.2" y="207.59" width="6.4" height="4.2" rx="1.5" fill="#fdfdff" stroke="#5459cc" stroke-width="0.6"/>
<path d="M377.9 205.09 h4.3 l-0.3 1.5 h-2.2 l-0.2 2 h-1.6z" fill="#d48c2a" stroke="#7a4a10" stroke-width="0.25"/>
<circle cx="377.7" cy="210.79" r="0.55" fill="#f0821a"/>
<text x="386.2" y="210.29" font-size="4.55" fill="#151515" font-family='"Liberation Sans","DejaVu Sans",sans-serif' textLength="18.6" lengthAdjust="spacingAndGlyphs" >contacto</text>
<rect x="377.2" y="215.1" width="6.4" height="4.2" rx="1.5" fill="#fdfdff" stroke="#5459cc" stroke-width="0.6"/>
<path d="M377.9 212.6 h4.3 l-0.3 1.5 h-2.2 l-0.2 2 h-1.6z" fill="#d48c2a" stroke="#7a4a10" stroke-width="0.25"/>
<circle cx="377.7" cy="218.3" r="0.55" fill="#f0821a"/>
<text x="386.2" y="217.8" font-size="4.55" fill="#151515" font-family='"Liberation Sans","DejaVu Sans",sans-serif' textLength="11.6" lengthAdjust="spacingAndGlyphs" >video</text>
<rect x="377.2" y="222.61" width="6.4" height="4.2" rx="1.5" fill="#fdfdff" stroke="#5459cc" stroke-width="0.6"/>
<path d="M377.9 220.11 h4.3 l-0.3 1.5 h-2.2 l-0.2 2 h-1.6z" fill="#d48c2a" stroke="#7a4a10" stroke-width="0.25"/>
<circle cx="377.7" cy="225.81" r="0.55" fill="#f0821a"/>
<text x="386.2" y="225.31" font-size="4.55" fill="#151515" font-family='"Liberation Sans","DejaVu Sans",sans-serif' textLength="14.2" lengthAdjust="spacingAndGlyphs" >musica</text>
<rect x="377.2" y="230.12" width="6.4" height="4.2" rx="1.5" fill="#fdfdff" stroke="#5459cc" stroke-width="0.6"/>
<path d="M377.9 227.62 h4.3 l-0.3 1.5 h-2.2 l-0.2 2 h-1.6z" fill="#d48c2a" stroke="#7a4a10" stroke-width="0.25"/>
<circle cx="377.7" cy="233.32" r="0.55" fill="#f0821a"/>
<text x="386.2" y="232.82" font-size="4.55" fill="#151515" font-family='"Liberation Sans","DejaVu Sans",sans-serif' textLength="22.4" lengthAdjust="spacingAndGlyphs" >novidades</text>
<path d="M358.6 237.43 h3.4 l-1.7 2.6z" fill="#8e8e8e"/>
<rect x="367.4" y="235.53" width="6" height="6" rx="0.5" fill="#5a58c4" stroke="#8a88e0" stroke-width="0.4"/><rect x="368.2" y="236.33" width="4.4" height="4.4" fill="#d9d9f6"/>
<path d="M369 237.13 l2.6 2.6 m0-1.6 v1.6 h-1.6" stroke="#2c2a98" stroke-width="0.7" fill="none"/><circle cx="369.4" cy="237.53" r="0.8" fill="#2c2a98"/>
<text x="376.4" y="240.33" font-size="4.55" fill="#151515" font-family='"Liberation Sans","DejaVu Sans",sans-serif' textLength="16.4" lengthAdjust="spacingAndGlyphs" >noticias</text>
<rect x="378.6" y="243.24" width="3.6" height="5.6" rx="0.3" fill="#fcfcfc" stroke="#222" stroke-width="0.5"/><rect x="379.3" y="245.84" width="2.2" height="1.6" fill="#333"/><path d="M379.3 244.44h2.2" stroke="#777" stroke-width="0.4"/>
<text x="386.2" y="247.84" font-size="4.55" fill="#151515" font-family='"Liberation Sans","DejaVu Sans",sans-serif' textLength="32.5" lengthAdjust="spacingAndGlyphs" >Actions : Fran</text>
<rect x="377.2" y="252.65" width="6.4" height="4.2" rx="1.5" fill="#fdfdff" stroke="#5459cc" stroke-width="0.6"/>
<path d="M377.9 250.15 h4.3 l-0.3 1.5 h-2.2 l-0.2 2 h-1.6z" fill="#d48c2a" stroke="#7a4a10" stroke-width="0.25"/>
<circle cx="377.7" cy="255.85" r="0.55" fill="#f0821a"/>
<text x="386.2" y="255.35" font-size="4.55" fill="#151515" font-family='"Liberation Sans","DejaVu Sans",sans-serif' textLength="11.8" lengthAdjust="spacingAndGlyphs" >verde</text>
<rect x="377.2" y="260.17" width="6.4" height="4.2" rx="1.5" fill="#fdfdff" stroke="#5459cc" stroke-width="0.6"/>
<path d="M377.9 257.67 h4.3 l-0.3 1.5 h-2.2 l-0.2 2 h-1.6z" fill="#d48c2a" stroke="#7a4a10" stroke-width="0.25"/>
<circle cx="377.7" cy="263.37" r="0.55" fill="#f0821a"/>
<text x="386.2" y="262.87" font-size="4.55" fill="#151515" font-family='"Liberation Sans","DejaVu Sans",sans-serif' textLength="11.8" lengthAdjust="spacingAndGlyphs" >verde</text>
<rect x="377.2" y="267.68" width="6.4" height="4.2" rx="1.5" fill="#fdfdff" stroke="#5459cc" stroke-width="0.6"/>
<path d="M377.9 265.18 h4.3 l-0.3 1.5 h-2.2 l-0.2 2 h-1.6z" fill="#d48c2a" stroke="#7a4a10" stroke-width="0.25"/>
<circle cx="377.7" cy="270.88" r="0.55" fill="#f0821a"/>
<text x="386.2" y="270.38" font-size="4.55" fill="#151515" font-family='"Liberation Sans","DejaVu Sans",sans-serif' textLength="11.6" lengthAdjust="spacingAndGlyphs" >menu</text>
<rect x="377.2" y="275.19" width="6.4" height="4.2" rx="1.5" fill="#fdfdff" stroke="#5459cc" stroke-width="0.6"/>
<path d="M377.9 272.69 h4.3 l-0.3 1.5 h-2.2 l-0.2 2 h-1.6z" fill="#d48c2a" stroke="#7a4a10" stroke-width="0.25"/>
<circle cx="377.7" cy="278.39" r="0.55" fill="#f0821a"/>
<text x="386.2" y="277.89" font-size="4.55" fill="#151515" font-family='"Liberation Sans","DejaVu Sans",sans-serif' textLength="29.8" lengthAdjust="spacingAndGlyphs" >som_on_butt</text>
<rect x="377.2" y="282.7" width="6.4" height="4.2" rx="1.5" fill="#fdfdff" stroke="#5459cc" stroke-width="0.6"/>
<path d="M377.9 280.2 h4.3 l-0.3 1.5 h-2.2 l-0.2 2 h-1.6z" fill="#d48c2a" stroke="#7a4a10" stroke-width="0.25"/>
<circle cx="377.7" cy="285.9" r="0.55" fill="#f0821a"/>
<text x="386.2" y="285.4" font-size="4.55" fill="#151515" font-family='"Liberation Sans","DejaVu Sans",sans-serif' textLength="28.8" lengthAdjust="spacingAndGlyphs" >som_off_butt</text>
<path d="M358.6 290.01 h3.4 l-1.7 2.6z" fill="#8e8e8e"/>
<rect x="367.4" y="288.11" width="6" height="6" rx="0.5" fill="#5a58c4" stroke="#8a88e0" stroke-width="0.4"/><rect x="368.2" y="288.91" width="4.4" height="4.4" fill="#d9d9f6"/>
<path d="M369 289.71 l2.6 2.6 m0-1.6 v1.6 h-1.6" stroke="#2c2a98" stroke-width="0.7" fill="none"/><circle cx="369.4" cy="290.11" r="0.8" fill="#2c2a98"/>
<text x="376.4" y="292.91" font-size="4.55" fill="#151515" font-family='"Liberation Sans","DejaVu Sans",sans-serif' textLength="14.2" lengthAdjust="spacingAndGlyphs" >musica</text>
<rect x="378.6" y="295.82" width="3.6" height="5.6" rx="0.3" fill="#fcfcfc" stroke="#222" stroke-width="0.5"/><rect x="379.3" y="298.42" width="2.2" height="1.6" fill="#333"/><path d="M379.3 297.02h2.2" stroke="#777" stroke-width="0.4"/>
<text x="386.2" y="300.42" font-size="4.55" fill="#151515" font-family='"Liberation Sans","DejaVu Sans",sans-serif' textLength="32.5" lengthAdjust="spacingAndGlyphs" >Actions : Fran</text>
<rect x="377.2" y="305.23" width="6.4" height="4.2" rx="1.5" fill="#fdfdff" stroke="#5459cc" stroke-width="0.6"/>
<path d="M377.9 302.73 h4.3 l-0.3 1.5 h-2.2 l-0.2 2 h-1.6z" fill="#d48c2a" stroke="#7a4a10" stroke-width="0.25"/>
<circle cx="377.7" cy="308.43" r="0.55" fill="#f0821a"/>
<text x="386.2" y="307.93" font-size="4.55" fill="#151515" font-family='"Liberation Sans","DejaVu Sans",sans-serif' textLength="19.4" lengthAdjust="spacingAndGlyphs" >musica_3</text>
<rect x="377.2" y="312.74" width="6.4" height="4.2" rx="1.5" fill="#fdfdff" stroke="#5459cc" stroke-width="0.6"/>
<path d="M377.9 310.24 h4.3 l-0.3 1.5 h-2.2 l-0.2 2 h-1.6z" fill="#d48c2a" stroke="#7a4a10" stroke-width="0.25"/>
<circle cx="377.7" cy="315.94" r="0.55" fill="#f0821a"/>
<text x="386.2" y="315.44" font-size="4.55" fill="#151515" font-family='"Liberation Sans","DejaVu Sans",sans-serif' textLength="19.4" lengthAdjust="spacingAndGlyphs" >musica_2</text>
<rect x="377.2" y="320.25" width="6.4" height="4.2" rx="1.5" fill="#fdfdff" stroke="#5459cc" stroke-width="0.6"/>
<path d="M377.9 317.75 h4.3 l-0.3 1.5 h-2.2 l-0.2 2 h-1.6z" fill="#d48c2a" stroke="#7a4a10" stroke-width="0.25"/>
<circle cx="377.7" cy="323.45" r="0.55" fill="#f0821a"/>
<text x="386.2" y="322.95" font-size="4.55" fill="#151515" font-family='"Liberation Sans","DejaVu Sans",sans-serif' textLength="19.4" lengthAdjust="spacingAndGlyphs" >musica_1</text>
<rect x="377.2" y="327.76" width="6.4" height="4.2" rx="1.5" fill="#fdfdff" stroke="#5459cc" stroke-width="0.6"/>
<path d="M377.9 325.26 h4.3 l-0.3 1.5 h-2.2 l-0.2 2 h-1.6z" fill="#d48c2a" stroke="#7a4a10" stroke-width="0.25"/>
<circle cx="377.7" cy="330.96" r="0.55" fill="#f0821a"/>
<text x="386.2" y="330.46" font-size="4.55" fill="#151515" font-family='"Liberation Sans","DejaVu Sans",sans-serif' textLength="16.8" lengthAdjust="spacingAndGlyphs" >amarelo</text>
<rect x="377.2" y="335.28" width="6.4" height="4.2" rx="1.5" fill="#fdfdff" stroke="#5459cc" stroke-width="0.6"/>
<path d="M377.9 332.78 h4.3 l-0.3 1.5 h-2.2 l-0.2 2 h-1.6z" fill="#d48c2a" stroke="#7a4a10" stroke-width="0.25"/>
<circle cx="377.7" cy="338.48" r="0.55" fill="#f0821a"/>
<text x="386.2" y="337.98" font-size="4.55" fill="#151515" font-family='"Liberation Sans","DejaVu Sans",sans-serif' textLength="11.6" lengthAdjust="spacingAndGlyphs" >menu</text>
<rect x="377.2" y="342.79" width="6.4" height="4.2" rx="1.5" fill="#fdfdff" stroke="#5459cc" stroke-width="0.6"/>
<path d="M377.9 340.29 h4.3 l-0.3 1.5 h-2.2 l-0.2 2 h-1.6z" fill="#d48c2a" stroke="#7a4a10" stroke-width="0.25"/>
<circle cx="377.7" cy="345.99" r="0.55" fill="#f0821a"/>
<text x="386.2" y="345.49" font-size="4.55" fill="#151515" font-family='"Liberation Sans","DejaVu Sans",sans-serif' textLength="29.8" lengthAdjust="spacingAndGlyphs" >som_on_butt</text>
<rect x="377.2" y="350.3" width="6.4" height="4.2" rx="1.5" fill="#fdfdff" stroke="#5459cc" stroke-width="0.6"/>
<path d="M377.9 347.8 h4.3 l-0.3 1.5 h-2.2 l-0.2 2 h-1.6z" fill="#d48c2a" stroke="#7a4a10" stroke-width="0.25"/>
<circle cx="377.7" cy="353.5" r="0.55" fill="#f0821a"/>
<text x="386.2" y="353" font-size="4.55" fill="#151515" font-family='"Liberation Sans","DejaVu Sans",sans-serif' textLength="28.8" lengthAdjust="spacingAndGlyphs" >som_off_butt</text>
<path d="M358.6 357.61 h3.4 l-1.7 2.6z" fill="#8e8e8e"/>
<rect x="367.4" y="355.71" width="6" height="6" rx="0.5" fill="#5a58c4" stroke="#8a88e0" stroke-width="0.4"/><rect x="368.2" y="356.51" width="4.4" height="4.4" fill="#d9d9f6"/>
<path d="M369 357.31 l2.6 2.6 m0-1.6 v1.6 h-1.6" stroke="#2c2a98" stroke-width="0.7" fill="none"/><circle cx="369.4" cy="357.71" r="0.8" fill="#2c2a98"/>
<text x="376.4" y="360.51" font-size="4.55" fill="#151515" font-family='"Liberation Sans","DejaVu Sans",sans-serif' textLength="13.6" lengthAdjust="spacingAndGlyphs" >videos</text>
<rect x="378.6" y="363.42" width="3.6" height="5.6" rx="0.3" fill="#fcfcfc" stroke="#222" stroke-width="0.5"/><rect x="379.3" y="366.02" width="2.2" height="1.6" fill="#333"/><path d="M379.3 364.62h2.2" stroke="#777" stroke-width="0.4"/>
<text x="386.2" y="368.02" font-size="4.55" fill="#151515" font-family='"Liberation Sans","DejaVu Sans",sans-serif' textLength="32.5" lengthAdjust="spacingAndGlyphs" >Actions : Fran</text>
<rect x="377.2" y="372.83" width="6.4" height="4.2" rx="1.5" fill="#fdfdff" stroke="#5459cc" stroke-width="0.6"/>
<path d="M377.9 370.33 h4.3 l-0.3 1.5 h-2.2 l-0.2 2 h-1.6z" fill="#d48c2a" stroke="#7a4a10" stroke-width="0.25"/>
<circle cx="377.7" cy="376.03" r="0.55" fill="#f0821a"/>
<text x="386.2" y="375.53" font-size="4.55" fill="#151515" font-family='"Liberation Sans","DejaVu Sans",sans-serif' textLength="8.2" lengthAdjust="spacingAndGlyphs" >azul</text>
<rect x="377.2" y="380.34" width="6.4" height="4.2" rx="1.5" fill="#fdfdff" stroke="#5459cc" stroke-width="0.6"/>
<path d="M377.9 377.84 h4.3 l-0.3 1.5 h-2.2 l-0.2 2 h-1.6z" fill="#d48c2a" stroke="#7a4a10" stroke-width="0.25"/>
<circle cx="377.7" cy="383.54" r="0.55" fill="#f0821a"/>
<text x="386.2" y="383.04" font-size="4.55" fill="#151515" font-family='"Liberation Sans","DejaVu Sans",sans-serif' textLength="11.6" lengthAdjust="spacingAndGlyphs" >menu</text>
<rect x="377.2" y="387.85" width="6.4" height="4.2" rx="1.5" fill="#fdfdff" stroke="#5459cc" stroke-width="0.6"/>
<path d="M377.9 385.35 h4.3 l-0.3 1.5 h-2.2 l-0.2 2 h-1.6z" fill="#d48c2a" stroke="#7a4a10" stroke-width="0.25"/>
<circle cx="377.7" cy="391.05" r="0.55" fill="#f0821a"/>
<text x="386.2" y="390.55" font-size="4.55" fill="#151515" font-family='"Liberation Sans","DejaVu Sans",sans-serif' textLength="29.8" lengthAdjust="spacingAndGlyphs" >som_on_butt</text>
<rect x="377.2" y="395.36" width="6.4" height="4.2" rx="1.5" fill="#fdfdff" stroke="#5459cc" stroke-width="0.6"/>
<path d="M377.9 392.86 h4.3 l-0.3 1.5 h-2.2 l-0.2 2 h-1.6z" fill="#d48c2a" stroke="#7a4a10" stroke-width="0.25"/>
<circle cx="377.7" cy="398.56" r="0.55" fill="#f0821a"/>
<text x="386.2" y="398.06" font-size="4.55" fill="#151515" font-family='"Liberation Sans","DejaVu Sans",sans-serif' textLength="28.8" lengthAdjust="spacingAndGlyphs" >som_off_butt</text>
<path d="M358.6 402.67 h3.4 l-1.7 2.6z" fill="#8e8e8e"/>
<rect x="367.4" y="400.77" width="6" height="6" rx="0.5" fill="#5a58c4" stroke="#8a88e0" stroke-width="0.4"/><rect x="368.2" y="401.57" width="4.4" height="4.4" fill="#d9d9f6"/>
<path d="M369 402.37 l2.6 2.6 m0-1.6 v1.6 h-1.6" stroke="#2c2a98" stroke-width="0.7" fill="none"/><circle cx="369.4" cy="402.77" r="0.8" fill="#2c2a98"/>
<text x="376.4" y="405.57" font-size="4.55" fill="#151515" font-family='"Liberation Sans","DejaVu Sans",sans-serif' textLength="18.6" lengthAdjust="spacingAndGlyphs" >contacto</text>
<rect x="378.6" y="408.48" width="3.6" height="5.6" rx="0.3" fill="#fcfcfc" stroke="#222" stroke-width="0.5"/><rect x="379.3" y="411.08" width="2.2" height="1.6" fill="#333"/><path d="M379.3 409.68h2.2" stroke="#777" stroke-width="0.4"/>
<text x="386.2" y="413.08" font-size="4.55" fill="#151515" font-family='"Liberation Sans","DejaVu Sans",sans-serif' textLength="32.5" lengthAdjust="spacingAndGlyphs" >Actions : Fran</text>
<rect x="377.2" y="417.9" width="6.4" height="4.2" rx="1.5" fill="#fdfdff" stroke="#5459cc" stroke-width="0.6"/>
<path d="M377.9 415.4 h4.3 l-0.3 1.5 h-2.2 l-0.2 2 h-1.6z" fill="#d48c2a" stroke="#7a4a10" stroke-width="0.25"/>
<circle cx="377.7" cy="421.1" r="0.55" fill="#f0821a"/>
<text x="386.2" y="420.6" font-size="4.55" fill="#151515" font-family='"Liberation Sans","DejaVu Sans",sans-serif' textLength="20.4" lengthAdjust="spacingAndGlyphs" >vermelho</text>
<rect x="344.4" y="422.41" width="71.8" height="6.3" fill="#b5d3fa" />
<rect x="377.2" y="425.41" width="6.4" height="4.2" rx="1.5" fill="#fdfdff" stroke="#5459cc" stroke-width="0.6"/>
<path d="M377.9 422.91 h4.3 l-0.3 1.5 h-2.2 l-0.2 2 h-1.6z" fill="#d48c2a" stroke="#7a4a10" stroke-width="0.25"/>
<circle cx="377.7" cy="428.61" r="0.55" fill="#f0821a"/>
<text x="386.2" y="428.11" font-size="4.55" fill="#151515" font-family='"Liberation Sans","DejaVu Sans",sans-serif' textLength="29.8" lengthAdjust="spacingAndGlyphs" >som_on_butt</text>
<rect x="377.2" y="432.92" width="6.4" height="4.2" rx="1.5" fill="#fdfdff" stroke="#5459cc" stroke-width="0.6"/>
<path d="M377.9 430.42 h4.3 l-0.3 1.5 h-2.2 l-0.2 2 h-1.6z" fill="#d48c2a" stroke="#7a4a10" stroke-width="0.25"/>
<circle cx="377.7" cy="436.12" r="0.55" fill="#f0821a"/>
<text x="386.2" y="435.62" font-size="4.55" fill="#151515" font-family='"Liberation Sans","DejaVu Sans",sans-serif' textLength="28.8" lengthAdjust="spacingAndGlyphs" >som_off_butt</text>
<rect x="377.2" y="440.43" width="6.4" height="4.2" rx="1.5" fill="#fdfdff" stroke="#5459cc" stroke-width="0.6"/>
<path d="M377.9 437.93 h4.3 l-0.3 1.5 h-2.2 l-0.2 2 h-1.6z" fill="#d48c2a" stroke="#7a4a10" stroke-width="0.25"/>
<circle cx="377.7" cy="443.63" r="0.55" fill="#f0821a"/>
<text x="386.2" y="443.13" font-size="4.55" fill="#151515" font-family='"Liberation Sans","DejaVu Sans",sans-serif' textLength="11.6" lengthAdjust="spacingAndGlyphs" >menu</text>
<rect x="416.2" y="144" width="6.4" height="302.2" fill="#f2f2f2" />
<line x1="416.2" y1="144" x2="416.2" y2="446.2" stroke="#b8b8b8" stroke-width="0.35" />
<rect x="416.9" y="146.4" width="4.6" height="286.6" rx="2.2" fill="#f7f7f7" stroke="#b4b4b4" stroke-width="0.4"/>
<rect x="416.8" y="185.2" width="4.8" height="248" rx="2.2" fill="url(#g24)" stroke="#858585" stroke-width="0.5"/>
<rect x="416.4" y="434" width="6" height="12" fill="#f4f4f4" />
<line x1="416.4" y1="434" x2="422.4" y2="434" stroke="#a8a8a8" stroke-width="0.35" />
<line x1="416.4" y1="440.2" x2="422.4" y2="440.2" stroke="#a8a8a8" stroke-width="0.35" />
<path d="M418.2 438l1.1-1.6l1.1 1.6zM418.2 442.4l1.1 1.6l1.1-1.6z" fill="#222"/>
<line x1="343.4" y1="446.3" x2="422.6" y2="446.3" stroke="#a0a0a0" stroke-width="0.4" />
<rect x="341.5" y="21.8" width="2.9" height="428.2" fill="url(#g25)" />
<rect x="422.4" y="21.8" width="4.8" height="410.6" fill="#e6e6e6" />
<line x1="422.3" y1="33" x2="422.3" y2="446.6" stroke="#b0b0b0" stroke-width="0.4" />
<rect x="423.2" y="231.6" width="2" height="7.4" rx="0.6" fill="#fafafa" stroke="#9a9a9a" stroke-width="0.3"/><path d="M424.8 234.4v2l-1.2-1z" fill="#333"/>
<rect x="427.2" y="33" width="343.2" height="397.6" fill="#ffffff" />
<rect x="427.2" y="33" width="17.7" height="390.8" fill="#dcdcdc" />
<rect x="427.2" y="33" width="4.8" height="390.8" fill="#e1e1e1" />
<line x1="427.2" y1="33.6" x2="770.4" y2="33.6" stroke="#8c8c8c" stroke-width="0.8" />
<line x1="427.2" y1="33" x2="427.2" y2="430" stroke="#a6a6a6" stroke-width="0.4" />
<text x="435" y="39.5" font-size="5.3" fill="#707070" font-family='"Liberation Sans","DejaVu Sans",sans-serif' >1</text>
<text x="435" y="46.5" font-size="5.3" fill="#707070" font-family='"Liberation Sans","DejaVu Sans",sans-serif' >2</text>
<text x="435" y="53.5" font-size="5.3" fill="#707070" font-family='"Liberation Sans","DejaVu Sans",sans-serif' >3</text>
<text x="435" y="60.5" font-size="5.3" fill="#707070" font-family='"Liberation Sans","DejaVu Sans",sans-serif' >4</text>
<text x="446.8" y="39.6" font-size="5.8" font-family='"Liberation Mono","DejaVu Sans Mono",monospace' textLength="39.64" lengthAdjust="spacingAndGlyphs"><tspan fill="#2424ff">on</tspan><tspan fill="#111">(</tspan><tspan fill="#2424ff">release</tspan><tspan fill="#111">){</tspan></text>
<text x="446.8" y="46.6" font-size="5.8" font-family='"Liberation Mono","DejaVu Sans Mono",monospace' textLength="52.92" lengthAdjust="spacingAndGlyphs"><tspan fill="#2424ff">stopAllSounds</tspan><tspan fill="#111">();</tspan></text>
<text x="446.8" y="53.6" font-size="5.8" font-family='"Liberation Mono","DejaVu Sans Mono",monospace' textLength="52.92" lengthAdjust="spacingAndGlyphs"><tspan fill="#111">musica3</tspan><tspan fill="#2424ff">.start</tspan><tspan fill="#111">();</tspan></text>
<text x="446.8" y="60.6" font-size="5.8" font-family='"Liberation Mono","DejaVu Sans Mono",monospace' textLength="3.12" lengthAdjust="spacingAndGlyphs"><tspan fill="#111">}</tspan></text>
<line x1="450.3" y1="56.6" x2="450.3" y2="62" stroke="#000" stroke-width="0.45" />
<rect x="761.8" y="34" width="6.2" height="389.8" fill="#f1f1f1" />
<line x1="761.8" y1="34" x2="761.8" y2="423.8" stroke="#d0d0d0" stroke-width="0.4" />
<rect x="762.6" y="34.2" width="3.8" height="389.4" fill="#fbfbfb" />
<rect x="768" y="34" width="2.4" height="396" fill="#e6e6e6" />
<line x1="768" y1="34" x2="768" y2="430" stroke="#bcbcbc" stroke-width="0.4" />
<rect x="427.2" y="423.8" width="340.8" height="6" fill="#f4f4f4" />
<line x1="427.2" y1="423.9" x2="768" y2="423.9" stroke="#b4b4b4" stroke-width="0.4" />
<rect x="428.6" y="424.3" width="319" height="5" rx="2.5" fill="#fdfdfd" stroke="#a8a8a8" stroke-width="0.4"/>
<rect x="429.5" y="424.3" width="9.6" height="5" rx="2.4" fill="url(#g26)" stroke="#2f58b0" stroke-width="0.5"/>
<rect x="748.4" y="424.2" width="13" height="5.4" fill="#f8f8f8" />
<line x1="754.8" y1="424.2" x2="754.8" y2="429.6" stroke="#b0b0b0" stroke-width="0.35" />
<line x1="748.4" y1="424.2" x2="748.4" y2="429.6" stroke="#b0b0b0" stroke-width="0.35" />
<path d="M752.4 425.8v2.2l-1.5-1.1zM757.2 425.8v2.2l1.5-1.1z" fill="#222"/>
<rect x="427.2" y="430" width="340.8" height="2.4" fill="url(#g27)" />
<rect x="426.8" y="432.4" width="343.8" height="15.4" fill="#d2d2d2" />
<rect x="342" y="447.8" width="428.6" height="2.2" fill="#bcbcbc" />
<rect x="342" y="446.6" width="84.8" height="1.2" fill="#d2d2d2" />
<line x1="426.6" y1="33" x2="426.6" y2="447.8" stroke="#9c9c9c" stroke-width="0.5" />
<rect x="429.3" y="432.7" width="32.9" height="7.8" rx="0.8" fill="#b9d2f5" stroke="#4a6fd0" stroke-width="0.55"/>
<rect x="431" y="436.1" width="6.4" height="4.2" rx="1.5" fill="#fdfdff" stroke="#5459cc" stroke-width="0.6"/>
<path d="M431.7 433.6 h4.3 l-0.3 1.5 h-2.2 l-0.2 2 h-1.6z" fill="#d48c2a" stroke="#7a4a10" stroke-width="0.25"/>
<circle cx="431.5" cy="439.3" r="0.55" fill="#f0821a"/>
<text x="439" y="438.4" font-size="4.5" fill="#111" font-family='"Liberation Sans","DejaVu Sans",sans-serif' font-weight="bold" textLength="22" lengthAdjust="spacingAndGlyphs" >musica_3</text>
<path d="M464.4 438h4.4M466.6 435.6v2.4M465.2 435.4h2.8" stroke="#777" stroke-width="0.55"/><rect x="465.4" y="434.6" width="2.4" height="1" fill="#eee" stroke="#888" stroke-width="0.3"/>
<text x="429.8" y="446" font-size="4.5" fill="#222" font-family='"Liberation Sans","DejaVu Sans",sans-serif' textLength="37.2" lengthAdjust="spacingAndGlyphs" >Line 4 of 4, Col 2</text>
<path d="M433.4 24.9l1.1 1.8l1.9 1.1l-1.9 1.1l-1.1 1.8l-1.1-1.8l-1.9-1.1l1.9-1.1z" fill="#3f6fc4" stroke="#24488c" stroke-width="0.5"/><circle cx="433.4" cy="27.8" r="0.8" fill="#b9d3f6"/><path d="M435.6 30.2h1.7l-0.85 1.1z" fill="#222"/>
<path d="M444.6 28.6l-2.6 2.2" stroke="#c09a3a" stroke-width="1"/><circle cx="446" cy="27" r="2.1" fill="#dcecff" stroke="#4a6cb0" stroke-width="0.6"/>
<circle cx="455" cy="27.9" r="2.5" fill="#f4f4f4" stroke="#555" stroke-width="0.5"/><path d="M455 24.8v6.2M451.9 27.9h6.2" stroke="#555" stroke-width="0.45"/>
<path d="M461.6 27.6l1.9 2l3.4-3.6" stroke="#2566d4" stroke-width="1.2" fill="none"/>
<path d="M471.6 25h3.8v1.3h-0.7v4.8h-3.6v-1.3h0.5z" fill="#4a4a4a"/><path d="M472 27.4h2.6M472 28.8h2.6" stroke="#888" stroke-width="0.35"/>
<rect x="481.6" y="25.4" width="5.6" height="3.8" rx="0.8" fill="#fff6d0" stroke="#555" stroke-width="0.5"/><path d="M483 29.2l0.4 1.8l1.4-1.8" fill="#fff6d0" stroke="#555" stroke-width="0.45"/><path d="M482.8 27.3h3.2" stroke="#777" stroke-width="0.4"/>
<circle cx="493.4" cy="26.6" r="1.4" fill="none" stroke="#3a3a3a" stroke-width="0.5"/><circle cx="496.8" cy="29.4" r="1.4" fill="none" stroke="#3a3a3a" stroke-width="0.5"/><path d="M494.4 27.6l1.4 0.8M492.2 29.8l4.6-4.6" stroke="#555" stroke-width="0.45"/><path d="M497.6 31h1.6l-0.8 1z" fill="#222"/>
<path d="M503 25.1l2 1.100l-2 1.100zM508.200 25.100l-2 1.100l2 1.100z" fill="#2f62c4"/><path d="M504.600 27.900q-0.900 0-0.900 0.800v0.500q0 0.500-0.600 0.600q0.600 0.100 0.600 0.600v0.500q0 0.800 0.900 0.800M506.600 27.900q0.900 0 0.900 0.800v0.500q0 0.500 0.600 0.600q-0.600 0.100-0.600 0.600v0.500q0 0.800-0.900 0.800" stroke="#333" stroke-width="0.55" fill="none"/>
<path d="M512 25.100l2 1.100l-2 1.100zM517.400 25.100l-2 1.100l2 1.100z" fill="#2f62c4"/><rect x="512.600" y="28.100" width="4.200" height="3" fill="#e8e8e8" stroke="#555" stroke-width="0.5"/>
<path d="M523 25.100l-2 1.100l2 1.100zM524.400 25.100l2 1.100l-2 1.100z" fill="#2f62c4"/><rect x="522.800" y="28.600" width="1.800" height="1.800" fill="#111"/>
<path d="M532.4 30.600l0.300-1.300" stroke="#3a6cd4" stroke-width="0.700"/><ellipse cx="534" cy="27.600" rx="2.800" ry="2.400" fill="#eef4ff" stroke="#3a6cd4" stroke-width="0.750"/>
<path d="M533.200 26.600l-0.500 2M534.900 26.600l-0.500 2" stroke="#3a6cd4" stroke-width="0.500"/>
<path d="M541.6 30.600l0.300-1.300" stroke="#3a6cd4" stroke-width="0.700"/><ellipse cx="543.2" cy="27.600" rx="2.800" ry="2.400" fill="#eef4ff" stroke="#3a6cd4" stroke-width="0.750"/>
<path d="M543.400 26.400l-0.500 2.400" stroke="#3a6cd4" stroke-width="0.600"/>
<path d="M550.8 30.600l0.300-1.300" stroke="#3a6cd4" stroke-width="0.700"/><ellipse cx="552.4" cy="27.600" rx="2.800" ry="2.400" fill="#eef4ff" stroke="#3a6cd4" stroke-width="0.750"/>
<path d="M553.800 24.600l1.800 1.800M555.600 24.600l-1.800 1.800" stroke="#e8401a" stroke-width="0.800"/>
<rect x="561" y="25.400" width="5.600" height="5.600" rx="0.500" fill="#f6f9ff" stroke="#4a74cc" stroke-width="0.550"/><rect x="564" y="26.400" width="2.200" height="4.200" fill="#9cc4e8"/><path d="M563.900 25.400v5.600" stroke="#4a74cc" stroke-width="0.400"/><path d="M564.600 27.800h1.200" stroke="#2a6a6a" stroke-width="0.600"/>
<path d="M707 26.6h3.2v4.2h-3.8v-3.6z" fill="#f2f6ff" stroke="#4a6cb8" stroke-width="0.4"/><path d="M707.4 30.8v-1.8h1.8v1.8" fill="#6a8cd8"/><rect x="708.4" y="25.4" width="2.2" height="2" fill="#e4ecff" stroke="#4a6cb8" stroke-width="0.35"/>
<text x="713.8" y="29.6" font-size="4.5" fill="#111" font-family='"Liberation Sans","DejaVu Sans",sans-serif' textLength="31.6" lengthAdjust="spacingAndGlyphs" >Code Snippets</text>
<path d="M751.2 26l5.6 5" stroke="#222" stroke-width="1.1"/><path d="M750.2 24.6l1.8 1.8" stroke="#e8b020" stroke-width="1.4"/>
<circle cx="763.4" cy="28" r="2.4" fill="#f2f2f2" stroke="#8a8a8a" stroke-width="0.5"/><path d="M763.4 28v-2.4a2.4 2.4 0 0 1 2.4 2.4z" fill="#9a9a9a"/>
<rect x="770" y="21.8" width="1.6" height="428.2" fill="url(#g28)" />
<rect x="771.2" y="23.4" width="28.8" height="4.4" fill="url(#g29)" />
<rect x="783.4" y="25" width="3.2" height="1.2" fill="#9a9a9a"/><rect x="795.4" y="25" width="3.2" height="1.2" fill="#9a9a9a"/>
<rect x="771.2" y="27.7" width="28.8" height="7" fill="url(#g30)" />
<path d="M780.8 30.6h1.7l-0.85 1.2z" fill="#1a1a1a"/><path d="M783.2 30h2.6M783.2 31.2h2.6M783.2 32.4h2.6" stroke="#2a2a2a" stroke-width="0.5"/>
<rect x="771.2" y="34.8" width="16.1" height="406.2" fill="#e0e0e0" />
<rect x="771.2" y="34.8" width="16.1" height="11.6" fill="#dadada" />
<rect x="777.4" y="39" width="3.6" height="2.8" fill="#cfe2fb" stroke="#6a94d8" stroke-width="0.4"/><rect x="779.2" y="40.2" width="3.6" height="2.8" fill="#8fb6f2" stroke="#4a74c8" stroke-width="0.4"/>
<rect x="771.8" y="46.7" width="14.8" height="34.1" fill="#ffffff" />
<circle cx="776.6" cy="50" r="0.6" fill="none" stroke="#888" stroke-width="0.3"/><path d="M783 48.8l1.6 1.2l-1.6 1.2z" fill="#111"/>
<rect x="771.2" y="81.4" width="16.1" height="3.9" fill="#cfcfcf" />
<rect x="772" y="85.4" width="14" height="6" fill="#ffffff" />
<rect x="772" y="85.4" width="14" height="6" fill="none" stroke="#a8a8a8" stroke-width="0.4"/>
<rect x="771.2" y="93.4" width="16.1" height="7.6" fill="url(#g31)" />
<line x1="771.2" y1="108" x2="787.3" y2="108" stroke="#d2d2d2" stroke-width="0.5" />
<line x1="771.2" y1="119" x2="787.3" y2="119" stroke="#d2d2d2" stroke-width="0.5" />
<line x1="771.2" y1="126.5" x2="787.3" y2="126.5" stroke="#d2d2d2" stroke-width="0.5" />
<line x1="771.2" y1="133.5" x2="787.3" y2="133.5" stroke="#d2d2d2" stroke-width="0.5" />
<line x1="771.2" y1="141" x2="787.3" y2="141" stroke="#d2d2d2" stroke-width="0.5" />
<line x1="771.2" y1="150" x2="787.3" y2="150" stroke="#d2d2d2" stroke-width="0.5" />
<rect x="771.2" y="158.2" width="16.1" height="6.2" fill="#c8c8c8" />
<rect x="771.2" y="181.5" width="16.1" height="6.5" fill="#d8d8d8" />
<rect x="771.2" y="190" width="16.1" height="5.5" fill="#d6d6d6" />
<rect x="771.2" y="237" width="16.1" height="204" fill="#d8d8d8" />
<rect x="771.2" y="441" width="16.1" height="5.4" fill="#d0d0d0" />
<line x1="771.2" y1="441.1" x2="787.3" y2="441.1" stroke="#a4a4a4" stroke-width="0.4" />
<rect x="771.8" y="442" width="14.6" height="3.8" fill="#dcdcdc" stroke="#a0a0a0" stroke-width="0.3"/><path d="M783.4 442.8l1.6 1.1l-1.6 1.1z" fill="#222"/>
<rect x="786.6" y="34.7" width="2.7" height="411.7" fill="url(#g32)" />
<line x1="788.3" y1="27.7" x2="788.3" y2="34.7" stroke="#5e5e5e" stroke-width="0.5" />
<rect x="789.3" y="34.7" width="10.7" height="411.9" fill="#d5d5d5" />
<rect x="790" y="37" width="8.4" height="7.9" fill="#9c9c9c" />
<rect x="790" y="37" width="8.4" height="7.9" fill="none" stroke="#777" stroke-width="0.4"/>
<path d="M792.6 38.2v5l1.2-1.1l0.9 1.9l0.9-0.4l-0.9-1.8h1.7z" fill="#111"/>
<path d="M793 47.6v4.6l1.1-1l0.8 1.8l0.9-0.4l-0.8-1.7h1.5z" fill="#333" stroke="#111" stroke-width="0.3"/><rect x="792.4" y="47" width="1" height="1" fill="#fff" stroke="#111" stroke-width="0.25"/>
<rect x="791.4" y="57.4" width="5.4" height="4.8" fill="#555" stroke="#111" stroke-width="0.5"/><path d="M792 58l3 2.6" stroke="#eee" stroke-width="0.6"/><rect x="790.8" y="56.8" width="1.2" height="1.2" fill="#111"/><rect x="796.2" y="61.6" width="1.2" height="1.2" fill="#111"/>
<circle cx="793.8" cy="69.4" r="2.8" fill="url(#g33)" stroke="#222" stroke-width="0.4"/><path d="M796.4 72.4h1.4l-0.7 0.9z" fill="#111"/>
<ellipse cx="794.2" cy="78" rx="3" ry="1.9" fill="none" stroke="#222" stroke-width="0.7" transform="rotate(-15 794.2 78)"/><path d="M792 79.4q-0.8 1.2 0 2.4" stroke="#222" stroke-width="0.6" fill="none"/>
<line x1="789.4" y1="84.6" x2="799.6" y2="84.6" stroke="#b4b4b4" stroke-width="0.4" />
<path d="M793.6 87l1.6 2.2q0.4 1.6-0.4 2.8h-2.4q-0.8-1.2-0.4-2.8z" fill="#333"/><path d="M792.2 92.6h2.8" stroke="#222" stroke-width="0.6"/><path d="M796.4 92.6h1.2l-0.6 0.8z" fill="#111"/>
<text x="794" y="102.6" font-size="7.4" fill="#151515" font-family='"Liberation Serif","DejaVu Serif",serif' font-weight="bold" text-anchor="middle" >T</text>
<line x1="791.4" y1="106.6" x2="796.6" y2="112.2" stroke="#1a1a1a" stroke-width="0.7" />
<rect x="791.4" y="117" width="4.8" height="4.4" fill="#e8e8e8" stroke="#333" stroke-width="0.6"/><path d="M796.6 122.2h1.3l-0.65 0.9z" fill="#111"/>
<path d="M791.4 132l0.6-1.8l4-3.8l1.2 1.2l-4 3.8z" fill="#333"/>
<path d="M796.8 135.2l-2.8 3.2l0.9 0.8z" fill="#222"/><path d="M793.8 138.8q-1.6 0-2.4 2.2q2.2 0.2 3.2-1.4z" fill="#333"/><path d="M796.6 141.4h1.3l-0.65 0.9z" fill="#111"/>
<ellipse cx="794" cy="147.6" rx="3" ry="1.7" fill="#f0f0f0" stroke="#222" stroke-width="0.6" transform="rotate(-30 794 147.6)"/>
<line x1="789.4" y1="153.4" x2="799.6" y2="153.4" stroke="#b4b4b4" stroke-width="0.4" />
<path d="M791.6 161.6l4.2-4.2" stroke="#222" stroke-width="0.9"/><circle cx="796.2" cy="157" r="0.9" fill="#fff" stroke="#222" stroke-width="0.4"/><path d="M796.8 161.6h1.3l-0.65 0.9z" fill="#111"/>
<path d="M791.4 169.2l2.8-2.6l3 3l-2.8 2.4z" fill="#f4f4f4" stroke="#222" stroke-width="0.55"/><path d="M797 170.2q1 1.6 0 2.4q-1-0.8 0-2.4z" fill="#222"/><path d="M796.8 172.8h1.3l-0.65 0.9z" fill="#111"/>
<path d="M791.4 181.6l0.4-1.4l3.4-3.4l1 1l-3.4 3.4z" fill="#333"/><path d="M795 176.2l1.6-1.2l0.9 0.9l-1.2 1.6z" fill="#111"/>
<path d="M791.2 189l3.2-3h2.8l-3.2 3z" fill="#f4f4f4" stroke="#222" stroke-width="0.5"/><path d="M791.2 189v1h2.8l3.2-3v-1" fill="#bbb" stroke="#222" stroke-width="0.4"/>
<line x1="789.4" y1="193.6" x2="799.6" y2="193.6" stroke="#b4b4b4" stroke-width="0.4" />
<path d="M791.8 199.4q-0.6-1.6 0.6-1.6l0.4-1.2h0.9l0.3-0.5h0.9l0.3 0.5h0.8l0.3 0.7h0.7v3.2q-0.6 1.6-2.6 1.6q-1.8 0-2.6-2.7z" fill="#fafafa" stroke="#333" stroke-width="0.45"/>
<circle cx="793.4" cy="207.8" r="1.9" fill="#f0f0f0" stroke="#222" stroke-width="0.7"/><path d="M794.8 209.4l2.2 2.4" stroke="#222" stroke-width="1"/>
<line x1="789.4" y1="215" x2="799.6" y2="215" stroke="#b4b4b4" stroke-width="0.4" />
<path d="M791 223l0.4-1.2l3-3l0.8 0.8l-3 3z" fill="#333"/>
<rect x="790.6" y="226" width="7.8" height="6.2" fill="#fff" stroke="#555" stroke-width="0.5"/><path d="M790.8 232l7.4-5.8" stroke="#e02020" stroke-width="0.7"/>
<path d="M791.6 238.6l1.8-1.7l2 2l-1.8 1.6z" fill="#f4f4f4" stroke="#222" stroke-width="0.45"/><path d="M796 239q0.8 1.3 0 1.9q-0.8-0.6 0-1.9z" fill="#222"/>
<rect x="790.6" y="243.6" width="7.8" height="6.2" fill="#fff" stroke="#555" stroke-width="0.5"/>
<rect x="792" y="253.4" width="2.4" height="2.4" fill="#111"/><rect x="793.4" y="254.8" width="2.4" height="2.4" fill="#fff" stroke="#111" stroke-width="0.4"/>
<rect x="792" y="260.8" width="2" height="2" fill="#111"/><rect x="794" y="262.8" width="2" height="2" fill="#fff" stroke="#111" stroke-width="0.4"/><path d="M794.6 260.6q2 0 2 1.8" stroke="#111" stroke-width="0.5" fill="none"/>
<line x1="789.4" y1="268" x2="799.6" y2="268" stroke="#b4b4b4" stroke-width="0.4" />
<rect x="790.4" y="270.8" width="7.8" height="7.4" fill="#8e8e8e" />
<path d="M792.4 276.8v-2.4q0-1.8 1.9-1.8q1.9 0 1.9 1.8v2.4h-1.1v-2.4q0-0.7-0.8-0.7q-0.8 0-0.8 0.7v2.4z" fill="#ddd" stroke="#333" stroke-width="0.35"/>
<path d="M791 285h1.6M791.8 284.2v1.6" stroke="#888" stroke-width="0.4"/><path d="M796.4 282.6q-2.2 0.6-1 2.2q1.2 1.4-1.2 2.4" stroke="#777" stroke-width="0.6" fill="none"/>
<path d="M791 294h1.6M791.8 293.2v1.6" stroke="#888" stroke-width="0.4"/><path d="M796.4 291.4q-2 2.6 0 5.2" stroke="#777" stroke-width="0.6" fill="none"/>
<rect x="771.2" y="446.5" width="28.8" height="3.5" fill="#050505" />
<rect x="0" y="0" width="800" height="8.8" fill="url(#g34)" />
<line x1="0" y1="8.9" x2="800" y2="8.9" stroke="#6e6e6e" stroke-width="0.5" />
<path d="M11.2 2.6q0.9-0.7 1.9-0.1q-0.9 0.6-0.8 1.6q0.1 1 1 1.4q-0.4 1.2-1.2 1.9q-0.6 0.4-1.3 0q-0.7-0.3-1.3 0q-0.7 0.4-1.3-0.3q-1.1-1.3-0.9-2.9q0.3-1.6 1.7-1.7q0.7 0 1.2 0.3q0.5 0.2 1-0.2z" fill="#151515"/><path d="M10.6 2.2q0-1.1 1.1-1.6q0.1 1.2-1.1 1.6z" fill="#151515"/>
<text x="22.8" y="6.75" font-size="6.2" fill="#111" font-family='"Liberation Sans","DejaVu Sans",sans-serif' font-weight="bold" textLength="15.6" lengthAdjust="spacingAndGlyphs" >Flash</text>
<text x="46" y="6.75" font-size="6.2" fill="#111" font-family='"Liberation Sans","DejaVu Sans",sans-serif' textLength="9.6" lengthAdjust="spacingAndGlyphs" >File</text>
<text x="63.4" y="6.75" font-size="6.2" fill="#111" font-family='"Liberation Sans","DejaVu Sans",sans-serif' textLength="10.6" lengthAdjust="spacingAndGlyphs" >Edit</text>
<text x="81.6" y="6.75" font-size="6.2" fill="#111" font-family='"Liberation Sans","DejaVu Sans",sans-serif' textLength="13" lengthAdjust="spacingAndGlyphs" >View</text>
<text x="102.6" y="6.75" font-size="6.2" fill="#111" font-family='"Liberation Sans","DejaVu Sans",sans-serif' textLength="16.6" lengthAdjust="spacingAndGlyphs" >Insert</text>
<text x="126.2" y="6.75" font-size="6.2" fill="#111" font-family='"Liberation Sans","DejaVu Sans",sans-serif' textLength="19.6" lengthAdjust="spacingAndGlyphs" >Modify</text>
<text x="153" y="6.75" font-size="6.2" fill="#111" font-family='"Liberation Sans","DejaVu Sans",sans-serif' textLength="12.6" lengthAdjust="spacingAndGlyphs" >Text</text>
<text x="173.2" y="6.75" font-size="6.2" fill="#111" font-family='"Liberation Sans","DejaVu Sans",sans-serif' textLength="32" lengthAdjust="spacingAndGlyphs" >Commands</text>
<text x="213" y="6.75" font-size="6.2" fill="#111" font-family='"Liberation Sans","DejaVu Sans",sans-serif' textLength="21.6" lengthAdjust="spacingAndGlyphs" >Control</text>
<text x="241.6" y="6.75" font-size="6.2" fill="#111" font-family='"Liberation Sans","DejaVu Sans",sans-serif' textLength="18.6" lengthAdjust="spacingAndGlyphs" >Debug</text>
<text x="268" y="6.75" font-size="6.2" fill="#111" font-family='"Liberation Sans","DejaVu Sans",sans-serif' textLength="22.4" lengthAdjust="spacingAndGlyphs" >Window</text>
<text x="297.4" y="6.75" font-size="6.2" fill="#111" font-family='"Liberation Sans","DejaVu Sans",sans-serif' textLength="12.6" lengthAdjust="spacingAndGlyphs" >Help</text>
<circle cx="611.4" cy="4.4" r="2.6" fill="#3a9ad8" stroke="#1a5a98" stroke-width="0.4"/><path d="M610 4.4h2.8M611.4 3v2.8" stroke="#fff" stroke-width="0.7"/><circle cx="613.2" cy="6" r="1.3" fill="#4ab04a"/>
<rect x="620.6" y="2.2" width="6" height="4.4" rx="1.2" fill="none" stroke="#222" stroke-width="0.8"/><rect x="622.4" y="3.6" width="2.4" height="1.6" fill="#222"/>
<text x="632" y="3.3" font-size="3.7" fill="#222" font-family='"Liberation Sans","DejaVu Sans",sans-serif' textLength="8" lengthAdjust="spacingAndGlyphs" >48°C</text>
<text x="632" y="7.6" font-size="3.7" fill="#222" font-family='"Liberation Sans","DejaVu Sans",sans-serif' textLength="15.6" lengthAdjust="spacingAndGlyphs" >3496rpm</text>
<rect x="654.4" y="1.4" width="4.8" height="6" rx="1" fill="#1a1a1a"/><path d="M656 3h1.6v3M656 4.6h1.4" stroke="#eee" stroke-width="0.5" fill="none"/>
<rect x="664.4" y="2" width="7.2" height="4.4" fill="#222"/><rect x="665.2" y="2.8" width="5.6" height="2.4" fill="#777"/><path d="M666 7.2h4" stroke="#222" stroke-width="0.6"/>
<circle cx="680.6" cy="4.4" r="2.4" fill="none" stroke="#a4a4a4" stroke-width="0.6"/><path d="M680.6 3v1.6l1 0.6" stroke="#a4a4a4" stroke-width="0.5" fill="none"/>
<path d="M690.6 4.4h5.4M693.3 2.6v3.6" stroke="#555" stroke-width="0.5"/><circle cx="693.3" cy="4.4" r="0.7" fill="#444"/>
<path d="M701.6 3.4q4-3.4 8 0" stroke="#1a1a1a" stroke-width="0.9" fill="none"/><path d="M703 4.9q2.6-2.2 5.2 0" stroke="#1a1a1a" stroke-width="0.9" fill="none"/><path d="M704.4 6.3q1.2-1 2.4 0" stroke="#1a1a1a" stroke-width="0.9" fill="none"/><circle cx="705.6" cy="7.2" r="0.6" fill="#1a1a1a"/>
<path d="M714.6 3.6h1.2l1.8-1.6v5l-1.8-1.6h-1.2z" fill="#1a1a1a"/><path d="M718.6 3.2q1 1.2 0 2.6M719.8 2.4q1.6 2 0 4.2" stroke="#1a1a1a" stroke-width="0.5" fill="none"/>
<rect x="727.2" y="2.2" width="7.6" height="4.4" rx="0.6" fill="none" stroke="#1a1a1a" stroke-width="0.7"/><rect x="735" y="3.5" width="0.8" height="1.8" fill="#1a1a1a"/><rect x="729" y="3.4" width="4" height="2" fill="#1a1a1a"/><path d="M731.6 3l-1.4 1.6h1.4l-1 1.4" stroke="#eee" stroke-width="0.4" fill="none"/>
<text x="738.2" y="6.6" font-size="5" fill="#555" font-family='"Liberation Sans","DejaVu Sans",sans-serif' textLength="12.6" lengthAdjust="spacingAndGlyphs" >(99%)</text>
<text x="755.6" y="6.9" font-size="6.4" fill="#111" font-family='"Liberation Sans","DejaVu Sans",sans-serif' textLength="22.6" lengthAdjust="spacingAndGlyphs" >ter 1:48</text>
<circle cx="787" cy="4" r="2" fill="none" stroke="#1a1a1a" stroke-width="0.8"/><path d="M788.4 5.6l1.8 2" stroke="#1a1a1a" stroke-width="1"/>
</svg>
</body></html>
